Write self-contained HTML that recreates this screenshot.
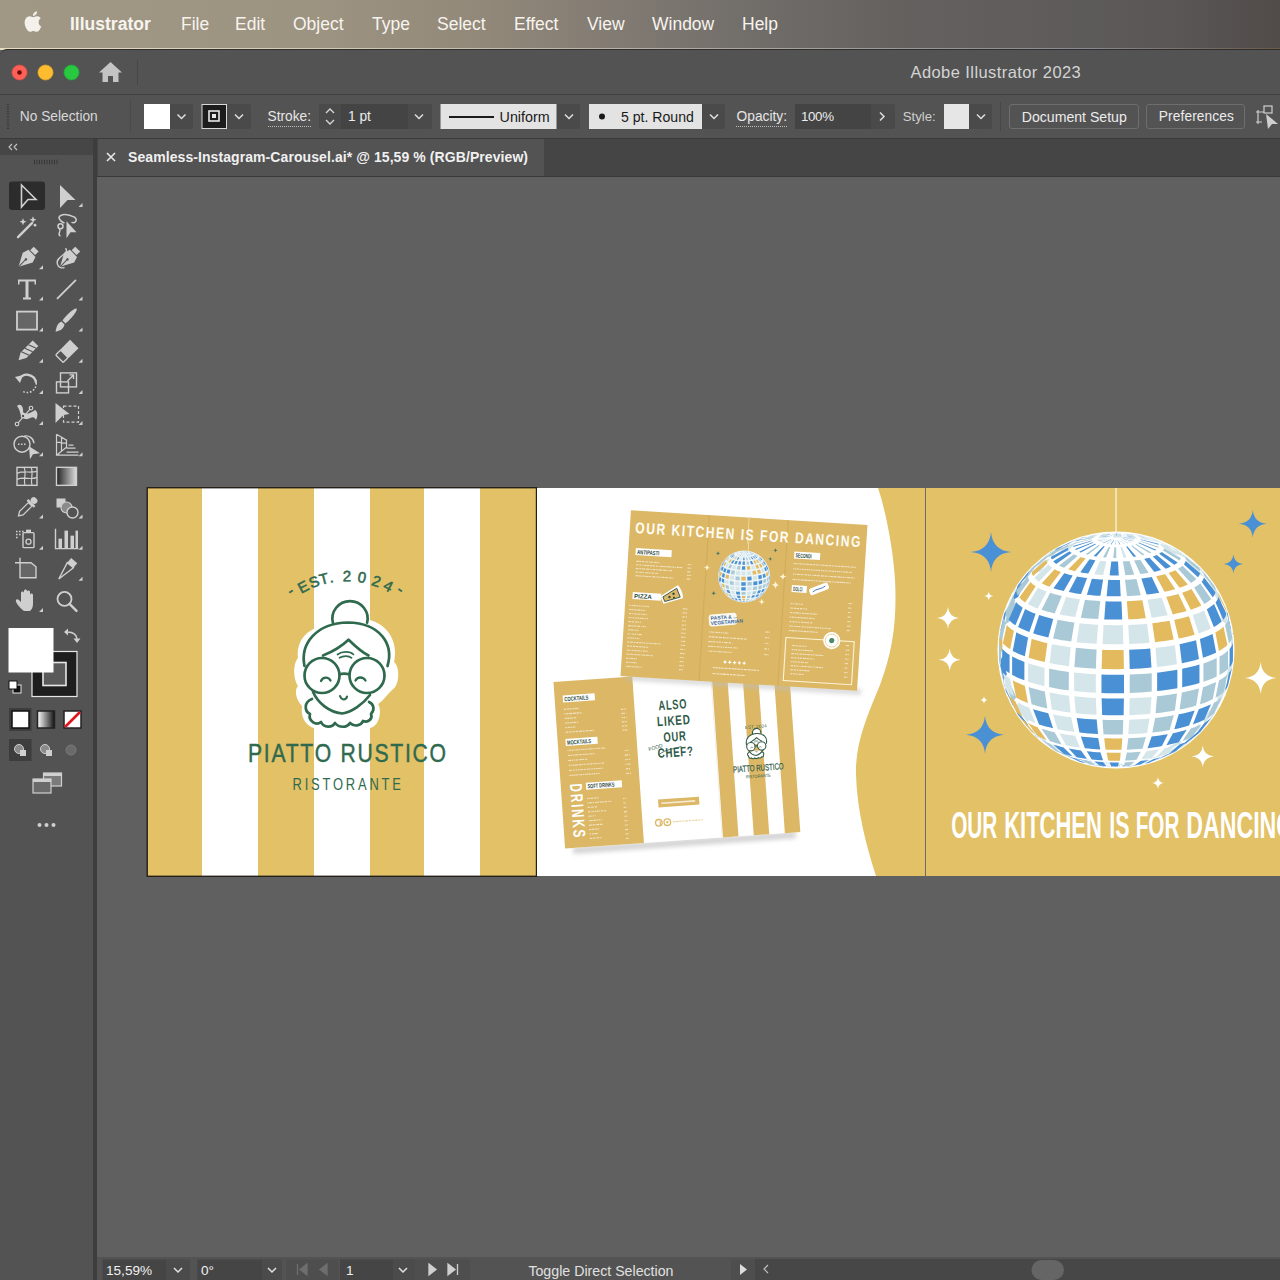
<!DOCTYPE html>
<html><head><meta charset="utf-8"><style>
*{margin:0;padding:0;box-sizing:border-box}
html,body{width:1280px;height:1280px;overflow:hidden;background:#606060;font-family:"Liberation Sans",sans-serif}
.a{position:absolute}
.t{position:absolute;white-space:nowrap;line-height:1}
svg{position:absolute;left:0;top:0;overflow:visible}
</style></head><body>
<div class="a" style="left:0;top:0;width:1280px;height:49px;background:linear-gradient(90deg,#a09784 0%,#9c9381 25%,#918879 38%,#827b73 48%,#726e6a 58%,#64615f 70%,#5d5b5a 85%,#595655 92%,#514b49 100%)"></div>
<div class="a" style="left:0;top:47.5px;width:1280px;height:2px;background:linear-gradient(90deg,#e8dcc0 0%,#cfc6b4 30%,#a8a39c 60%,#8a8890 85%,#6a5a48 100%)"></div>
<div class="a" style="left:0;top:49px;width:1280px;height:1231px;background:#535353;border-top-left-radius:7px;border-top:1px solid #2e2e2e"></div>
<div class="a" style="left:0;top:94px;width:1280px;height:1px;background:#3f3f3f"></div>
<div class="a" style="left:0;top:138px;width:1280px;height:1px;background:#3a3a3a"></div>
<div class="a" style="left:97px;top:139px;width:1183px;height:37px;background:#454545"></div>
<div class="a" style="left:98px;top:139px;width:446px;height:37px;background:#535353"></div>
<div class="a" style="left:97px;top:176px;width:1183px;height:1px;background:#383838"></div>
<div class="a" style="left:0;top:139px;width:93px;height:16px;background:#464646"></div>
<div class="a" style="left:92.5px;top:139px;width:4px;height:1141px;background:#3d3d3d"></div>
<div class="a" style="left:96.5px;top:177px;width:1183.5px;height:1080px;background:#606060"></div>
<div class="a" style="left:97px;top:1257px;width:1183px;height:23px;background:#535353"></div>
<svg width="1280" height="1280"><defs><filter id="blur2" x="-20%" y="-200%" width="140%" height="500%"><feGaussianBlur stdDeviation="2"/></filter><clipPath id="cvclip"><rect x="97" y="177" width="1183" height="1080"/></clipPath></defs><g clip-path="url(#cvclip)"><rect x="147.5" y="488" width="389" height="388" fill="#e3c167"/><rect x="202" y="488" width="56" height="388" fill="#ffffff"/><rect x="314" y="488" width="56" height="388" fill="#ffffff"/><rect x="424" y="488" width="56" height="388" fill="#ffffff"/><rect x="147.2" y="487.7" width="389.3" height="388.6" fill="none" stroke="#262118" stroke-width="1.4"/><text x="0" y="0.6" transform="translate(292.80 594.20) rotate(-36.3)" text-anchor="middle" font-size="15" fill="#2f6a4e" stroke="#2f6a4e" stroke-width="0.55" font-family="Liberation Sans" style="font-weight:normal">-</text><text x="0" y="4.6" transform="translate(303.50 587.44) rotate(-28.3)" text-anchor="middle" font-size="15" fill="#2f6a4e" stroke="#2f6a4e" stroke-width="0.55" font-family="Liberation Sans" style="font-weight:normal">E</text><text x="0" y="4.6" transform="translate(314.29 582.51) rotate(-20.8)" text-anchor="middle" font-size="15" fill="#2f6a4e" stroke="#2f6a4e" stroke-width="0.55" font-family="Liberation Sans" style="font-weight:normal">S</text><text x="0" y="4.6" transform="translate(323.94 579.45) rotate(-14.4)" text-anchor="middle" font-size="15" fill="#2f6a4e" stroke="#2f6a4e" stroke-width="0.55" font-family="Liberation Sans" style="font-weight:normal">T</text><text x="0" y="4.6" transform="translate(331.37 577.87) rotate(-9.6)" text-anchor="middle" font-size="15" fill="#2f6a4e" stroke="#2f6a4e" stroke-width="0.55" font-family="Liberation Sans" style="font-weight:normal">.</text><text x="0" y="4.6" transform="translate(346.82 576.60) rotate(0.2)" text-anchor="middle" font-size="15" fill="#2f6a4e" stroke="#2f6a4e" stroke-width="0.55" font-family="Liberation Sans" style="font-weight:normal">2</text><text x="0" y="4.6" transform="translate(361.94 577.92) rotate(9.8)" text-anchor="middle" font-size="15" fill="#2f6a4e" stroke="#2f6a4e" stroke-width="0.55" font-family="Liberation Sans" style="font-weight:normal">0</text><text x="0" y="4.6" transform="translate(376.33 581.65) rotate(19.2)" text-anchor="middle" font-size="15" fill="#2f6a4e" stroke="#2f6a4e" stroke-width="0.55" font-family="Liberation Sans" style="font-weight:normal">2</text><text x="0" y="4.6" transform="translate(387.96 586.63) rotate(27.2)" text-anchor="middle" font-size="15" fill="#2f6a4e" stroke="#2f6a4e" stroke-width="0.55" font-family="Liberation Sans" style="font-weight:normal">4</text><text x="0" y="0.6" transform="translate(398.26 592.82) rotate(34.8)" text-anchor="middle" font-size="15" fill="#2f6a4e" stroke="#2f6a4e" stroke-width="0.55" font-family="Liberation Sans" style="font-weight:normal">-</text><g transform="translate(346 666) scale(1.0)" fill="none" stroke="#2f6a4e" stroke-width="2.7" stroke-linecap="round" stroke-linejoin="round"><path d="M-14 -42 C-14 -58 14 -72 24 -46 C44 -40 52 -22 48 -4 C54 0 54 20 46 24 C40 30 36 36 32 38 C36 44 34 60 24 62 C14 66 -6 66 -20 64 C-34 64 -46 58 -44 40 C-50 34 -52 24 -48 20 C-54 10 -52 -4 -48 -8 C-50 -26 -38 -40 -14 -42Z" fill="#ffffff" stroke="none"/><path d="M-13.1 -43.2 A17.6 17.6 0 1 1 21.1 -43.2" fill="#ffffff"/><path d="M-41.5 0 C-46 -22 -30 -43 2 -43.5 C34 -43 48 -22 41.5 0" fill="#ffffff"/><path d="M-34 33 C-42 36 -42 45 -36 48 C-38 55 -30 60 -25 56 C-22 62 -14 62 -11 57 C-7 62 1 62 4 57 C8 61 15 60 17 55 C22 57 27 53 25 48 C29 44 28 38 23 36" fill="#ffffff"/><path d="M-33 26 C-28 37 -17 46 -4 47.5 C6 46 17 38 24 29" fill="#ffffff"/><path d="M-23 -10.5 C-12 -15 -4 -20 2.5 -26.3 C9 -20 15 -14 22.5 -10.5" /><path d="M-8.5 -11.5 C-4 -15 4 -15 7.5 -11.5 M-6.5 -8.2 C-3 -10.5 3 -10.5 5.5 -8.2" stroke-width="1.7"/><circle cx="-24" cy="9.5" r="17.5" fill="#ffffff"/><circle cx="21" cy="9.5" r="17.5" fill="#ffffff"/><path d="M-6.5 8.3 C-4 7.6 0 7.6 3.5 8.3" /><path d="M-25 15 C-23 10.5 -17.5 10.5 -15.5 14.5 M9.5 14.5 C11.5 10.5 17 10.5 19.5 14.5" stroke-width="2.3"/><path d="M-6 30 C-4.5 34.5 0 34.5 1 30.5" stroke-width="2.1"/></g><g transform="translate(248 762.2) scale(0.8 1)"><text x="0" y="0" font-size="26.4" fill="#2f6a4e" font-family="Liberation Sans" stroke="#2f6a4e" stroke-width="0.45" textLength="247.5" lengthAdjust="spacing">PIATTO RUSTICO</text></g><g transform="translate(292.5 789.5) scale(0.82 1)"><text x="0" y="0" font-size="15.8" fill="#2f6a4e" font-family="Liberation Sans" textLength="132.3" lengthAdjust="spacing">RISTORANTE</text></g><rect x="537" y="488" width="389" height="388" fill="#ffffff"/><path d="M878 488 C884 505 893 545 895 580 C897 620 893 650 880 685 C866 718 855 745 856 775 C857 810 866 845 876 876 L925 876 L925 488Z" fill="#e3c167"/><g transform="translate(676.5 757) rotate(-4) translate(-117.5 -83.5)"><rect x="8" y="166" width="223" height="7" fill="#b8b8b8" opacity="0.6" filter="url(#blur2)"/><rect x="0" y="0" width="235" height="167" fill="#ffffff"/><rect x="0" y="0" width="79" height="167" fill="#dcb866"/><rect x="158.3" y="0" width="15.5" height="167" fill="#dcb866"/><rect x="189.1" y="0" width="15.5" height="167" fill="#dcb866"/><rect x="220.3" y="0" width="15.5" height="167" fill="#dcb866"/><rect x="157" y="0" width="0.8" height="167" fill="#e6e0d0" opacity="0.6"/><rect x="8.2" y="14.2" width="32" height="7" fill="#ffffff"/><text x="9.7" y="20.0" font-size="6" font-weight="bold" fill="#2c4a40" font-family="Liberation Sans" textLength="24.0" lengthAdjust="spacingAndGlyphs">COCKTAILS</text><path d="M8.6 28.12 h15.0" stroke="#ffffff" stroke-width="1.1" stroke-dasharray="2.1 0.9 2.5 0.4 2.5 0.6 1.3 0.5 2.8 0.8 2.4 0.5" opacity="0.6"/><path d="M8.6 32.72 h18.0" stroke="#ffffff" stroke-width="1.1" stroke-dasharray="1.3 0.6 2.3 0.6 3.0 0.7 3.1 0.6 2.8 0.8 1.4 0.7" opacity="0.6"/><path d="M8.6 37.32 h12.0" stroke="#ffffff" stroke-width="1.1" stroke-dasharray="2.0 0.6 2.5 0.7 2.8 0.8 2.2 0.9 2.3 0.5 2.3 0.6" opacity="0.6"/><path d="M8.6 41.92 h13.5" stroke="#ffffff" stroke-width="1.1" stroke-dasharray="1.5 0.4 2.6 0.5 2.9 0.4 3.0 0.9 2.2 0.7 1.7 0.7" opacity="0.6"/><path d="M8.6 46.52 h10.5" stroke="#ffffff" stroke-width="1.1" stroke-dasharray="1.9 0.9 2.0 0.6 1.2 0.7 2.3 0.6 1.3 0.5 1.5 0.7" opacity="0.6"/><path d="M8.6 51.12 h28.5" stroke="#ffffff" stroke-width="1.1" stroke-dasharray="2.8 0.8 3.2 0.6 1.7 0.9 2.6 0.9 3.1 0.7 1.9 0.8" opacity="0.6"/><path d="M65.5 32.10 h5.0" stroke="#ffffff" stroke-width="1.1" stroke-dasharray="2.0 0.6 0.9 0.5 1.0 0.6 2.0 0.5 1.8 0.5 2.0 0.4" opacity="0.6"/><path d="M65.5 36.30 h5.0" stroke="#ffffff" stroke-width="1.1" stroke-dasharray="2.4 0.5 0.9 1.0 2.9 0.5 2.8 0.8 2.6 0.7 3.1 0.9" opacity="0.6"/><path d="M65.5 40.50 h5.0" stroke="#ffffff" stroke-width="1.1" stroke-dasharray="1.2 0.8 1.5 1.0 1.4 0.6 1.7 1.0 0.9 0.6 1.8 0.7" opacity="0.6"/><path d="M65.5 44.70 h5.0" stroke="#ffffff" stroke-width="1.1" stroke-dasharray="2.8 0.8 2.0 0.6 3.1 0.7 2.0 0.9 1.1 0.6 1.9 0.9" opacity="0.6"/><path d="M65.5 48.90 h5.0" stroke="#ffffff" stroke-width="1.1" stroke-dasharray="1.7 0.7 3.0 0.7 1.2 0.7 3.0 0.6 0.9 0.6 2.0 0.6" opacity="0.6"/><path d="M65.5 53.10 h5.0" stroke="#ffffff" stroke-width="1.1" stroke-dasharray="2.0 0.6 2.8 0.8 2.7 1.0 0.9 0.7 2.5 0.7 1.8 0.9" opacity="0.6"/><rect x="7.9" y="57.8" width="32" height="7" fill="#ffffff"/><text x="9.4" y="63.6" font-size="6" font-weight="bold" fill="#2c4a40" font-family="Liberation Sans" textLength="24.0" lengthAdjust="spacingAndGlyphs">MOCKTAILS</text><path d="M9.3 69.46 h38.0" stroke="#ffffff" stroke-width="1.1" stroke-dasharray="0.9 0.8 2.0 0.7 1.6 0.8 0.9 0.4 2.8 0.6 1.1 0.7" opacity="0.6"/><path d="M9.3 74.46 h26.6" stroke="#ffffff" stroke-width="1.1" stroke-dasharray="2.6 0.5 1.5 0.5 1.0 0.7 2.9 0.5 1.4 0.4 2.0 0.8" opacity="0.6"/><path d="M9.3 79.46 h19.0" stroke="#ffffff" stroke-width="1.1" stroke-dasharray="2.7 0.4 1.5 0.9 1.5 0.8 1.9 1.0 3.0 0.4 1.9 1.0" opacity="0.6"/><path d="M9.3 84.46 h36.1" stroke="#ffffff" stroke-width="1.1" stroke-dasharray="1.2 0.7 1.0 0.8 1.9 0.5 3.1 0.9 2.8 0.6 0.9 0.5" opacity="0.6"/><path d="M9.3 89.46 h34.2" stroke="#ffffff" stroke-width="1.1" stroke-dasharray="3.2 0.9 1.6 1.0 1.5 0.8 1.7 0.6 2.6 0.9 2.4 1.0" opacity="0.6"/><path d="M9.3 94.46 h30.4" stroke="#ffffff" stroke-width="1.1" stroke-dasharray="1.4 0.8 1.7 0.4 1.1 0.5 2.6 0.9 1.1 0.4 1.8 0.8" opacity="0.6"/><path d="M66.1 73.44 h5.0" stroke="#ffffff" stroke-width="1.1" stroke-dasharray="1.0 0.8 1.9 1.0 2.2 0.6 2.2 0.4 2.7 0.4 3.2 0.7" opacity="0.6"/><path d="M66.1 78.04 h5.0" stroke="#ffffff" stroke-width="1.1" stroke-dasharray="3.1 0.8 1.1 0.5 0.9 0.5 2.7 0.5 1.9 0.4 1.2 0.4" opacity="0.6"/><path d="M66.1 82.64 h5.0" stroke="#ffffff" stroke-width="1.1" stroke-dasharray="1.6 0.6 1.1 0.7 2.1 1.0 2.8 0.8 2.6 0.8 2.7 0.7" opacity="0.6"/><path d="M66.1 87.24 h5.0" stroke="#ffffff" stroke-width="1.1" stroke-dasharray="1.2 0.9 3.1 0.9 1.3 0.8 1.6 0.8 1.9 0.6 1.4 0.4" opacity="0.6"/><path d="M66.1 91.84 h5.0" stroke="#ffffff" stroke-width="1.1" stroke-dasharray="2.6 0.5 1.1 0.8 2.2 1.0 2.1 1.0 2.8 0.5 2.5 0.6" opacity="0.6"/><path d="M66.1 96.44 h5.0" stroke="#ffffff" stroke-width="1.1" stroke-dasharray="3.0 0.9 1.1 0.6 1.8 0.4 1.5 0.7 1.7 1.0 2.7 0.9" opacity="0.6"/><rect x="25.2" y="102.8" width="36" height="7" fill="#ffffff"/><text x="26.7" y="108.6" font-size="6" font-weight="bold" fill="#2c4a40" font-family="Liberation Sans" textLength="27.0" lengthAdjust="spacingAndGlyphs">SOFT DRINKS</text><path d="M25.4 118.71 h12.0" stroke="#ffffff" stroke-width="1.1" stroke-dasharray="1.5 0.5 1.0 0.6 2.4 0.8 2.6 0.9 1.4 0.8 1.9 0.4" opacity="0.6"/><path d="M25.4 123.15 h24.0" stroke="#ffffff" stroke-width="1.1" stroke-dasharray="1.2 0.7 2.6 0.8 1.3 0.9 1.7 0.5 2.0 0.8 2.4 0.4" opacity="0.6"/><path d="M25.4 127.60 h9.6" stroke="#ffffff" stroke-width="1.1" stroke-dasharray="2.4 0.9 3.1 0.8 2.3 0.8 0.8 0.7 1.8 0.5 1.5 0.6" opacity="0.6"/><path d="M25.4 132.04 h18.0" stroke="#ffffff" stroke-width="1.1" stroke-dasharray="2.1 0.7 0.8 0.8 1.9 0.7 1.4 0.6 2.9 0.8 2.7 0.8" opacity="0.6"/><path d="M25.4 136.48 h7.2" stroke="#ffffff" stroke-width="1.1" stroke-dasharray="1.5 0.4 1.5 0.9 1.0 1.0 2.8 0.5 2.9 0.6 2.0 0.8" opacity="0.6"/><path d="M25.4 140.93 h13.2" stroke="#ffffff" stroke-width="1.1" stroke-dasharray="1.3 0.5 2.3 0.6 2.6 0.6 1.5 0.7 1.5 0.9 2.0 0.7" opacity="0.6"/><path d="M25.4 145.37 h14.4" stroke="#ffffff" stroke-width="1.1" stroke-dasharray="3.1 0.6 2.8 0.9 3.0 0.6 2.9 0.7 1.6 0.4 0.9 0.6" opacity="0.6"/><path d="M25.4 149.82 h9.6" stroke="#ffffff" stroke-width="1.1" stroke-dasharray="2.0 0.6 2.7 0.7 2.2 0.4 2.6 0.9 2.9 0.8 1.9 0.5" opacity="0.6"/><path d="M25.4 154.26 h8.4" stroke="#ffffff" stroke-width="1.1" stroke-dasharray="1.6 0.9 2.2 0.5 3.0 0.4 2.2 0.9 2.0 0.6 1.9 0.8" opacity="0.6"/><path d="M25.4 158.71 h12.0" stroke="#ffffff" stroke-width="1.1" stroke-dasharray="2.1 0.7 2.9 0.8 3.0 0.5 1.0 0.6 2.5 1.0 1.6 0.8" opacity="0.6"/><path d="M61.3 121.22 h3.0" stroke="#ffffff" stroke-width="1.1" stroke-dasharray="1.3 0.8 2.9 0.9 2.9 0.8 2.5 0.6 2.1 0.5 3.0 0.4" opacity="0.6"/><path d="M61.3 125.66 h3.0" stroke="#ffffff" stroke-width="1.1" stroke-dasharray="1.9 0.9 2.2 0.4 1.0 0.9 1.4 1.0 2.4 0.8 1.6 0.9" opacity="0.6"/><path d="M61.3 130.11 h3.0" stroke="#ffffff" stroke-width="1.1" stroke-dasharray="1.7 0.5 1.0 0.9 2.6 0.5 2.0 1.0 3.0 0.5 0.8 0.7" opacity="0.6"/><path d="M61.3 134.55 h3.0" stroke="#ffffff" stroke-width="1.1" stroke-dasharray="3.0 0.9 2.7 0.6 2.2 0.4 1.4 0.5 2.2 0.9 1.7 1.0" opacity="0.6"/><path d="M61.3 139.00 h3.0" stroke="#ffffff" stroke-width="1.1" stroke-dasharray="1.0 0.4 2.8 0.9 1.6 0.8 1.3 1.0 1.8 0.6 0.9 0.9" opacity="0.6"/><path d="M61.3 143.44 h3.0" stroke="#ffffff" stroke-width="1.1" stroke-dasharray="1.4 0.5 2.8 0.9 1.1 0.8 2.0 1.0 3.1 0.5 1.0 0.9" opacity="0.6"/><path d="M61.3 147.88 h3.0" stroke="#ffffff" stroke-width="1.1" stroke-dasharray="0.9 0.7 3.0 1.0 1.3 0.7 1.5 0.6 2.1 0.6 2.3 0.6" opacity="0.6"/><path d="M61.3 152.33 h3.0" stroke="#ffffff" stroke-width="1.1" stroke-dasharray="2.8 0.9 1.5 0.9 2.8 0.5 2.0 0.5 2.6 0.6 1.0 0.6" opacity="0.6"/><path d="M61.3 156.77 h3.0" stroke="#ffffff" stroke-width="1.1" stroke-dasharray="3.1 0.8 2.3 0.5 1.5 0.8 0.9 0.6 2.8 0.5 1.2 0.6" opacity="0.6"/><path d="M61.3 161.22 h3.0" stroke="#ffffff" stroke-width="1.1" stroke-dasharray="1.2 0.4 2.8 0.5 1.2 0.7 2.3 1.0 3.1 0.8 2.6 0.8" opacity="0.6"/><text x="0" y="0" transform="translate(9.4 102.9) rotate(90)" font-size="17" font-weight="bold" fill="#ffffff" font-family="Liberation Sans" textLength="56" lengthAdjust="spacingAndGlyphs" letter-spacing="3">DRINKS</text><text x="103.1" y="35.6" font-size="13.5" font-weight="bold" fill="#2f5a48" font-family="Liberation Sans" textLength="28.7" lengthAdjust="spacingAndGlyphs" letter-spacing="1">ALSO</text><text x="100.5" y="51.6" font-size="13.5" font-weight="bold" fill="#2f5a48" font-family="Liberation Sans" textLength="33.6" lengthAdjust="spacingAndGlyphs" letter-spacing="1">LIKED</text><text x="105.8" y="67.6" font-size="13.5" font-weight="bold" fill="#2f5a48" font-family="Liberation Sans" textLength="23.1" lengthAdjust="spacingAndGlyphs" letter-spacing="1">OUR</text><text x="99.0" y="83.2" font-size="13.5" font-weight="bold" fill="#2f5a48" font-family="Liberation Sans" textLength="35.9" lengthAdjust="spacingAndGlyphs" letter-spacing="1">CHEF?</text><path d="M99.3 80.2 C109.3 74.2 113.3 76.2 123.3 73.2" stroke="#2f5a48" stroke-width="0.8" fill="none"/><text x="90.5" y="75.6" transform="rotate(-12 90.5 75.6)" font-size="5" fill="#2f5a48" font-family="Liberation Sans">FOOD</text><rect x="96.1" y="124.6" width="41" height="8" fill="#dcb866"/><rect x="99.1" y="127.8" width="34" height="1.6" fill="#ffffff" opacity="0.7"/><circle cx="95.3" cy="147.9" r="3.3" fill="none" stroke="#dcb866" stroke-width="1.3"/><circle cx="103.8" cy="147.9" r="3.3" fill="none" stroke="#dcb866" stroke-width="1.3"/><circle cx="103.8" cy="147.9" r="1.2" fill="#dcb866"/><rect x="96.1" y="146.4" width="1.2" height="4" fill="#dcb866"/><path d="M109.3 147.9 h30" stroke="#dcb866" stroke-width="1.2" stroke-dasharray="2 0.8 3 0.8 2 1" opacity="0.6"/><g transform="translate(198.2 76.1) scale(0.24)" fill="none" stroke="#2f5a48" stroke-width="4.5" stroke-linecap="round" stroke-linejoin="round"><path d="M-13.1 -43.2 A17.6 17.6 0 1 1 21.1 -43.2" fill="#ffffff"/><path d="M-41.5 0 C-46 -22 -30 -43 2 -43.5 C34 -43 48 -22 41.5 0" fill="#ffffff"/><path d="M-34 33 C-42 36 -42 45 -36 48 C-38 55 -30 60 -25 56 C-22 62 -14 62 -11 57 C-7 62 1 62 4 57 C8 61 15 60 17 55 C22 57 27 53 25 48 C29 44 28 38 23 36" fill="#ffffff"/><path d="M-33 26 C-28 37 -17 46 -4 47.5 C6 46 17 38 24 29" fill="#ffffff"/><path d="M-23 -10.5 C-12 -15 -4 -20 2.5 -26.3 C9 -20 15 -14 22.5 -10.5" /><path d="M-8.5 -11.5 C-4 -15 4 -15 7.5 -11.5 M-6.5 -8.2 C-3 -10.5 3 -10.5 5.5 -8.2" stroke-width="1.7"/><circle cx="-24" cy="9.5" r="17.5" fill="#ffffff"/><circle cx="21" cy="9.5" r="17.5" fill="#ffffff"/><path d="M-6.5 8.3 C-4 7.6 0 7.6 3.5 8.3" /><path d="M-25 15 C-23 10.5 -17.5 10.5 -15.5 14.5 M9.5 14.5 C11.5 10.5 17 10.5 19.5 14.5" stroke-width="2.3"/><path d="M-6 30 C-4.5 34.5 0 34.5 1 30.5" stroke-width="2.1"/></g><text x="173.1" y="103.2" font-size="9" fill="#2f5a48" font-family="Liberation Sans" textLength="50.6" lengthAdjust="spacingAndGlyphs" stroke="#2f5a48" stroke-width="0.2">PIATTO RUSTICO</text><text x="185.3" y="109.8" font-size="4.5" fill="#2f5a48" font-family="Liberation Sans" textLength="25" lengthAdjust="spacingAndGlyphs">RISTORANTE</text><text x="187.8" y="60.3" font-size="4.5" fill="#2f5a48" opacity="0.8" font-family="Liberation Sans" textLength="22" lengthAdjust="spacingAndGlyphs">EST. 2024</text></g><g transform="translate(744 600.5) rotate(3.6) translate(-118.5 -83.0)"><rect x="6" y="164" width="235" height="6" fill="#bdbdbd" opacity="0.55" filter="url(#blur2)"/><rect x="0" y="0" width="237" height="166" fill="#dcb866"/><rect x="78" y="0" width="1.2" height="166" fill="#c9a655" opacity="0.6"/><rect x="157" y="0" width="1.2" height="166" fill="#c9a655" opacity="0.6"/><rect x="118.0" y="0" width="0.8" height="26" fill="#f3e2b5" opacity="0.8"/><text x="5.5" y="22.5" font-size="15.5" font-weight="bold" fill="#fffdf5" font-family="Liberation Sans" textLength="227" lengthAdjust="spacingAndGlyphs" letter-spacing="2">OUR KITCHEN IS FOR DANCING</text><rect x="7.3" y="37.5" width="36" height="7" fill="#ffffff"/><text x="8.8" y="43.3" font-size="6" font-weight="bold" fill="#2c4a40" font-family="Liberation Sans" textLength="22.3" lengthAdjust="spacingAndGlyphs">ANTIPASTI</text><path d="M8.5 50.55 h23.2" stroke="#ffffff" stroke-width="1.1" stroke-dasharray="2.7 0.4 1.6 0.6 2.7 0.9 3.2 0.7 0.9 0.5 2.4 1.0" opacity="0.6"/><path d="M8.5 54.17 h46.5" stroke="#ffffff" stroke-width="1.1" stroke-dasharray="2.4 0.9 1.8 0.8 0.9 0.9 2.5 0.4 2.6 0.6 2.3 0.5" opacity="0.6"/><path d="M8.5 57.80 h36.3" stroke="#ffffff" stroke-width="1.1" stroke-dasharray="2.5 1.0 2.1 0.8 3.0 0.9 2.8 0.5 1.1 1.0 0.8 0.5" opacity="0.6"/><path d="M8.5 61.42 h23.2" stroke="#ffffff" stroke-width="1.1" stroke-dasharray="2.7 1.0 3.1 0.9 0.9 0.9 0.9 0.5 2.1 0.7 1.2 0.9" opacity="0.6"/><path d="M8.5 65.05 h38.1" stroke="#ffffff" stroke-width="1.1" stroke-dasharray="2.9 0.6 1.0 0.4 1.6 0.9 1.9 0.7 2.6 0.6 2.7 0.9" opacity="0.6"/><path d="M60.0 50.55 h4.0" stroke="#ffffff" stroke-width="1.1" stroke-dasharray="1.8 1.0 0.9 0.7 2.5 0.7 1.6 0.9 2.9 0.4 1.1 0.9" opacity="0.6"/><path d="M60.0 54.17 h4.0" stroke="#ffffff" stroke-width="1.1" stroke-dasharray="2.7 0.6 1.3 0.4 1.6 0.8 2.5 0.6 2.2 0.7 2.0 0.9" opacity="0.6"/><path d="M60.0 57.80 h4.0" stroke="#ffffff" stroke-width="1.1" stroke-dasharray="2.9 0.9 2.7 0.9 1.3 0.5 1.2 0.7 1.3 0.8 0.9 0.6" opacity="0.6"/><path d="M60.0 61.42 h4.0" stroke="#ffffff" stroke-width="1.1" stroke-dasharray="1.7 0.7 2.6 0.4 1.0 0.7 1.7 0.8 2.2 0.4 1.6 0.8" opacity="0.6"/><path d="M60.0 65.05 h4.0" stroke="#ffffff" stroke-width="1.1" stroke-dasharray="3.0 0.7 0.9 0.5 2.2 0.4 1.8 0.8 2.9 0.7 2.4 0.8" opacity="0.6"/><rect x="7" y="81.5" width="28.6" height="7" fill="#ffffff"/><text x="8.5" y="87.3" font-size="6" font-weight="bold" fill="#2c4a40" font-family="Liberation Sans" textLength="17.7" lengthAdjust="spacingAndGlyphs">PIZZA</text><g transform="translate(36.6 87.6) rotate(-25)"><path d="M0 -4 L20 -8 C22 -6 22 4 20 6 L0 4Z" fill="#ffffff"/><path d="M2 -2.5 L18 -5.5 L18 4 L2 2.5Z" fill="#dcb866" stroke="#2c4a40" stroke-width="0.8"/><circle cx="8" cy="0" r="1.2" fill="#2c4a40"/><circle cx="13" cy="-1.5" r="1.2" fill="#2c4a40"/><circle cx="12" cy="2.2" r="1" fill="#2c4a40"/></g><path d="M4.5 95.05 h19.5" stroke="#ffffff" stroke-width="1.1" stroke-dasharray="1.4 0.9 1.7 0.5 2.1 0.6 1.9 0.5 1.5 0.9 1.0 0.9" opacity="0.6"/><path d="M4.5 99.12 h16.0" stroke="#ffffff" stroke-width="1.1" stroke-dasharray="1.8 0.4 2.2 0.6 2.3 0.7 2.8 0.5 2.0 0.9 2.9 0.6" opacity="0.6"/><path d="M4.5 103.18 h17.8" stroke="#ffffff" stroke-width="1.1" stroke-dasharray="1.9 0.9 1.0 0.8 1.0 0.6 1.7 0.6 2.8 0.7 1.4 0.6" opacity="0.6"/><path d="M4.5 107.25 h19.5" stroke="#ffffff" stroke-width="1.1" stroke-dasharray="1.8 0.8 1.1 0.8 1.5 0.9 1.8 0.6 1.4 0.5 1.7 0.5" opacity="0.6"/><path d="M4.5 111.32 h12.4" stroke="#ffffff" stroke-width="1.1" stroke-dasharray="2.8 0.6 2.2 0.9 2.5 0.4 1.2 0.9 2.1 1.0 1.0 0.7" opacity="0.6"/><path d="M4.5 115.38 h17.8" stroke="#ffffff" stroke-width="1.1" stroke-dasharray="2.8 0.5 1.6 0.5 2.7 0.9 2.8 1.0 0.8 0.7 1.8 0.6" opacity="0.6"/><path d="M4.5 119.45 h10.7" stroke="#ffffff" stroke-width="1.1" stroke-dasharray="1.8 0.6 3.2 0.9 1.2 0.5 1.5 0.7 1.5 0.8 2.5 0.4" opacity="0.6"/><path d="M4.5 123.52 h14.2" stroke="#ffffff" stroke-width="1.1" stroke-dasharray="1.7 1.0 1.0 1.0 2.1 0.6 1.0 0.6 1.0 0.9 3.1 0.8" opacity="0.6"/><path d="M4.5 127.58 h12.4" stroke="#ffffff" stroke-width="1.1" stroke-dasharray="2.3 0.7 2.1 0.4 1.1 0.7 1.4 0.8 1.8 0.9 0.9 0.8" opacity="0.6"/><path d="M4.5 131.65 h33.7" stroke="#ffffff" stroke-width="1.1" stroke-dasharray="2.2 0.9 2.8 0.7 1.2 0.7 2.8 0.8 2.0 0.6 3.0 0.8" opacity="0.6"/><path d="M4.5 135.72 h21.3" stroke="#ffffff" stroke-width="1.1" stroke-dasharray="2.1 0.9 2.2 0.9 2.2 0.7 2.4 0.8 2.4 0.5 0.9 0.5" opacity="0.6"/><path d="M4.5 139.78 h21.3" stroke="#ffffff" stroke-width="1.1" stroke-dasharray="3.1 0.6 1.1 0.7 1.3 0.8 2.3 0.8 2.3 1.0 1.4 0.8" opacity="0.6"/><path d="M4.5 143.85 h26.6" stroke="#ffffff" stroke-width="1.1" stroke-dasharray="3.0 0.6 3.1 0.7 1.0 0.5 1.5 0.6 2.4 0.9 0.9 0.6" opacity="0.6"/><path d="M4.5 147.92 h10.7" stroke="#ffffff" stroke-width="1.1" stroke-dasharray="2.0 0.7 1.3 0.6 2.5 0.8 1.5 0.4 2.7 0.7 2.6 0.6" opacity="0.6"/><path d="M4.5 151.98 h10.7" stroke="#ffffff" stroke-width="1.1" stroke-dasharray="2.6 0.8 1.2 0.8 1.4 0.5 2.2 0.4 1.5 0.9 1.7 0.7" opacity="0.6"/><path d="M4.5 156.05 h16.0" stroke="#ffffff" stroke-width="1.1" stroke-dasharray="0.9 0.5 2.3 0.5 1.5 0.7 1.0 0.6 1.9 0.7 2.5 0.8" opacity="0.6"/><path d="M58.0 95.05 h4.5" stroke="#ffffff" stroke-width="1.1" stroke-dasharray="2.0 0.6 3.0 0.8 3.1 0.9 0.9 0.5 1.7 0.8 1.5 0.6" opacity="0.6"/><path d="M58.0 99.12 h4.5" stroke="#ffffff" stroke-width="1.1" stroke-dasharray="2.0 0.7 2.7 0.8 1.6 0.6 2.6 0.7 3.1 0.5 2.9 0.9" opacity="0.6"/><path d="M58.0 103.18 h4.5" stroke="#ffffff" stroke-width="1.1" stroke-dasharray="2.5 0.9 2.4 1.0 2.6 0.8 2.2 0.9 2.9 0.6 1.1 0.9" opacity="0.6"/><path d="M58.0 107.25 h4.5" stroke="#ffffff" stroke-width="1.1" stroke-dasharray="1.0 0.4 0.8 0.8 0.9 0.9 2.8 0.5 2.2 0.7 2.8 0.5" opacity="0.6"/><path d="M58.0 111.32 h4.5" stroke="#ffffff" stroke-width="1.1" stroke-dasharray="2.2 1.0 1.1 0.9 2.6 0.8 1.6 0.7 0.9 0.9 2.4 0.7" opacity="0.6"/><path d="M58.0 115.38 h4.5" stroke="#ffffff" stroke-width="1.1" stroke-dasharray="1.1 0.7 1.3 0.4 1.8 0.7 3.0 0.6 1.1 0.9 1.1 0.9" opacity="0.6"/><path d="M58.0 119.45 h4.5" stroke="#ffffff" stroke-width="1.1" stroke-dasharray="1.5 0.8 1.8 0.7 2.2 0.8 2.5 0.8 2.9 0.5 1.6 1.0" opacity="0.6"/><path d="M58.0 123.52 h4.5" stroke="#ffffff" stroke-width="1.1" stroke-dasharray="2.5 0.7 2.9 0.6 1.3 1.0 1.0 0.5 2.3 0.7 2.8 0.8" opacity="0.6"/><path d="M58.0 127.58 h4.5" stroke="#ffffff" stroke-width="1.1" stroke-dasharray="0.9 0.6 3.0 0.5 2.9 0.8 2.9 0.5 2.7 0.9 1.0 0.7" opacity="0.6"/><path d="M58.0 131.65 h4.5" stroke="#ffffff" stroke-width="1.1" stroke-dasharray="1.2 1.0 2.7 0.8 2.3 0.5 1.3 0.8 1.1 0.9 2.6 0.8" opacity="0.6"/><path d="M58.0 135.72 h4.5" stroke="#ffffff" stroke-width="1.1" stroke-dasharray="2.8 1.0 2.8 0.7 3.1 0.4 2.7 0.9 2.8 0.6 3.0 0.9" opacity="0.6"/><path d="M58.0 139.78 h4.5" stroke="#ffffff" stroke-width="1.1" stroke-dasharray="2.0 0.4 2.7 0.4 2.1 0.7 1.9 0.8 2.5 0.4 2.7 0.7" opacity="0.6"/><path d="M58.0 143.85 h4.5" stroke="#ffffff" stroke-width="1.1" stroke-dasharray="1.4 0.6 1.9 0.7 1.4 0.6 1.0 0.9 2.0 0.9 0.9 0.7" opacity="0.6"/><path d="M58.0 147.92 h4.5" stroke="#ffffff" stroke-width="1.1" stroke-dasharray="3.2 0.5 2.4 0.9 3.1 0.8 2.8 1.0 2.4 0.7 2.3 0.9" opacity="0.6"/><path d="M58.0 151.98 h4.5" stroke="#ffffff" stroke-width="1.1" stroke-dasharray="2.6 0.7 1.4 0.6 0.8 0.4 2.7 0.6 0.9 0.4 1.9 0.9" opacity="0.6"/><path d="M58.0 156.05 h4.5" stroke="#ffffff" stroke-width="1.1" stroke-dasharray="1.9 0.6 1.4 0.7 1.3 0.9 2.8 0.7 2.7 0.7 2.2 0.5" opacity="0.6"/><rect x="119.19891192893512" y="24" width="0.8" height="9.134603086658473" fill="#f3e2b5"/><g transform="rotate(-3.6 117.19891192893512 59.13460308665847)"><circle cx="117.19891192893512" cy="59.13460308665847" r="26" fill="#eef5f7"/><path d="M121.13 83.14 L121.13 83.13 L121.13 83.12 L121.12 83.11 L121.12 83.10 L118.04 83.48 L118.04 83.48 L118.04 83.48 L118.04 83.49 L118.04 83.49Z" fill="#d4e5ea"/><path d="M131.19 79.35 L131.17 79.24 L131.14 79.14 L131.10 79.03 L131.05 78.92 L127.82 80.80 L127.86 80.88 L127.89 80.96 L127.91 81.04 L127.93 81.13Z" fill="#d4e5ea"/><path d="M95.48 48.92 L95.01 49.20 L94.59 49.49 L94.21 49.78 L93.87 50.07 L93.11 53.49 L93.46 53.19 L93.85 52.89 L94.29 52.60 L94.77 52.31Z" fill="#a9c9d6"/><path d="M96.20 70.74 L96.03 70.98 L95.88 71.23 L95.77 71.48 L95.70 71.73 L97.91 74.65 L97.98 74.42 L98.08 74.20 L98.21 73.98 L98.37 73.76Z" fill="#d4e5ea"/><path d="M113.26 83.31 L113.27 83.32 L113.27 83.33 L113.27 83.34 L113.28 83.36 L116.36 83.53 L116.36 83.53 L116.36 83.53 L116.36 83.53 L116.36 83.53Z" fill="#d4e5ea"/><path d="M102.60 39.49 L102.11 39.66 L101.65 39.84 L101.21 40.02 L100.79 40.21 L98.89 42.73 L99.36 42.52 L99.85 42.32 L100.37 42.12 L100.91 41.93Z" fill="#d4e5ea"/><path d="M135.38 76.11 L135.36 75.92 L135.31 75.73 L135.24 75.55 L135.14 75.36 L132.38 77.85 L132.45 78.01 L132.51 78.17 L132.56 78.33 L132.58 78.48Z" fill="#d4e5ea"/><path d="M121.09 83.42 L121.09 83.41 L121.10 83.40 L121.11 83.39 L121.11 83.38 L118.04 83.54 L118.04 83.54 L118.04 83.54 L118.03 83.55 L118.03 83.55Z" fill="#d4e5ea"/><path d="M108.22 36.01 L107.79 36.10 L107.37 36.20 L106.96 36.30 L106.57 36.41 L104.61 38.17 L105.08 38.04 L105.56 37.92 L106.06 37.80 L106.57 37.69Z" fill="#d4e5ea"/><path d="M113.45 83.58 L113.46 83.59 L113.47 83.61 L113.49 83.62 L113.50 83.63 L116.41 83.59 L116.40 83.59 L116.40 83.59 L116.40 83.59 L116.40 83.58Z" fill="#4a90d5"/><path d="M120.82 83.69 L120.83 83.68 L120.85 83.67 L120.86 83.66 L120.88 83.65 L117.99 83.60 L117.98 83.60 L117.98 83.60 L117.98 83.60 L117.97 83.61Z" fill="#d4e5ea"/><path d="M108.04 82.08 L108.05 82.11 L108.06 82.13 L108.07 82.16 L108.08 82.19 L111.63 83.11 L111.62 83.09 L111.62 83.08 L111.61 83.06 L111.61 83.04Z" fill="#d4e5ea"/><path d="M93.90 65.90 L93.69 66.19 L93.52 66.48 L93.39 66.77 L93.30 67.07 L94.84 70.35 L94.92 70.07 L95.04 69.80 L95.20 69.53 L95.40 69.26Z" fill="#a9c9d6"/><path d="M138.75 72.08 L138.72 71.83 L138.66 71.58 L138.56 71.33 L138.43 71.08 L136.24 74.07 L136.36 74.29 L136.45 74.51 L136.50 74.74 L136.53 74.96Z" fill="#d4e5ea"/><path d="M140.90 50.46 L140.62 50.16 L140.29 49.86 L139.92 49.57 L139.51 49.28 L140.24 52.68 L140.66 52.97 L141.04 53.27 L141.38 53.58 L141.67 53.89Z" fill="#d4e5ea"/><path d="M134.14 40.48 L133.77 40.29 L133.36 40.10 L132.93 39.91 L132.48 39.73 L134.25 42.20 L134.75 42.40 L135.23 42.61 L135.68 42.82 L136.11 43.04Z" fill="#d4e5ea"/><path d="M113.85 83.84 L113.87 83.85 L113.89 83.86 L113.91 83.86 L113.93 83.87 L116.50 83.65 L116.49 83.64 L116.49 83.64 L116.49 83.64 L116.48 83.64Z" fill="#4a90d5"/><path d="M126.25 82.33 L126.26 82.31 L126.28 82.28 L126.29 82.26 L126.30 82.23 L122.76 83.14 L122.75 83.15 L122.74 83.17 L122.73 83.18 L122.73 83.20Z" fill="#d4e5ea"/><path d="M128.43 36.59 L128.05 36.48 L127.67 36.37 L127.27 36.26 L126.86 36.16 L128.63 37.87 L129.12 37.99 L129.59 38.11 L130.05 38.24 L130.49 38.38Z" fill="#d4e5ea"/><path d="M120.34 83.93 L120.36 83.92 L120.38 83.91 L120.40 83.90 L120.43 83.89 L117.89 83.65 L117.89 83.65 L117.88 83.65 L117.88 83.65 L117.87 83.66Z" fill="#d4e5ea"/><path d="M114.45 84.05 L114.47 84.06 L114.50 84.07 L114.53 84.08 L114.56 84.08 L116.63 83.69 L116.63 83.69 L116.62 83.69 L116.61 83.69 L116.61 83.68Z" fill="#4a90d5"/><path d="M119.67 84.13 L119.70 84.12 L119.73 84.11 L119.76 84.10 L119.79 84.10 L117.75 83.69 L117.75 83.69 L117.74 83.70 L117.74 83.70 L117.73 83.70Z" fill="#d4e5ea"/><path d="M115.20 84.22 L115.24 84.23 L115.27 84.23 L115.30 84.24 L115.34 84.24 L116.80 83.72 L116.79 83.72 L116.79 83.72 L116.78 83.72 L116.77 83.72Z" fill="#4a90d5"/><path d="M103.21 79.68 L103.23 79.79 L103.26 79.90 L103.30 80.00 L103.35 80.11 L106.58 81.71 L106.54 81.63 L106.51 81.54 L106.49 81.46 L106.47 81.38Z" fill="#d4e5ea"/><path d="M118.87 84.27 L118.90 84.27 L118.93 84.26 L118.97 84.26 L119.00 84.25 L117.59 83.73 L117.58 83.73 L117.57 83.73 L117.56 83.73 L117.56 83.73Z" fill="#4a90d5"/><path d="M97.31 44.43 L96.89 44.68 L96.51 44.94 L96.17 45.19 L95.87 45.45 L94.39 48.57 L94.72 48.29 L95.08 48.01 L95.49 47.74 L95.93 47.48Z" fill="#4a90d5"/><path d="M118.05 33.87 L117.77 33.87 L117.50 33.87 L117.22 33.86 L116.94 33.87 L116.86 34.64 L117.22 34.63 L117.59 34.64 L117.95 34.64 L118.31 34.65Z" fill="#d4e5ea"/><path d="M116.07 84.33 L116.11 84.34 L116.15 84.34 L116.19 84.34 L116.22 84.34 L116.99 83.75 L116.98 83.75 L116.97 83.75 L116.97 83.74 L116.96 83.74Z" fill="#4a90d5"/><path d="M117.96 84.36 L118.00 84.36 L118.04 84.35 L118.07 84.35 L118.11 84.35 L117.39 83.75 L117.39 83.75 L117.38 83.75 L117.37 83.75 L117.36 83.75Z" fill="#4a90d5"/><path d="M141.14 67.46 L141.12 67.16 L141.04 66.87 L140.93 66.57 L140.77 66.28 L139.26 69.61 L139.40 69.89 L139.51 70.16 L139.58 70.44 L139.61 70.72Z" fill="#d4e5ea"/><path d="M117.01 84.38 L117.05 84.38 L117.09 84.38 L117.13 84.38 L117.17 84.38 L117.19 83.75 L117.18 83.75 L117.18 83.75 L117.17 83.75 L117.16 83.75Z" fill="#4a90d5"/><path d="M92.64 60.76 L92.41 61.08 L92.22 61.39 L92.08 61.71 L91.99 62.03 L92.77 65.54 L92.86 65.23 L92.99 64.92 L93.17 64.61 L93.40 64.31Z" fill="#4a90d5"/><path d="M115.49 33.91 L115.21 33.92 L114.94 33.94 L114.67 33.95 L114.40 33.97 L113.54 34.78 L113.89 34.75 L114.25 34.73 L114.60 34.71 L114.96 34.69Z" fill="#d4e5ea"/><path d="M120.57 34.02 L120.30 34.00 L120.04 33.98 L119.77 33.96 L119.50 33.94 L120.20 34.73 L120.56 34.75 L120.91 34.78 L121.26 34.81 L121.60 34.84Z" fill="#d4e5ea"/><path d="M108.47 82.72 L108.50 82.74 L108.53 82.77 L108.56 82.79 L108.59 82.82 L111.94 83.49 L111.92 83.48 L111.90 83.46 L111.89 83.45 L111.87 83.43Z" fill="#4a90d5"/><path d="M130.92 80.34 L130.98 80.23 L131.04 80.12 L131.09 80.02 L131.13 79.91 L127.89 81.55 L127.85 81.64 L127.82 81.72 L127.77 81.80 L127.72 81.88Z" fill="#d4e5ea"/><path d="M125.62 82.95 L125.65 82.93 L125.69 82.91 L125.72 82.88 L125.75 82.86 L122.42 83.52 L122.40 83.53 L122.38 83.55 L122.36 83.56 L122.34 83.58Z" fill="#d4e5ea"/><path d="M138.87 45.80 L138.62 45.54 L138.33 45.28 L138.00 45.02 L137.63 44.76 L139.05 47.83 L139.44 48.10 L139.79 48.38 L140.10 48.66 L140.37 48.94Z" fill="#d4e5ea"/><path d="M99.02 76.35 L99.04 76.53 L99.09 76.72 L99.16 76.91 L99.25 77.09 L102.02 79.32 L101.94 79.16 L101.88 79.00 L101.84 78.84 L101.82 78.68Z" fill="#d4e5ea"/><path d="M113.02 34.11 L112.76 34.15 L112.51 34.18 L112.26 34.22 L112.02 34.26 L110.43 35.15 L110.75 35.10 L111.07 35.05 L111.40 35.00 L111.74 34.96Z" fill="#d4e5ea"/><path d="M105.51 36.74 L105.17 36.86 L104.85 36.99 L104.54 37.12 L104.24 37.25 L101.86 39.16 L102.21 39.00 L102.58 38.85 L102.96 38.70 L103.36 38.56Z" fill="#a9c9d6"/><path d="M142.46 62.44 L142.43 62.12 L142.35 61.80 L142.22 61.48 L142.05 61.17 L141.28 64.70 L141.45 65.01 L141.57 65.32 L141.64 65.63 L141.67 65.94Z" fill="#d4e5ea"/><path d="M122.89 34.35 L122.65 34.30 L122.41 34.26 L122.17 34.22 L121.92 34.19 L123.37 35.06 L123.69 35.10 L124.01 35.16 L124.33 35.21 L124.64 35.26Z" fill="#d4e5ea"/><path d="M92.48 55.56 L92.24 55.88 L92.05 56.20 L91.91 56.53 L91.82 56.85 L91.81 60.42 L91.90 60.10 L92.05 59.78 L92.23 59.45 L92.47 59.14Z" fill="#e3bb5e"/><path d="M109.41 83.30 L109.45 83.33 L109.50 83.35 L109.55 83.37 L109.60 83.39 L112.56 83.84 L112.53 83.83 L112.50 83.82 L112.47 83.80 L112.44 83.79Z" fill="#4a90d5"/><path d="M134.95 77.38 L135.08 77.20 L135.19 77.01 L135.27 76.83 L135.33 76.64 L132.53 78.94 L132.48 79.09 L132.41 79.25 L132.32 79.41 L132.21 79.56Z" fill="#4a90d5"/><path d="M130.59 37.46 L130.32 37.33 L130.04 37.19 L129.74 37.06 L129.42 36.94 L131.67 38.79 L132.04 38.94 L132.40 39.09 L132.74 39.25 L133.05 39.41Z" fill="#d4e5ea"/><path d="M100.01 40.62 L99.68 40.82 L99.38 41.02 L99.10 41.23 L98.85 41.44 L96.72 44.11 L97.00 43.87 L97.31 43.64 L97.65 43.41 L98.02 43.19Z" fill="#a9c9d6"/><path d="M124.50 83.51 L124.55 83.49 L124.61 83.47 L124.66 83.45 L124.71 83.43 L121.79 83.87 L121.75 83.88 L121.72 83.89 L121.69 83.90 L121.66 83.92Z" fill="#d4e5ea"/><path d="M103.75 80.66 L103.86 80.76 L103.98 80.86 L104.10 80.96 L104.24 81.06 L107.26 82.44 L107.15 82.36 L107.06 82.28 L106.97 82.21 L106.89 82.13Z" fill="#a9c9d6"/><path d="M95.65 72.25 L95.68 72.50 L95.74 72.75 L95.83 73.00 L95.96 73.25 L98.15 76.01 L98.04 75.78 L97.95 75.56 L97.89 75.34 L97.87 75.11Z" fill="#4a90d5"/><path d="M110.79 34.49 L110.57 34.54 L110.36 34.59 L110.15 34.64 L109.94 34.70 L107.71 35.73 L107.98 35.65 L108.26 35.58 L108.54 35.52 L108.83 35.45Z" fill="#d4e5ea"/><path d="M142.63 57.27 L142.60 56.94 L142.52 56.62 L142.39 56.29 L142.21 55.97 L142.22 59.54 L142.40 59.86 L142.52 60.19 L142.60 60.51 L142.63 60.84Z" fill="#d4e5ea"/><path d="M124.88 34.82 L124.69 34.76 L124.48 34.71 L124.28 34.65 L124.07 34.60 L126.18 35.59 L126.45 35.66 L126.72 35.74 L126.98 35.81 L127.24 35.88Z" fill="#d4e5ea"/><path d="M129.85 81.27 L130.00 81.17 L130.15 81.07 L130.28 80.97 L130.41 80.87 L127.33 82.29 L127.23 82.37 L127.13 82.45 L127.02 82.52 L126.90 82.60Z" fill="#4a90d5"/><path d="M135.85 41.75 L135.64 41.53 L135.40 41.32 L135.14 41.11 L134.84 40.90 L136.89 43.50 L137.22 43.73 L137.51 43.97 L137.78 44.21 L138.01 44.45Z" fill="#d4e5ea"/><path d="M110.79 83.81 L110.86 83.83 L110.92 83.84 L110.99 83.86 L111.05 83.88 L113.45 84.14 L113.41 84.13 L113.37 84.12 L113.33 84.11 L113.29 84.10Z" fill="#a9c9d6"/><path d="M93.42 50.54 L93.20 50.84 L93.02 51.15 L92.88 51.46 L92.80 51.77 L92.00 55.24 L92.09 54.92 L92.23 54.60 L92.42 54.29 L92.65 53.98Z" fill="#4a90d5"/><path d="M122.95 83.98 L123.02 83.96 L123.09 83.94 L123.16 83.93 L123.23 83.91 L120.88 84.16 L120.84 84.17 L120.80 84.18 L120.76 84.19 L120.71 84.20Z" fill="#d4e5ea"/><path d="M138.19 73.59 L138.37 73.35 L138.52 73.10 L138.63 72.85 L138.70 72.60 L136.49 75.43 L136.42 75.65 L136.32 75.87 L136.19 76.10 L136.03 76.32Z" fill="#d4e5ea"/><path d="M93.25 67.57 L93.28 67.87 L93.36 68.16 L93.47 68.46 L93.63 68.75 L95.14 71.93 L94.99 71.65 L94.89 71.38 L94.82 71.10 L94.79 70.83Z" fill="#4a90d5"/><path d="M112.55 84.20 L112.63 84.21 L112.71 84.23 L112.79 84.24 L112.86 84.25 L114.55 84.37 L114.50 84.36 L114.46 84.35 L114.41 84.35 L114.36 84.34Z" fill="#4a90d5"/><path d="M121.08 84.32 L121.16 84.31 L121.24 84.30 L121.32 84.28 L121.40 84.27 L119.76 84.38 L119.71 84.39 L119.66 84.40 L119.62 84.40 L119.57 84.41Z" fill="#4a90d5"/><path d="M141.65 52.17 L141.62 51.86 L141.54 51.55 L141.42 51.24 L141.25 50.93 L142.04 54.38 L142.21 54.70 L142.34 55.01 L142.41 55.33 L142.44 55.65Z" fill="#4a90d5"/><path d="M103.49 37.64 L103.25 37.79 L103.04 37.93 L102.84 38.08 L102.67 38.23 L99.99 40.31 L100.21 40.14 L100.44 39.96 L100.69 39.79 L100.96 39.63Z" fill="#4a90d5"/><path d="M108.94 35.01 L108.77 35.07 L108.60 35.14 L108.44 35.21 L108.29 35.27 L105.55 36.48 L105.75 36.39 L105.96 36.30 L106.18 36.22 L106.41 36.13Z" fill="#a9c9d6"/><path d="M99.64 77.61 L99.82 77.79 L100.02 77.97 L100.24 78.15 L100.48 78.32 L103.06 80.36 L102.86 80.21 L102.67 80.06 L102.50 79.91 L102.35 79.76Z" fill="#4a90d5"/><path d="M114.58 84.46 L114.67 84.47 L114.75 84.47 L114.84 84.48 L114.93 84.49 L115.81 84.51 L115.76 84.51 L115.71 84.50 L115.65 84.50 L115.60 84.49Z" fill="#4a90d5"/><path d="M118.97 84.52 L119.06 84.51 L119.15 84.51 L119.23 84.50 L119.32 84.50 L118.49 84.52 L118.44 84.52 L118.39 84.53 L118.34 84.53 L118.28 84.53Z" fill="#4a90d5"/><path d="M95.44 45.91 L95.24 46.18 L95.08 46.45 L94.96 46.73 L94.88 47.00 L93.33 50.22 L93.42 49.93 L93.55 49.64 L93.72 49.35 L93.93 49.06Z" fill="#a9c9d6"/><path d="M105.07 81.56 L105.26 81.66 L105.46 81.75 L105.66 81.84 L105.88 81.92 L108.52 83.10 L108.35 83.03 L108.20 82.96 L108.05 82.89 L107.90 82.82Z" fill="#4a90d5"/><path d="M116.77 84.57 L116.85 84.57 L116.94 84.57 L117.03 84.57 L117.12 84.57 L117.15 84.56 L117.10 84.56 L117.04 84.56 L116.99 84.56 L116.93 84.56Z" fill="#a9c9d6"/><path d="M126.42 35.42 L126.28 35.35 L126.13 35.28 L125.98 35.21 L125.82 35.15 L128.46 36.31 L128.67 36.40 L128.88 36.49 L129.07 36.58 L129.26 36.67Z" fill="#d4e5ea"/><path d="M117.46 33.72 L117.41 33.71 L117.35 33.71 L117.30 33.71 L117.25 33.71 L117.28 33.69 L117.36 33.69 L117.45 33.69 L117.54 33.70 L117.63 33.70Z" fill="#d4e5ea"/><path d="M140.50 69.13 L140.71 68.84 L140.88 68.55 L141.01 68.26 L141.10 67.96 L139.56 71.19 L139.48 71.47 L139.36 71.74 L139.20 72.01 L139.00 72.28Z" fill="#d4e5ea"/><path d="M116.13 33.74 L116.08 33.75 L116.03 33.75 L115.98 33.75 L115.92 33.76 L115.10 33.77 L115.18 33.76 L115.27 33.75 L115.36 33.75 L115.44 33.74Z" fill="#d4e5ea"/><path d="M131.98 38.46 L131.83 38.31 L131.66 38.16 L131.47 38.02 L131.27 37.87 L133.86 39.89 L134.10 40.07 L134.32 40.24 L134.52 40.42 L134.70 40.60Z" fill="#d4e5ea"/><path d="M118.77 33.78 L118.72 33.78 L118.67 33.77 L118.62 33.77 L118.57 33.76 L119.45 33.78 L119.54 33.78 L119.62 33.79 L119.71 33.80 L119.79 33.80Z" fill="#d4e5ea"/><path d="M128.04 82.11 L128.27 82.02 L128.49 81.93 L128.71 81.85 L128.91 81.76 L126.18 82.97 L126.03 83.04 L125.86 83.11 L125.69 83.17 L125.52 83.24Z" fill="#a9c9d6"/><path d="M133.49 78.59 L133.76 78.42 L134.02 78.25 L134.25 78.08 L134.46 77.90 L131.80 80.00 L131.62 80.15 L131.42 80.30 L131.21 80.44 L130.97 80.58Z" fill="#a9c9d6"/><path d="M91.94 62.53 L91.97 62.85 L92.05 63.17 L92.18 63.49 L92.35 63.81 L93.12 67.26 L92.95 66.95 L92.83 66.64 L92.75 66.33 L92.72 66.02Z" fill="#a9c9d6"/><path d="M114.87 33.86 L114.82 33.87 L114.77 33.88 L114.72 33.88 L114.68 33.89 L113.04 33.99 L113.12 33.98 L113.20 33.96 L113.28 33.95 L113.36 33.94Z" fill="#d4e5ea"/><path d="M119.99 33.94 L119.95 33.93 L119.90 33.92 L119.85 33.91 L119.81 33.90 L121.50 34.01 L121.57 34.02 L121.65 34.03 L121.73 34.05 L121.80 34.06Z" fill="#d4e5ea"/><path d="M139.57 47.37 L139.54 47.09 L139.47 46.82 L139.36 46.54 L139.22 46.27 L140.74 49.44 L140.90 49.73 L141.01 50.03 L141.08 50.32 L141.11 50.61Z" fill="#e3bb5e"/><path d="M98.42 41.89 L98.27 42.11 L98.14 42.33 L98.04 42.56 L97.97 42.78 L95.74 45.60 L95.82 45.35 L95.93 45.10 L96.07 44.85 L96.25 44.61Z" fill="#4a90d5"/><path d="M113.74 34.07 L113.70 34.08 L113.66 34.09 L113.62 34.10 L113.57 34.11 L111.23 34.35 L111.29 34.33 L111.36 34.31 L111.43 34.30 L111.50 34.28Z" fill="#d4e5ea"/><path d="M141.76 64.21 L141.99 63.90 L142.18 63.58 L142.32 63.26 L142.41 62.94 L141.63 66.42 L141.54 66.73 L141.40 67.04 L141.22 67.35 L141.00 67.65Z" fill="#4a90d5"/><path d="M96.34 73.75 L96.57 74.00 L96.84 74.23 L97.14 74.47 L97.47 74.70 L99.50 77.31 L99.21 77.10 L98.94 76.89 L98.70 76.68 L98.49 76.46Z" fill="#e3bb5e"/><path d="M121.05 34.17 L121.01 34.16 L120.97 34.15 L120.93 34.14 L120.89 34.13 L123.29 34.38 L123.35 34.40 L123.42 34.41 L123.48 34.43 L123.55 34.45Z" fill="#d4e5ea"/><path d="M107.57 35.65 L107.45 35.72 L107.35 35.79 L107.24 35.87 L107.15 35.95 L104.06 37.36 L104.19 37.26 L104.32 37.16 L104.46 37.06 L104.62 36.96Z" fill="#4a90d5"/><path d="M107.10 82.35 L107.36 82.43 L107.63 82.50 L107.90 82.58 L108.18 82.65 L110.28 83.65 L110.07 83.60 L109.86 83.54 L109.65 83.49 L109.46 83.43Z" fill="#4a90d5"/><path d="M91.77 57.35 L91.80 57.67 L91.88 58.00 L92.01 58.32 L92.18 58.64 L92.18 62.21 L92.00 61.89 L91.87 61.57 L91.79 61.24 L91.76 60.92Z" fill="#a9c9d6"/><path d="M125.61 82.79 L125.90 82.72 L126.19 82.65 L126.47 82.58 L126.74 82.51 L124.51 83.55 L124.31 83.61 L124.09 83.66 L123.87 83.71 L123.65 83.76Z" fill="#4a90d5"/><path d="M136.47 43.09 L136.45 42.87 L136.39 42.65 L136.30 42.42 L136.19 42.20 L138.39 44.95 L138.52 45.20 L138.61 45.45 L138.68 45.70 L138.70 45.95Z" fill="#a9c9d6"/><path d="M127.43 36.11 L127.35 36.03 L127.26 35.96 L127.17 35.88 L127.07 35.80 L130.10 37.17 L130.23 37.27 L130.35 37.37 L130.47 37.47 L130.57 37.57Z" fill="#d4e5ea"/><path d="M112.81 34.35 L112.78 34.36 L112.75 34.37 L112.71 34.39 L112.68 34.40 L109.76 34.82 L109.81 34.80 L109.86 34.78 L109.91 34.76 L109.96 34.74Z" fill="#a9c9d6"/><path d="M136.42 75.02 L136.79 74.79 L137.13 74.56 L137.44 74.33 L137.72 74.09 L135.60 76.77 L135.36 76.98 L135.08 77.19 L134.77 77.39 L134.44 77.60Z" fill="#4a90d5"/><path d="M101.29 78.80 L101.61 78.97 L101.95 79.12 L102.31 79.28 L102.68 79.43 L104.92 81.29 L104.60 81.17 L104.30 81.03 L104.01 80.90 L103.74 80.76Z" fill="#a9c9d6"/><path d="M102.25 38.66 L102.15 38.81 L102.06 38.97 L101.99 39.13 L101.94 39.28 L99.13 41.57 L99.19 41.38 L99.27 41.20 L99.38 41.01 L99.51 40.83Z" fill="#a9c9d6"/><path d="M121.88 34.47 L121.86 34.46 L121.83 34.45 L121.80 34.43 L121.77 34.42 L124.73 34.86 L124.78 34.88 L124.83 34.90 L124.87 34.93 L124.92 34.95Z" fill="#d4e5ea"/><path d="M141.92 59.05 L142.16 58.73 L142.35 58.41 L142.49 58.08 L142.58 57.76 L142.59 61.33 L142.49 61.66 L142.35 61.98 L142.16 62.30 L141.93 62.62Z" fill="#4a90d5"/><path d="M92.75 52.25 L92.78 52.56 L92.85 52.87 L92.98 53.18 L93.14 53.49 L92.36 57.02 L92.19 56.70 L92.06 56.38 L91.98 56.06 L91.95 55.74Z" fill="#a9c9d6"/><path d="M109.72 82.98 L110.03 83.03 L110.35 83.09 L110.67 83.14 L111.00 83.19 L112.45 84.07 L112.19 84.03 L111.95 83.99 L111.70 83.95 L111.46 83.91Z" fill="#a9c9d6"/><path d="M131.08 79.66 L131.48 79.52 L131.87 79.37 L132.24 79.22 L132.59 79.06 L130.22 80.98 L129.92 81.11 L129.61 81.24 L129.28 81.37 L128.94 81.49Z" fill="#4a90d5"/><path d="M132.51 39.53 L132.48 39.38 L132.44 39.22 L132.38 39.06 L132.31 38.91 L135.08 41.12 L135.18 41.30 L135.25 41.49 L135.29 41.68 L135.32 41.86Z" fill="#a9c9d6"/><path d="M122.69 83.28 L123.02 83.24 L123.36 83.19 L123.69 83.14 L124.01 83.09 L122.42 84.00 L122.17 84.04 L121.92 84.07 L121.67 84.11 L121.41 84.14Z" fill="#4a90d5"/><path d="M94.00 69.25 L94.27 69.53 L94.58 69.81 L94.93 70.09 L95.32 70.36 L96.73 73.44 L96.36 73.18 L96.03 72.92 L95.74 72.66 L95.49 72.39Z" fill="#e3bb5e"/><path d="M112.14 34.68 L112.12 34.70 L112.10 34.71 L112.07 34.73 L112.06 34.74 L108.72 35.39 L108.75 35.36 L108.79 35.34 L108.82 35.32 L108.86 35.29Z" fill="#4a90d5"/><path d="M106.76 36.36 L106.71 36.44 L106.66 36.52 L106.62 36.60 L106.59 36.68 L103.34 38.31 L103.38 38.21 L103.43 38.10 L103.49 38.00 L103.55 37.89Z" fill="#a9c9d6"/><path d="M117.27 34.34 L117.26 34.34 L117.24 34.34 L117.23 34.34 L117.21 34.34 L117.23 33.90 L117.27 33.90 L117.31 33.90 L117.34 33.90 L117.38 33.90Z" fill="#4a90d5"/><path d="M122.45 34.83 L122.43 34.81 L122.41 34.80 L122.39 34.78 L122.38 34.77 L125.73 35.43 L125.76 35.46 L125.79 35.48 L125.82 35.50 L125.85 35.53Z" fill="#d4e5ea"/><path d="M116.90 34.35 L116.88 34.35 L116.87 34.35 L116.85 34.35 L116.84 34.35 L116.31 33.93 L116.34 33.93 L116.38 33.93 L116.42 33.93 L116.45 33.92Z" fill="#a9c9d6"/><path d="M117.64 34.36 L117.63 34.36 L117.61 34.36 L117.60 34.35 L117.58 34.35 L118.15 33.94 L118.19 33.94 L118.23 33.94 L118.26 33.95 L118.30 33.95Z" fill="#a9c9d6"/><path d="M112.77 83.40 L113.12 83.43 L113.47 83.46 L113.83 83.49 L114.19 83.51 L114.89 84.32 L114.61 84.30 L114.34 84.28 L114.07 84.26 L113.80 84.23Z" fill="#4a90d5"/><path d="M119.44 83.56 L119.81 83.54 L120.17 83.52 L120.53 83.49 L120.88 83.47 L120.03 84.28 L119.75 84.30 L119.48 84.32 L119.20 84.34 L118.92 84.35Z" fill="#a9c9d6"/><path d="M116.54 34.38 L116.53 34.38 L116.51 34.39 L116.50 34.39 L116.49 34.39 L115.44 34.03 L115.47 34.02 L115.50 34.02 L115.54 34.01 L115.57 34.01Z" fill="#4a90d5"/><path d="M140.97 53.88 L141.20 53.57 L141.38 53.27 L141.51 52.96 L141.60 52.65 L142.40 56.15 L142.30 56.47 L142.17 56.79 L141.98 57.11 L141.75 57.42Z" fill="#a9c9d6"/><path d="M94.83 47.48 L94.86 47.76 L94.93 48.03 L95.04 48.30 L95.18 48.58 L93.66 51.91 L93.50 51.62 L93.39 51.32 L93.31 51.03 L93.28 50.73Z" fill="#a9c9d6"/><path d="M117.99 34.40 L117.97 34.40 L117.96 34.40 L117.95 34.40 L117.93 34.39 L119.02 34.04 L119.05 34.04 L119.09 34.05 L119.12 34.05 L119.15 34.06Z" fill="#4a90d5"/><path d="M116.07 83.60 L116.44 83.60 L116.81 83.61 L117.18 83.61 L117.54 83.61 L117.46 84.39 L117.18 84.39 L116.90 84.39 L116.62 84.39 L116.33 84.38Z" fill="#4a90d5"/><path d="M138.50 70.72 L138.94 70.45 L139.34 70.18 L139.71 69.90 L140.03 69.62 L138.57 72.74 L138.26 73.01 L137.92 73.26 L137.54 73.52 L137.13 73.77Z" fill="#a9c9d6"/><path d="M116.22 34.44 L116.21 34.44 L116.20 34.45 L116.19 34.45 L116.18 34.45 L114.67 34.18 L114.69 34.17 L114.72 34.16 L114.75 34.16 L114.78 34.15Z" fill="#a9c9d6"/><path d="M127.85 36.85 L127.83 36.77 L127.81 36.69 L127.78 36.61 L127.74 36.53 L130.98 38.12 L131.03 38.22 L131.06 38.33 L131.09 38.43 L131.11 38.54Z" fill="#d4e5ea"/><path d="M118.29 34.47 L118.27 34.47 L118.26 34.46 L118.25 34.46 L118.24 34.46 L119.78 34.19 L119.81 34.20 L119.84 34.21 L119.86 34.21 L119.89 34.22Z" fill="#a9c9d6"/><path d="M115.96 34.52 L115.95 34.52 L115.94 34.53 L115.93 34.53 L115.93 34.53 L114.04 34.38 L114.07 34.37 L114.09 34.36 L114.11 34.35 L114.13 34.35Z" fill="#4a90d5"/><path d="M118.52 34.55 L118.51 34.55 L118.50 34.55 L118.50 34.54 L118.49 34.54 L120.39 34.40 L120.41 34.41 L120.43 34.41 L120.45 34.42 L120.47 34.43Z" fill="#4a90d5"/><path d="M111.76 35.06 L111.75 35.07 L111.74 35.09 L111.73 35.10 L111.73 35.12 L108.18 36.01 L108.19 35.98 L108.20 35.96 L108.22 35.93 L108.23 35.91Z" fill="#a9c9d6"/><path d="M103.86 79.84 L104.30 79.98 L104.76 80.11 L105.24 80.23 L105.73 80.35 L107.50 82.07 L107.08 81.97 L106.68 81.87 L106.29 81.76 L105.92 81.64Z" fill="#4a90d5"/><path d="M98.25 75.17 L98.67 75.39 L99.13 75.60 L99.61 75.81 L100.12 76.01 L101.88 78.48 L101.42 78.30 L100.99 78.12 L100.58 77.93 L100.20 77.73Z" fill="#e3bb5e"/><path d="M92.71 64.30 L93.00 64.61 L93.34 64.91 L93.72 65.21 L94.15 65.51 L94.87 68.91 L94.45 68.62 L94.08 68.33 L93.75 68.03 L93.47 67.73Z" fill="#d5e6eb"/><path d="M97.93 43.24 L97.95 43.47 L98.01 43.69 L98.09 43.91 L98.21 44.13 L96.01 47.11 L95.88 46.86 L95.79 46.62 L95.72 46.37 L95.69 46.12Z" fill="#a9c9d6"/><path d="M138.96 48.93 L139.16 48.67 L139.32 48.39 L139.44 48.12 L139.52 47.84 L141.07 51.12 L140.98 51.42 L140.85 51.71 L140.68 52.00 L140.47 52.29Z" fill="#4a90d5"/><path d="M115.77 34.61 L115.77 34.62 L115.76 34.62 L115.75 34.63 L115.75 34.63 L113.60 34.62 L113.62 34.61 L113.63 34.60 L113.65 34.59 L113.66 34.58Z" fill="#a9c9d6"/><path d="M122.70 35.21 L122.70 35.19 L122.69 35.18 L122.69 35.16 L122.68 35.15 L126.24 36.06 L126.25 36.08 L126.26 36.11 L126.26 36.13 L126.27 36.16Z" fill="#4a90d5"/><path d="M118.68 34.65 L118.67 34.65 L118.67 34.64 L118.66 34.64 L118.66 34.64 L120.82 34.64 L120.83 34.65 L120.84 34.66 L120.85 34.67 L120.87 34.68Z" fill="#a9c9d6"/><path d="M127.86 80.53 L128.38 80.42 L128.87 80.30 L129.36 80.18 L129.83 80.05 L127.88 81.82 L127.48 81.93 L127.07 82.03 L126.65 82.13 L126.22 82.23Z" fill="#d5e6eb"/><path d="M115.66 34.72 L115.66 34.72 L115.66 34.73 L115.66 34.73 L115.66 34.74 L113.37 34.88 L113.38 34.87 L113.38 34.86 L113.39 34.85 L113.40 34.84Z" fill="#4a90d5"/><path d="M101.89 39.73 L101.91 39.89 L101.95 40.05 L102.01 40.21 L102.09 40.36 L99.31 42.84 L99.22 42.66 L99.15 42.47 L99.10 42.29 L99.08 42.10Z" fill="#e3bb5e"/><path d="M133.52 76.28 L134.07 76.09 L134.59 75.89 L135.08 75.68 L135.55 75.47 L133.65 78.00 L133.24 78.19 L132.80 78.38 L132.33 78.55 L131.84 78.73Z" fill="#a9c9d6"/><path d="M118.75 34.76 L118.75 34.76 L118.75 34.75 L118.75 34.75 L118.75 34.74 L121.03 34.90 L121.04 34.91 L121.04 34.92 L121.04 34.94 L121.05 34.95Z" fill="#4a90d5"/><path d="M135.97 44.44 L136.13 44.22 L136.26 44.00 L136.36 43.78 L136.43 43.56 L138.65 46.47 L138.58 46.72 L138.47 46.96 L138.32 47.21 L138.15 47.45Z" fill="#4a90d5"/><path d="M139.63 65.88 L140.12 65.59 L140.56 65.30 L140.95 65.00 L141.30 64.69 L140.56 68.12 L140.22 68.41 L139.83 68.70 L139.41 68.99 L138.94 69.27Z" fill="#a9c9d6"/><path d="M106.55 37.11 L106.57 37.19 L106.59 37.27 L106.62 37.35 L106.66 37.43 L103.42 39.29 L103.37 39.19 L103.33 39.08 L103.30 38.98 L103.28 38.87Z" fill="#4a90d5"/><path d="M115.65 34.83 L115.65 34.83 L115.65 34.84 L115.65 34.84 L115.65 34.85 L113.37 35.16 L113.36 35.14 L113.36 35.13 L113.36 35.12 L113.35 35.11Z" fill="#a9c9d6"/><path d="M111.69 35.45 L111.70 35.46 L111.70 35.48 L111.71 35.49 L111.71 35.51 L108.16 36.65 L108.15 36.63 L108.14 36.60 L108.13 36.57 L108.13 36.55Z" fill="#4a90d5"/><path d="M118.73 34.87 L118.74 34.87 L118.74 34.86 L118.74 34.86 L118.74 34.85 L121.02 35.17 L121.02 35.19 L121.01 35.20 L121.01 35.21 L121.00 35.22Z" fill="#a9c9d6"/><path d="M132.14 40.61 L132.25 40.45 L132.34 40.30 L132.41 40.14 L132.46 39.98 L135.27 42.40 L135.21 42.58 L135.12 42.77 L135.02 42.95 L134.89 43.13Z" fill="#4a90d5"/><path d="M92.54 59.12 L92.84 59.44 L93.18 59.75 L93.57 60.05 L94.00 60.35 L94.00 63.93 L93.56 63.63 L93.17 63.32 L92.83 63.01 L92.54 62.70Z" fill="#4a90d5"/><path d="M122.64 35.60 L122.65 35.58 L122.66 35.57 L122.66 35.55 L122.67 35.54 L126.22 36.70 L126.21 36.72 L126.20 36.75 L126.18 36.77 L126.17 36.80Z" fill="#a9c9d6"/><path d="M115.72 34.94 L115.72 34.94 L115.73 34.94 L115.73 34.95 L115.74 34.95 L113.58 35.42 L113.57 35.41 L113.56 35.40 L113.54 35.39 L113.53 35.38Z" fill="#4a90d5"/><path d="M127.64 37.60 L127.69 37.52 L127.74 37.44 L127.77 37.36 L127.80 37.28 L131.06 39.10 L131.02 39.20 L130.97 39.31 L130.91 39.41 L130.84 39.52Z" fill="#a9c9d6"/><path d="M118.63 34.98 L118.63 34.97 L118.64 34.97 L118.64 34.96 L118.65 34.96 L120.79 35.44 L120.78 35.45 L120.77 35.46 L120.75 35.47 L120.74 35.48Z" fill="#4a90d5"/><path d="M107.20 80.67 L107.75 80.77 L108.30 80.86 L108.87 80.95 L109.44 81.04 L110.64 82.65 L110.15 82.58 L109.67 82.51 L109.20 82.43 L108.75 82.34Z" fill="#4a90d5"/><path d="M115.88 35.03 L115.89 35.04 L115.89 35.04 L115.90 35.05 L115.91 35.05 L114.01 35.66 L113.99 35.65 L113.96 35.64 L113.94 35.63 L113.92 35.63Z" fill="#a9c9d6"/><path d="M124.03 81.16 L124.62 81.08 L125.20 81.00 L125.77 80.92 L126.33 80.83 L124.92 82.47 L124.45 82.55 L123.96 82.62 L123.47 82.69 L122.97 82.75Z" fill="#d5e6eb"/><path d="M118.44 35.07 L118.45 35.07 L118.45 35.06 L118.46 35.06 L118.47 35.06 L120.35 35.68 L120.33 35.69 L120.31 35.70 L120.29 35.70 L120.27 35.71Z" fill="#a9c9d6"/><path d="M96.09 70.82 L96.59 71.08 L97.12 71.33 L97.69 71.57 L98.29 71.81 L99.50 74.79 L98.94 74.57 L98.41 74.34 L97.91 74.11 L97.44 73.86Z" fill="#d5e6eb"/><path d="M139.78 60.73 L140.27 60.43 L140.71 60.14 L141.12 59.83 L141.47 59.52 L141.48 63.10 L141.12 63.40 L140.72 63.71 L140.27 64.01 L139.78 64.30Z" fill="#a9c9d6"/><path d="M116.11 35.12 L116.12 35.12 L116.13 35.13 L116.15 35.13 L116.16 35.13 L114.62 35.87 L114.59 35.86 L114.56 35.85 L114.53 35.84 L114.51 35.84Z" fill="#4a90d5"/><path d="M118.18 35.15 L118.19 35.15 L118.20 35.14 L118.21 35.14 L118.22 35.14 L119.73 35.88 L119.70 35.89 L119.68 35.89 L119.65 35.90 L119.62 35.91Z" fill="#4a90d5"/><path d="M93.50 53.96 L93.78 54.26 L94.10 54.56 L94.48 54.85 L94.89 55.13 L94.16 58.72 L93.74 58.42 L93.35 58.12 L93.02 57.82 L92.72 57.51Z" fill="#e3bb5e"/><path d="M111.95 35.83 L111.97 35.84 L111.99 35.86 L112.00 35.87 L112.02 35.89 L108.67 37.28 L108.64 37.25 L108.61 37.23 L108.58 37.20 L108.55 37.18Z" fill="#4a90d5"/><path d="M116.41 35.19 L116.42 35.19 L116.44 35.19 L116.45 35.19 L116.46 35.20 L115.38 36.02 L115.34 36.02 L115.31 36.01 L115.28 36.01 L115.25 36.00Z" fill="#a9c9d6"/><path d="M117.86 35.21 L117.87 35.20 L117.88 35.20 L117.90 35.20 L117.91 35.20 L118.96 36.03 L118.93 36.04 L118.90 36.04 L118.86 36.05 L118.83 36.05Z" fill="#a9c9d6"/><path d="M122.26 35.97 L122.28 35.96 L122.30 35.94 L122.32 35.93 L122.34 35.91 L125.68 37.32 L125.64 37.34 L125.61 37.37 L125.58 37.39 L125.54 37.41Z" fill="#4a90d5"/><path d="M101.26 76.41 L101.85 76.59 L102.46 76.76 L103.10 76.93 L103.76 77.09 L105.14 79.46 L104.55 79.31 L103.98 79.16 L103.43 79.00 L102.90 78.84Z" fill="#a9c9d6"/><path d="M116.76 35.23 L116.77 35.23 L116.78 35.23 L116.80 35.23 L116.81 35.24 L116.24 36.12 L116.21 36.12 L116.17 36.12 L116.14 36.11 L116.10 36.11Z" fill="#4a90d5"/><path d="M111.13 81.24 L111.74 81.30 L112.35 81.35 L112.98 81.40 L113.60 81.44 L114.16 82.99 L113.63 82.96 L113.10 82.92 L112.58 82.87 L112.07 82.82Z" fill="#4a90d5"/><path d="M117.50 35.24 L117.51 35.24 L117.53 35.24 L117.54 35.24 L117.56 35.24 L118.09 36.13 L118.05 36.13 L118.02 36.13 L117.98 36.13 L117.94 36.14Z" fill="#4a90d5"/><path d="M117.13 35.25 L117.14 35.25 L117.16 35.25 L117.17 35.25 L117.19 35.25 L117.17 36.16 L117.13 36.16 L117.09 36.16 L117.05 36.16 L117.02 36.16Z" fill="#a9c9d6"/><path d="M135.26 72.11 L135.90 71.89 L136.52 71.65 L137.10 71.41 L137.64 71.16 L136.33 74.18 L135.82 74.41 L135.28 74.64 L134.70 74.86 L134.10 75.07Z" fill="#4a90d5"/><path d="M119.79 81.49 L120.43 81.46 L121.06 81.42 L121.68 81.38 L122.30 81.33 L121.51 82.90 L120.99 82.94 L120.46 82.98 L119.93 83.01 L119.39 83.04Z" fill="#a9c9d6"/><path d="M95.53 49.04 L95.78 49.31 L96.07 49.57 L96.40 49.83 L96.77 50.08 L95.35 53.52 L94.96 53.25 L94.61 52.97 L94.30 52.69 L94.03 52.41Z" fill="#4a90d5"/><path d="M106.97 37.85 L107.05 37.93 L107.13 38.00 L107.23 38.08 L107.33 38.16 L104.30 40.24 L104.17 40.14 L104.05 40.04 L103.93 39.94 L103.82 39.84Z" fill="#4a90d5"/><path d="M115.41 81.52 L116.05 81.53 L116.69 81.54 L117.33 81.54 L117.97 81.54 L117.85 83.08 L117.31 83.08 L116.77 83.08 L116.23 83.07 L115.69 83.06Z" fill="#e3bb5e"/><path d="M129.68 77.30 L130.37 77.15 L131.04 77.00 L131.68 76.83 L132.31 76.66 L130.75 79.07 L130.19 79.22 L129.61 79.37 L129.01 79.51 L128.39 79.65Z" fill="#4a90d5"/><path d="M138.92 55.49 L139.38 55.21 L139.81 54.93 L140.19 54.64 L140.53 54.35 L141.29 57.90 L140.94 58.21 L140.54 58.51 L140.11 58.80 L139.62 59.09Z" fill="#e3bb5e"/><path d="M98.55 44.59 L98.76 44.81 L98.99 45.02 L99.26 45.23 L99.55 45.44 L97.51 48.56 L97.18 48.33 L96.88 48.10 L96.62 47.86 L96.39 47.62Z" fill="#e3bb5e"/><path d="M102.42 40.80 L102.57 40.95 L102.74 41.10 L102.92 41.25 L103.13 41.40 L100.54 44.07 L100.30 43.90 L100.08 43.72 L99.88 43.54 L99.70 43.37Z" fill="#d5e6eb"/><path d="M112.51 36.18 L112.54 36.19 L112.57 36.21 L112.60 36.22 L112.63 36.23 L109.67 37.85 L109.62 37.82 L109.57 37.80 L109.52 37.78 L109.48 37.76Z" fill="#4a90d5"/><path d="M126.83 38.31 L126.94 38.24 L127.05 38.17 L127.16 38.09 L127.25 38.01 L130.34 40.06 L130.21 40.16 L130.08 40.26 L129.93 40.35 L129.78 40.45Z" fill="#4a90d5"/><path d="M121.59 36.31 L121.62 36.29 L121.65 36.28 L121.68 36.27 L121.71 36.25 L124.64 37.88 L124.59 37.90 L124.54 37.92 L124.49 37.95 L124.43 37.97Z" fill="#a9c9d6"/><path d="M94.90 65.96 L95.44 66.24 L96.02 66.51 L96.64 66.78 L97.29 67.03 L97.91 70.38 L97.27 70.13 L96.68 69.88 L96.12 69.61 L95.60 69.34Z" fill="#e3bb5e"/><path d="M137.09 50.41 L137.51 50.17 L137.88 49.91 L138.22 49.66 L138.53 49.39 L140.00 52.78 L139.68 53.06 L139.32 53.34 L138.91 53.61 L138.47 53.87Z" fill="#4a90d5"/><path d="M130.91 41.62 L131.14 41.48 L131.36 41.34 L131.55 41.19 L131.73 41.04 L134.40 43.65 L134.19 43.82 L133.96 44.00 L133.71 44.17 L133.43 44.34Z" fill="#a9c9d6"/><path d="M134.38 45.72 L134.72 45.52 L135.02 45.31 L135.30 45.10 L135.55 44.89 L137.67 47.96 L137.40 48.19 L137.09 48.43 L136.75 48.65 L136.37 48.88Z" fill="#a9c9d6"/><path d="M113.35 36.48 L113.39 36.49 L113.43 36.50 L113.46 36.51 L113.50 36.53 L111.11 38.33 L111.04 38.31 L110.98 38.29 L110.91 38.28 L110.85 38.26Z" fill="#a9c9d6"/><path d="M120.66 36.58 L120.70 36.57 L120.74 36.56 L120.78 36.55 L120.82 36.54 L123.17 38.36 L123.11 38.38 L123.04 38.39 L122.97 38.41 L122.90 38.43Z" fill="#a9c9d6"/><path d="M136.20 67.35 L136.91 67.10 L137.58 66.85 L138.21 66.59 L138.80 66.32 L138.13 69.69 L137.55 69.95 L136.95 70.21 L136.30 70.45 L135.62 70.69Z" fill="#a9c9d6"/><path d="M105.19 77.40 L105.91 77.53 L106.65 77.66 L107.41 77.78 L108.18 77.89 L109.11 80.17 L108.42 80.07 L107.74 79.97 L107.08 79.85 L106.43 79.73Z" fill="#d5e6eb"/><path d="M107.97 38.54 L108.12 38.61 L108.26 38.68 L108.42 38.75 L108.58 38.81 L105.93 41.10 L105.72 41.01 L105.52 40.92 L105.33 40.83 L105.14 40.74Z" fill="#a9c9d6"/><path d="M99.41 72.20 L100.10 72.42 L100.82 72.62 L101.58 72.82 L102.36 73.01 L103.31 75.91 L102.58 75.74 L101.88 75.55 L101.20 75.36 L100.55 75.16Z" fill="#4a90d5"/><path d="M125.11 78.03 L125.90 77.93 L126.68 77.82 L127.44 77.71 L128.19 77.59 L127.05 79.90 L126.39 80.01 L125.70 80.11 L125.00 80.21 L124.29 80.29Z" fill="#4a90d5"/><path d="M114.41 36.72 L114.45 36.73 L114.50 36.73 L114.55 36.74 L114.59 36.75 L112.90 38.70 L112.83 38.69 L112.75 38.67 L112.67 38.66 L112.60 38.65Z" fill="#4a90d5"/><path d="M94.75 60.80 L95.29 61.08 L95.88 61.36 L96.50 61.63 L97.17 61.89 L97.17 65.46 L96.50 65.20 L95.87 64.93 L95.28 64.65 L94.74 64.37Z" fill="#4a90d5"/><path d="M119.53 36.79 L119.58 36.78 L119.63 36.78 L119.67 36.77 L119.72 36.76 L121.36 38.72 L121.28 38.73 L121.20 38.74 L121.12 38.75 L121.04 38.76Z" fill="#4a90d5"/><path d="M125.46 38.95 L125.63 38.89 L125.80 38.82 L125.96 38.75 L126.11 38.69 L128.85 40.94 L128.65 41.03 L128.43 41.11 L128.22 41.20 L127.99 41.28Z" fill="#4a90d5"/><path d="M115.63 36.87 L115.68 36.88 L115.73 36.88 L115.78 36.89 L115.83 36.89 L114.95 38.93 L114.86 38.92 L114.78 38.92 L114.69 38.91 L114.61 38.90Z" fill="#a9c9d6"/><path d="M130.97 73.24 L131.78 73.07 L132.57 72.88 L133.33 72.69 L134.07 72.48 L132.98 75.42 L132.30 75.61 L131.59 75.79 L130.85 75.97 L130.08 76.13Z" fill="#4a90d5"/><path d="M118.27 36.91 L118.32 36.91 L118.37 36.90 L118.42 36.90 L118.47 36.90 L119.30 38.94 L119.21 38.95 L119.13 38.95 L119.04 38.96 L118.96 38.96Z" fill="#d5e6eb"/><path d="M116.94 36.94 L116.99 36.94 L117.04 36.94 L117.10 36.94 L117.15 36.94 L117.12 39.01 L117.03 39.01 L116.94 39.01 L116.86 39.01 L116.77 39.01Z" fill="#a9c9d6"/><path d="M103.81 41.80 L104.07 41.94 L104.36 42.07 L104.66 42.20 L104.98 42.33 L102.73 45.17 L102.36 45.02 L102.00 44.87 L101.66 44.71 L101.34 44.55Z" fill="#e3bb5e"/><path d="M136.32 62.21 L137.04 61.96 L137.71 61.70 L138.35 61.43 L138.95 61.16 L138.96 64.73 L138.36 65.00 L137.72 65.27 L137.04 65.53 L136.33 65.78Z" fill="#a9c9d6"/><path d="M109.82 78.09 L110.64 78.17 L111.46 78.24 L112.29 78.30 L113.13 78.35 L113.55 80.59 L112.80 80.54 L112.05 80.48 L111.31 80.42 L110.59 80.35Z" fill="#4a90d5"/><path d="M95.62 55.57 L96.14 55.84 L96.70 56.10 L97.30 56.36 L97.93 56.61 L97.30 60.24 L96.65 59.99 L96.03 59.72 L95.45 59.45 L94.92 59.17Z" fill="#4a90d5"/><path d="M120.08 78.41 L120.93 78.37 L121.77 78.32 L122.61 78.27 L123.43 78.20 L122.79 80.45 L122.05 80.51 L121.30 80.56 L120.54 80.60 L119.78 80.64Z" fill="#a9c9d6"/><path d="M128.88 42.53 L129.23 42.40 L129.55 42.28 L129.86 42.15 L130.16 42.02 L132.54 44.80 L132.19 44.96 L131.82 45.11 L131.44 45.26 L131.03 45.41Z" fill="#e3bb5e"/><path d="M100.25 45.85 L100.63 46.05 L101.04 46.24 L101.47 46.42 L101.92 46.60 L100.15 49.87 L99.64 49.66 L99.17 49.46 L98.71 49.25 L98.29 49.03Z" fill="#d5e6eb"/><path d="M109.52 39.14 L109.71 39.20 L109.91 39.25 L110.12 39.31 L110.33 39.36 L108.22 41.82 L107.95 41.75 L107.68 41.68 L107.42 41.60 L107.16 41.53Z" fill="#e3bb5e"/><path d="M114.89 78.43 L115.74 78.45 L116.60 78.46 L117.45 78.47 L118.31 78.46 L118.20 80.68 L117.43 80.69 L116.66 80.69 L115.89 80.68 L115.12 80.66Z" fill="#e3bb5e"/><path d="M97.48 50.51 L97.95 50.75 L98.44 50.99 L98.97 51.22 L99.54 51.44 L98.31 54.96 L97.71 54.73 L97.14 54.48 L96.61 54.23 L96.12 53.98Z" fill="#4a90d5"/><path d="M123.60 39.47 L123.82 39.42 L124.04 39.37 L124.25 39.32 L124.46 39.26 L126.68 41.69 L126.41 41.76 L126.14 41.83 L125.86 41.90 L125.57 41.96Z" fill="#4a90d5"/><path d="M135.60 56.92 L136.28 56.68 L136.93 56.43 L137.53 56.18 L138.10 55.92 L138.78 59.53 L138.20 59.80 L137.57 60.06 L136.90 60.31 L136.20 60.56Z" fill="#4a90d5"/><path d="M98.39 67.42 L99.14 67.65 L99.93 67.87 L100.75 68.09 L101.59 68.29 L102.08 71.61 L101.26 71.41 L100.46 71.20 L99.70 70.98 L98.98 70.76Z" fill="#a9c9d6"/><path d="M131.80 46.85 L132.28 46.68 L132.75 46.50 L133.19 46.31 L133.60 46.13 L135.50 49.33 L135.04 49.54 L134.55 49.75 L134.03 49.95 L133.49 50.14Z" fill="#e3bb5e"/><path d="M134.07 51.72 L134.67 51.51 L135.24 51.29 L135.79 51.06 L136.29 50.83 L137.62 54.32 L137.07 54.56 L136.49 54.81 L135.88 55.04 L135.23 55.27Z" fill="#d5e6eb"/><path d="M103.76 73.31 L104.61 73.47 L105.48 73.62 L106.37 73.76 L107.29 73.89 L107.92 76.73 L107.07 76.61 L106.23 76.48 L105.42 76.34 L104.63 76.19Z" fill="#d5e6eb"/><path d="M131.67 68.54 L132.56 68.35 L133.41 68.15 L134.24 67.94 L135.03 67.72 L134.48 71.05 L133.71 71.26 L132.91 71.47 L132.08 71.66 L131.22 71.84Z" fill="#a9c9d6"/><path d="M111.51 39.61 L111.74 39.66 L111.99 39.70 L112.23 39.74 L112.48 39.77 L111.03 42.36 L110.70 42.31 L110.39 42.26 L110.07 42.20 L109.76 42.15Z" fill="#4a90d5"/><path d="M125.88 74.04 L126.81 73.93 L127.73 73.80 L128.63 73.67 L129.51 73.52 L128.72 76.39 L127.90 76.53 L127.06 76.65 L126.20 76.77 L125.32 76.88Z" fill="#a9c9d6"/><path d="M121.38 39.85 L121.63 39.81 L121.89 39.78 L122.13 39.74 L122.38 39.70 L123.97 42.26 L123.65 42.31 L123.32 42.36 L123.00 42.41 L122.66 42.45Z" fill="#a9c9d6"/><path d="M105.97 42.68 L106.34 42.79 L106.73 42.90 L107.13 43.01 L107.54 43.11 L105.77 46.09 L105.28 45.97 L104.81 45.85 L104.35 45.72 L103.91 45.58Z" fill="#4a90d5"/><path d="M98.25 62.27 L99.02 62.50 L99.81 62.73 L100.64 62.95 L101.50 63.16 L101.50 66.73 L100.64 66.52 L99.81 66.30 L99.01 66.08 L98.25 65.84Z" fill="#d5e6eb"/><path d="M113.83 39.94 L114.09 39.96 L114.36 39.98 L114.63 40.00 L114.90 40.02 L114.20 42.68 L113.84 42.66 L113.49 42.63 L113.14 42.60 L112.79 42.57Z" fill="#d5e6eb"/><path d="M126.18 43.26 L126.61 43.16 L127.03 43.07 L127.43 42.96 L127.83 42.86 L129.78 45.80 L129.32 45.92 L128.83 46.04 L128.34 46.16 L127.83 46.27Z" fill="#e3bb5e"/><path d="M118.91 40.05 L119.19 40.04 L119.46 40.02 L119.73 40.01 L120.00 39.99 L120.86 42.63 L120.51 42.66 L120.15 42.68 L119.80 42.71 L119.44 42.72Z" fill="#a9c9d6"/><path d="M116.35 40.09 L116.62 40.09 L116.90 40.09 L117.18 40.10 L117.46 40.09 L117.54 42.78 L117.17 42.78 L116.81 42.78 L116.45 42.77 L116.08 42.76Z" fill="#4a90d5"/><path d="M108.90 74.08 L109.85 74.18 L110.82 74.26 L111.80 74.34 L112.79 74.40 L113.07 77.21 L112.15 77.15 L111.23 77.09 L110.32 77.01 L109.43 76.92Z" fill="#4a90d5"/><path d="M120.29 74.46 L121.29 74.41 L122.28 74.36 L123.26 74.29 L124.23 74.21 L123.78 77.03 L122.87 77.11 L121.95 77.17 L121.02 77.23 L120.09 77.27Z" fill="#d5e6eb"/><path d="M131.75 63.40 L132.65 63.21 L133.52 63.01 L134.36 62.79 L135.17 62.57 L135.17 66.14 L134.37 66.37 L133.53 66.58 L132.66 66.78 L131.76 66.98Z" fill="#4a90d5"/><path d="M102.94 46.96 L103.47 47.12 L104.02 47.28 L104.59 47.43 L105.18 47.57 L103.79 50.95 L103.13 50.79 L102.49 50.62 L101.88 50.45 L101.29 50.26Z" fill="#a9c9d6"/><path d="M99.00 56.98 L99.72 57.21 L100.48 57.42 L101.27 57.63 L102.09 57.83 L101.60 61.50 L100.75 61.30 L99.94 61.08 L99.15 60.86 L98.40 60.63Z" fill="#e3bb5e"/><path d="M114.51 74.47 L115.52 74.50 L116.53 74.51 L117.54 74.52 L118.55 74.51 L118.46 77.31 L117.52 77.32 L116.57 77.32 L115.63 77.31 L114.69 77.28Z" fill="#a9c9d6"/><path d="M102.98 68.59 L103.90 68.76 L104.84 68.93 L105.81 69.08 L106.80 69.22 L107.12 72.50 L106.16 72.37 L105.22 72.22 L104.31 72.06 L103.42 71.89Z" fill="#d5e6eb"/><path d="M100.58 51.80 L101.23 52.00 L101.91 52.20 L102.61 52.38 L103.34 52.56 L102.38 56.16 L101.60 55.97 L100.85 55.78 L100.12 55.57 L99.43 55.36Z" fill="#4a90d5"/><path d="M128.36 47.76 L128.98 47.63 L129.57 47.49 L130.15 47.34 L130.71 47.19 L132.27 50.52 L131.65 50.69 L131.01 50.85 L130.34 51.01 L129.65 51.16Z" fill="#e3bb5e"/><path d="M108.79 43.37 L109.24 43.46 L109.71 43.54 L110.18 43.61 L110.67 43.68 L109.46 46.77 L108.89 46.69 L108.33 46.60 L107.78 46.51 L107.24 46.41Z" fill="#4a90d5"/><path d="M126.30 69.38 L127.31 69.25 L128.31 69.12 L129.28 68.97 L130.24 68.81 L129.83 72.11 L128.91 72.26 L127.96 72.41 L127.00 72.54 L126.01 72.65Z" fill="#a9c9d6"/><path d="M131.21 58.07 L132.07 57.88 L132.89 57.69 L133.69 57.49 L134.46 57.27 L135.02 60.93 L134.23 61.15 L133.41 61.36 L132.55 61.56 L131.66 61.75Z" fill="#4a90d5"/><path d="M122.95 43.78 L123.44 43.72 L123.93 43.65 L124.41 43.58 L124.88 43.51 L126.30 46.57 L125.74 46.66 L125.17 46.74 L124.59 46.82 L124.01 46.89Z" fill="#4a90d5"/><path d="M130.06 52.77 L130.82 52.61 L131.56 52.44 L132.27 52.26 L132.95 52.07 L134.04 55.64 L133.31 55.84 L132.55 56.04 L131.77 56.22 L130.95 56.39Z" fill="#e3bb5e"/><path d="M112.09 43.85 L112.60 43.90 L113.12 43.95 L113.64 43.99 L114.17 44.02 L113.61 47.18 L112.99 47.14 L112.37 47.09 L111.76 47.04 L111.15 46.98Z" fill="#4a90d5"/><path d="M102.86 63.45 L103.80 63.62 L104.76 63.79 L105.74 63.94 L106.75 64.08 L106.74 67.66 L105.74 67.52 L104.75 67.36 L103.79 67.20 L102.86 67.02Z" fill="#a9c9d6"/><path d="M119.39 44.06 L119.92 44.04 L120.45 44.01 L120.97 43.97 L121.49 43.93 L122.28 47.07 L121.66 47.12 L121.04 47.16 L120.42 47.20 L119.79 47.23Z" fill="#a9c9d6"/><path d="M108.38 69.41 L109.42 69.51 L110.47 69.60 L111.54 69.68 L112.61 69.75 L112.75 73.02 L111.71 72.95 L110.68 72.88 L109.66 72.79 L108.66 72.68Z" fill="#d5e6eb"/><path d="M106.46 47.85 L107.11 47.97 L107.77 48.08 L108.44 48.19 L109.13 48.29 L108.20 51.74 L107.43 51.63 L106.68 51.52 L105.94 51.39 L105.22 51.25Z" fill="#d5e6eb"/><path d="M115.70 44.09 L116.23 44.10 L116.77 44.11 L117.31 44.11 L117.85 44.11 L117.97 47.28 L117.33 47.28 L116.69 47.28 L116.06 47.27 L115.42 47.26Z" fill="#4a90d5"/><path d="M120.39 69.81 L121.48 69.76 L122.56 69.70 L123.62 69.63 L124.68 69.54 L124.45 72.81 L123.42 72.90 L122.39 72.97 L121.35 73.03 L120.29 73.08Z" fill="#d5e6eb"/><path d="M126.34 64.24 L127.37 64.12 L128.38 63.98 L129.37 63.83 L130.34 63.67 L130.34 67.24 L129.38 67.41 L128.39 67.56 L127.37 67.69 L126.34 67.82Z" fill="#4a90d5"/><path d="M124.28 48.41 L124.98 48.32 L125.68 48.23 L126.36 48.13 L127.02 48.02 L128.16 51.44 L127.42 51.56 L126.66 51.68 L125.88 51.78 L125.09 51.88Z" fill="#d5e6eb"/><path d="M114.30 69.82 L115.40 69.85 L116.49 69.87 L117.59 69.87 L118.69 69.86 L118.64 73.12 L117.58 73.13 L116.52 73.13 L115.45 73.12 L114.39 73.09Z" fill="#4a90d5"/><path d="M103.43 58.12 L104.32 58.29 L105.24 58.44 L106.17 58.59 L107.13 58.72 L106.80 62.43 L105.82 62.29 L104.85 62.14 L103.90 61.97 L102.98 61.80Z" fill="#d5e6eb"/><path d="M104.65 52.84 L105.44 52.99 L106.26 53.13 L107.09 53.26 L107.94 53.38 L107.30 57.04 L106.39 56.91 L105.50 56.77 L104.63 56.62 L103.78 56.46Z" fill="#a9c9d6"/><path d="M126.01 58.88 L126.99 58.76 L127.95 58.63 L128.90 58.49 L129.82 58.33 L130.23 62.02 L129.28 62.18 L128.30 62.33 L127.31 62.46 L126.29 62.58Z" fill="#d5e6eb"/><path d="M125.31 53.52 L126.18 53.41 L127.04 53.30 L127.88 53.17 L128.69 53.03 L129.49 56.67 L128.61 56.82 L127.72 56.95 L126.80 57.08 L125.87 57.19Z" fill="#e3bb5e"/><path d="M110.61 48.46 L111.33 48.54 L112.07 48.60 L112.81 48.66 L113.56 48.70 L113.13 52.21 L112.30 52.15 L111.47 52.09 L110.65 52.02 L109.84 51.94Z" fill="#a9c9d6"/><path d="M108.31 64.27 L109.36 64.38 L110.43 64.47 L111.51 64.55 L112.60 64.62 L112.60 68.19 L111.51 68.13 L110.42 68.05 L109.36 67.95 L108.30 67.84Z" fill="#d5e6eb"/><path d="M119.78 48.75 L120.54 48.72 L121.29 48.68 L122.03 48.62 L122.77 48.56 L123.41 52.05 L122.59 52.12 L121.76 52.18 L120.92 52.23 L120.08 52.26Z" fill="#e3bb5e"/><path d="M120.40 64.68 L121.50 64.63 L122.59 64.57 L123.68 64.50 L124.75 64.41 L124.75 67.98 L123.68 68.07 L122.59 68.15 L121.50 68.21 L120.40 68.26Z" fill="#a9c9d6"/><path d="M115.13 48.77 L115.90 48.79 L116.66 48.80 L117.43 48.80 L118.19 48.80 L118.31 52.31 L117.45 52.32 L116.60 52.32 L115.74 52.31 L114.89 52.28Z" fill="#4a90d5"/><path d="M114.27 64.69 L115.38 64.72 L116.49 64.74 L117.60 64.74 L118.72 64.73 L118.72 68.30 L117.60 68.31 L116.49 68.31 L115.38 68.30 L114.27 68.26Z" fill="#4a90d5"/><path d="M109.45 53.56 L110.34 53.65 L111.24 53.73 L112.16 53.80 L113.08 53.85 L112.79 57.55 L111.81 57.49 L110.83 57.41 L109.86 57.33 L108.91 57.23Z" fill="#d5e6eb"/><path d="M108.67 58.91 L109.67 59.01 L110.69 59.10 L111.72 59.18 L112.76 59.24 L112.61 62.96 L111.54 62.89 L110.48 62.81 L109.42 62.72 L108.39 62.62Z" fill="#a9c9d6"/><path d="M120.08 53.91 L121.02 53.87 L121.94 53.81 L122.86 53.75 L123.77 53.68 L124.22 57.36 L123.25 57.44 L122.27 57.51 L121.28 57.56 L120.28 57.61Z" fill="#d5e6eb"/><path d="M120.29 59.30 L121.34 59.25 L122.39 59.19 L123.42 59.12 L124.44 59.04 L124.67 62.75 L123.62 62.84 L122.55 62.91 L121.48 62.97 L120.39 63.02Z" fill="#4a90d5"/><path d="M114.69 53.92 L115.63 53.95 L116.57 53.96 L117.52 53.96 L118.46 53.95 L118.55 57.66 L117.54 57.67 L116.53 57.66 L115.52 57.65 L114.52 57.62Z" fill="#d5e6eb"/><path d="M114.40 59.31 L115.46 59.34 L116.52 59.35 L117.58 59.36 L118.64 59.34 L118.69 63.07 L117.59 63.08 L116.49 63.08 L115.40 63.06 L114.31 63.03Z" fill="#e3bb5e"/></g><path d="M89.6 35.4 Q89.82 37.38 91.8 37.6 Q89.82 37.82 89.6 39.800000000000004 Q89.38 37.82 87.39999999999999 37.6 Q89.38 37.38 89.6 35.4Z" fill="#4a7a6a"/><path d="M146.7 28.8 Q146.92 30.78 148.89999999999998 31.0 Q146.92 31.22 146.7 33.2 Q146.48 31.22 144.5 31.0 Q146.48 30.78 146.7 28.8Z" fill="#4a7a6a"/><path d="M142.2 37.9 Q142.39999999999998 39.699999999999996 144.2 39.9 Q142.39999999999998 40.1 142.2 41.9 Q142.0 40.1 140.2 39.9 Q142.0 39.699999999999996 142.2 37.9Z" fill="#4a7a6a"/><path d="M87.8 75.5 Q88.02 77.48 90.0 77.7 Q88.02 77.92 87.8 79.9 Q87.58 77.92 85.6 77.7 Q87.58 77.48 87.8 75.5Z" fill="#4a7a6a"/><path d="M79.4 49.4 Q79.7 52.1 82.4 52.4 Q79.7 52.699999999999996 79.4 55.4 Q79.10000000000001 52.699999999999996 76.4 52.4 Q79.10000000000001 52.1 79.4 49.4Z" fill="#fff3d0"/><path d="M155.9 53.2 Q156.25 56.35 159.4 56.7 Q156.25 57.050000000000004 155.9 60.2 Q155.55 57.050000000000004 152.4 56.7 Q155.55 56.35 155.9 53.2Z" fill="#fff3d0"/><path d="M148.9 61.599999999999994 Q149.3 65.19999999999999 152.9 65.6 Q149.3 66.0 148.9 69.6 Q148.5 66.0 144.9 65.6 Q148.5 65.19999999999999 148.9 61.599999999999994Z" fill="#fff3d0"/><path d="M136.2 80.1 Q136.5 82.8 139.2 83.1 Q136.5 83.39999999999999 136.2 86.1 Q135.89999999999998 83.39999999999999 133.2 83.1 Q135.89999999999998 82.8 136.2 80.1Z" fill="#fff3d0"/><g transform="translate(83.9 99.4) rotate(-8)"><rect x="0" y="0" width="28" height="12" rx="3" fill="#ffffff" opacity="0.9"/><text x="2" y="5.5" font-size="5" font-weight="bold" fill="#3a6aa0" font-family="Liberation Sans">PASTA &amp; ...</text><text x="1.5" y="10.5" font-size="5" font-weight="bold" fill="#3a6aa0" font-family="Liberation Sans">VEGETARIAN</text></g><path d="M85.5 116.59 h20.0" stroke="#ffffff" stroke-width="1.1" stroke-dasharray="1.0 0.7 3.1 0.9 0.9 0.5 2.0 0.6 1.3 0.7 1.5 0.7" opacity="0.6"/><path d="M85.5 121.35 h38.0" stroke="#ffffff" stroke-width="1.1" stroke-dasharray="2.3 0.5 3.2 0.8 2.7 0.7 3.1 0.8 3.0 0.8 2.4 1.0" opacity="0.6"/><path d="M85.5 126.11 h24.0" stroke="#ffffff" stroke-width="1.1" stroke-dasharray="2.9 0.4 1.0 0.5 2.2 1.0 1.6 0.6 2.6 0.9 1.1 0.9" opacity="0.6"/><path d="M85.5 130.88 h30.0" stroke="#ffffff" stroke-width="1.1" stroke-dasharray="2.2 0.6 2.1 0.6 1.9 1.0 3.2 0.8 1.8 0.9 0.9 0.8" opacity="0.6"/><path d="M85.5 135.64 h24.0" stroke="#ffffff" stroke-width="1.1" stroke-dasharray="1.0 0.9 2.9 0.8 1.5 0.7 1.2 0.5 1.3 0.5 2.2 0.5" opacity="0.6"/><path d="M141.9 113.04 h4.5" stroke="#ffffff" stroke-width="1.1" stroke-dasharray="3.1 0.6 1.2 0.7 0.8 0.9 2.6 0.4 1.1 0.5 2.0 0.7" opacity="0.6"/><path d="M141.9 118.69 h4.5" stroke="#ffffff" stroke-width="1.1" stroke-dasharray="2.3 0.7 1.0 0.7 1.2 0.4 1.5 0.8 1.5 0.9 1.8 0.5" opacity="0.6"/><path d="M141.9 124.34 h4.5" stroke="#ffffff" stroke-width="1.1" stroke-dasharray="1.1 0.8 1.4 0.7 2.5 0.8 1.6 0.7 3.1 0.8 1.9 0.6" opacity="0.6"/><path d="M141.9 129.99 h4.5" stroke="#ffffff" stroke-width="1.1" stroke-dasharray="2.7 0.9 2.9 0.8 3.2 0.5 2.5 0.6 2.0 0.8 2.1 0.5" opacity="0.6"/><path d="M141.9 135.64 h4.5" stroke="#ffffff" stroke-width="1.1" stroke-dasharray="3.1 0.5 1.7 1.0 2.3 0.5 1.0 0.6 2.5 1.0 2.0 0.9" opacity="0.6"/><path d="M103.4 143.6 Q103.80000000000001 145.2 105.4 145.6 Q103.80000000000001 146.0 103.4 147.6 Q103.0 146.0 101.4 145.6 Q103.0 145.2 103.4 143.6Z" fill="#ffffff"/><path d="M108.2 143.6 Q108.60000000000001 145.2 110.2 145.6 Q108.60000000000001 146.0 108.2 147.6 Q107.8 146.0 106.2 145.6 Q107.8 145.2 108.2 143.6Z" fill="#ffffff"/><path d="M113.0 143.6 Q113.4 145.2 115.0 145.6 Q113.4 146.0 113.0 147.6 Q112.6 146.0 111.0 145.6 Q112.6 145.2 113.0 143.6Z" fill="#ffffff"/><path d="M117.8 143.6 Q118.2 145.2 119.8 145.6 Q118.2 146.0 117.8 147.6 Q117.39999999999999 146.0 115.8 145.6 Q117.39999999999999 145.2 117.8 143.6Z" fill="#ffffff"/><path d="M122.6 143.6 Q123.0 145.2 124.6 145.6 Q123.0 146.0 122.6 147.6 Q122.19999999999999 146.0 120.6 145.6 Q122.19999999999999 145.2 122.6 143.6Z" fill="#ffffff"/><path d="M91.7 151.87 h46.0" stroke="#ffffff" stroke-width="1.1" stroke-dasharray="1.8 0.6 2.3 0.8 2.2 0.8 2.1 1.0 3.0 1.0 2.9 0.7" opacity="0.7"/><path d="M91.7 157.87 h32.2" stroke="#ffffff" stroke-width="1.1" stroke-dasharray="3.0 1.0 3.1 0.7 1.8 0.5 3.1 0.8 2.5 1.0 2.0 0.7" opacity="0.7"/><rect x="165.7" y="30.9" width="26" height="7" fill="#ffffff"/><text x="167.2" y="36.699999999999996" font-size="6" font-weight="bold" fill="#2c4a40" font-family="Liberation Sans" textLength="16.1" lengthAdjust="spacingAndGlyphs">SECONDI</text><path d="M165.7 42.90 h62.0" stroke="#ffffff" stroke-width="1.1" stroke-dasharray="2.9 0.9 2.1 0.6 1.6 0.4 1.1 0.5 1.8 0.6 2.6 0.7" opacity="0.6"/><path d="M165.7 48.24 h58.9" stroke="#ffffff" stroke-width="1.1" stroke-dasharray="1.0 0.5 1.6 0.7 1.8 0.8 1.1 0.8 2.2 0.6 2.0 0.8" opacity="0.6"/><path d="M165.7 53.57 h62.0" stroke="#ffffff" stroke-width="1.1" stroke-dasharray="1.3 0.9 0.9 0.8 3.0 0.7 2.7 1.0 3.1 0.5 1.4 0.4" opacity="0.6"/><path d="M165.7 58.90 h58.9" stroke="#ffffff" stroke-width="1.1" stroke-dasharray="2.7 0.7 1.2 0.7 1.8 0.9 3.0 0.5 3.1 0.4 2.3 0.6" opacity="0.6"/><rect x="165.4" y="64.5" width="15" height="7" fill="#ffffff"/><text x="166.9" y="70.3" font-size="6" font-weight="bold" fill="#2c4a40" font-family="Liberation Sans" textLength="9.3" lengthAdjust="spacingAndGlyphs">DOLCI</text><g transform="translate(183.4 70.5) rotate(-25)"><rect x="0" y="-3" width="20" height="7" rx="2" fill="#ffffff"/><path d="M3 1 C8 -1 12 2 17 0" stroke="#3a6aa0" stroke-width="0.8" fill="none"/></g><path d="M165.2 83.12 h12.6" stroke="#ffffff" stroke-width="1.1" stroke-dasharray="2.1 0.5 1.2 1.0 2.8 0.6 1.1 0.7 2.2 0.5 1.0 0.4" opacity="0.6"/><path d="M165.2 87.62 h16.8" stroke="#ffffff" stroke-width="1.1" stroke-dasharray="2.8 0.6 2.2 0.6 2.7 0.8 2.5 0.6 1.3 0.9 2.8 0.9" opacity="0.6"/><path d="M165.2 92.12 h27.3" stroke="#ffffff" stroke-width="1.1" stroke-dasharray="2.5 0.8 2.3 0.5 2.8 0.6 1.3 1.0 2.8 0.4 1.4 0.4" opacity="0.6"/><path d="M165.2 96.62 h25.2" stroke="#ffffff" stroke-width="1.1" stroke-dasharray="1.5 0.8 2.4 0.8 1.4 0.7 2.3 0.7 2.6 0.6 2.8 0.5" opacity="0.6"/><path d="M165.2 101.12 h23.1" stroke="#ffffff" stroke-width="1.1" stroke-dasharray="2.0 0.9 2.2 0.9 2.0 0.9 1.8 0.8 2.5 0.7 2.3 0.7" opacity="0.6"/><path d="M165.2 105.62 h42.0" stroke="#ffffff" stroke-width="1.1" stroke-dasharray="2.5 0.5 1.2 0.8 1.4 0.4 1.9 0.8 1.4 0.5 0.8 0.7" opacity="0.6"/><path d="M165.2 110.12 h29.4" stroke="#ffffff" stroke-width="1.1" stroke-dasharray="1.9 0.7 3.1 0.4 1.8 0.9 1.9 0.7 2.4 0.8 2.9 0.5" opacity="0.6"/><path d="M223.0 79.48 h3.5" stroke="#ffffff" stroke-width="1.1" stroke-dasharray="3.2 0.4 2.9 0.8 2.1 0.8 2.8 0.5 1.0 0.5 2.4 0.6" opacity="0.6"/><path d="M223.0 83.98 h3.5" stroke="#ffffff" stroke-width="1.1" stroke-dasharray="1.9 0.5 2.7 0.8 1.8 0.7 2.7 0.8 2.5 0.8 1.0 0.6" opacity="0.6"/><path d="M223.0 88.48 h3.5" stroke="#ffffff" stroke-width="1.1" stroke-dasharray="2.6 0.6 2.3 0.4 1.6 0.8 2.5 0.4 1.6 0.4 2.7 0.8" opacity="0.6"/><path d="M223.0 92.98 h3.5" stroke="#ffffff" stroke-width="1.1" stroke-dasharray="3.0 0.5 2.1 0.5 1.4 0.7 1.6 0.5 1.2 0.9 1.7 0.6" opacity="0.6"/><path d="M223.0 97.48 h3.5" stroke="#ffffff" stroke-width="1.1" stroke-dasharray="2.0 0.9 3.0 0.5 2.3 0.6 2.6 0.9 2.2 0.5 2.7 0.7" opacity="0.6"/><path d="M223.0 101.98 h3.5" stroke="#ffffff" stroke-width="1.1" stroke-dasharray="1.4 0.4 1.5 0.5 2.0 0.7 0.9 1.0 1.7 0.7 2.0 0.9" opacity="0.6"/><path d="M223.0 106.48 h3.5" stroke="#ffffff" stroke-width="1.1" stroke-dasharray="2.9 0.8 1.0 0.9 2.6 0.4 2.8 0.9 2.6 0.8 1.8 1.0" opacity="0.6"/><rect x="162.7" y="117.3" width="68.4" height="43.0" fill="none" stroke="#fff3d8" stroke-width="1.1"/><circle cx="208.6" cy="117.5" r="8.6" fill="#ffffff"/><circle cx="208.6" cy="117.5" r="6.5" fill="none" stroke="#dcb866" stroke-width="0.6"/><circle cx="208.6" cy="117.5" r="2.6" fill="#4a8a6a"/><path d="M169.2 124.95 h15.2" stroke="#ffffff" stroke-width="1.1" stroke-dasharray="2.8 0.8 2.5 0.8 2.4 0.9 1.8 0.6 1.1 0.9 2.8 0.4" opacity="0.6"/><path d="M169.2 128.97 h20.9" stroke="#ffffff" stroke-width="1.1" stroke-dasharray="2.4 0.5 2.6 0.9 2.3 0.7 1.1 0.6 1.1 0.6 2.5 0.4" opacity="0.6"/><path d="M169.2 133.00 h32.3" stroke="#ffffff" stroke-width="1.1" stroke-dasharray="2.6 0.6 1.7 0.5 1.6 1.0 2.5 0.5 2.0 0.4 1.8 0.7" opacity="0.6"/><path d="M169.2 137.03 h22.8" stroke="#ffffff" stroke-width="1.1" stroke-dasharray="2.2 0.8 2.4 0.9 1.7 0.6 2.4 0.8 3.1 0.7 2.5 0.9" opacity="0.6"/><path d="M169.2 141.05 h17.1" stroke="#ffffff" stroke-width="1.1" stroke-dasharray="0.9 0.7 1.8 0.6 1.8 0.8 2.4 0.7 3.2 1.0 2.0 0.5" opacity="0.6"/><path d="M169.2 145.08 h32.3" stroke="#ffffff" stroke-width="1.1" stroke-dasharray="2.4 0.6 1.8 0.5 1.2 0.4 1.0 1.0 1.0 0.8 3.0 0.5" opacity="0.6"/><path d="M169.2 149.11 h19.0" stroke="#ffffff" stroke-width="1.1" stroke-dasharray="2.5 0.9 2.3 0.7 1.3 1.0 2.3 0.5 1.1 0.6 2.7 0.4" opacity="0.6"/><path d="M169.2 153.13 h13.3" stroke="#ffffff" stroke-width="1.1" stroke-dasharray="2.2 0.8 2.1 0.7 1.6 0.9 2.6 0.8 2.9 1.0 1.5 0.9" opacity="0.6"/><path d="M223.1 121.56 h3.5" stroke="#ffffff" stroke-width="1.1" stroke-dasharray="3.1 0.6 3.0 0.6 2.6 0.8 0.9 0.4 2.0 0.5 2.6 0.6" opacity="0.6"/><path d="M223.1 126.07 h3.5" stroke="#ffffff" stroke-width="1.1" stroke-dasharray="1.4 0.5 2.7 0.8 2.1 0.8 1.0 0.9 0.9 1.0 2.0 0.4" opacity="0.6"/><path d="M223.1 130.58 h3.5" stroke="#ffffff" stroke-width="1.1" stroke-dasharray="1.6 0.7 1.6 0.8 2.1 0.7 2.4 0.6 1.7 0.7 2.8 0.7" opacity="0.6"/><path d="M223.1 135.09 h3.5" stroke="#ffffff" stroke-width="1.1" stroke-dasharray="2.2 0.5 2.6 0.5 1.8 0.7 1.0 0.5 1.7 0.5 1.3 0.9" opacity="0.6"/><path d="M223.1 139.60 h3.5" stroke="#ffffff" stroke-width="1.1" stroke-dasharray="3.2 0.5 3.2 0.9 2.3 0.8 1.9 0.5 2.9 0.7 1.4 0.9" opacity="0.6"/><path d="M223.1 144.11 h3.5" stroke="#ffffff" stroke-width="1.1" stroke-dasharray="2.2 0.9 2.1 0.6 1.2 0.8 2.6 0.6 2.3 0.7 1.1 0.7" opacity="0.6"/><path d="M223.1 148.62 h3.5" stroke="#ffffff" stroke-width="1.1" stroke-dasharray="2.5 0.5 2.7 0.9 2.3 0.5 1.0 1.0 1.9 0.9 2.7 0.8" opacity="0.6"/><path d="M223.1 153.13 h3.5" stroke="#ffffff" stroke-width="1.1" stroke-dasharray="1.9 0.5 2.6 0.9 2.1 0.6 1.7 0.8 3.2 1.0 1.7 0.6" opacity="0.6"/></g><rect x="925" y="488" width="355" height="388" fill="#e3c167"/><rect x="925" y="488" width="1" height="388" fill="#6f6a72"/><rect x="1115.3" y="488" width="1.5" height="46" fill="#f6ecd2"/><circle cx="1116" cy="650" r="118.5" fill="#ffffff"/><path d="M1135.14 760.44 L1135.12 760.39 L1135.11 760.34 L1135.09 760.28 L1135.07 760.23 L1118.85 762.24 L1118.86 762.25 L1118.86 762.25 L1118.86 762.26 L1118.86 762.27Z" fill="#d4e5ea"/><path d="M1181.35 742.95 L1181.26 742.27 L1181.08 741.60 L1180.83 740.93 L1180.49 740.26 L1163.89 750.02 L1164.14 750.52 L1164.33 751.01 L1164.46 751.51 L1164.53 752.01Z" fill="#d4e5ea"/><path d="M1016.66 601.80 L1014.26 603.20 L1012.09 604.64 L1010.16 606.11 L1008.47 607.61 L1004.55 625.25 L1006.30 623.70 L1008.30 622.18 L1010.54 620.69 L1013.03 619.23Z" fill="#a9c9d6"/><path d="M1018.98 702.29 L1018.01 703.58 L1017.24 704.88 L1016.67 706.19 L1016.31 707.51 L1027.74 722.51 L1028.06 721.34 L1028.57 720.18 L1029.25 719.03 L1030.11 717.89Z" fill="#d4e5ea"/><path d="M1096.86 761.27 L1096.88 761.32 L1096.89 761.38 L1096.91 761.43 L1096.93 761.49 L1113.15 762.43 L1113.14 762.42 L1113.14 762.41 L1113.14 762.40 L1113.14 762.39Z" fill="#d4e5ea"/><path d="M1049.88 558.65 L1047.31 559.54 L1044.89 560.47 L1042.61 561.42 L1040.48 562.40 L1030.62 575.43 L1033.03 574.32 L1035.61 573.24 L1038.35 572.20 L1041.25 571.19Z" fill="#d4e5ea"/><path d="M1200.52 727.83 L1200.41 726.80 L1200.16 725.76 L1199.76 724.73 L1199.21 723.71 L1184.97 736.61 L1185.42 737.46 L1185.75 738.31 L1185.97 739.17 L1186.05 740.02Z" fill="#d4e5ea"/><path d="M1134.92 761.80 L1134.95 761.74 L1134.98 761.69 L1135.01 761.63 L1135.03 761.58 L1118.85 762.44 L1118.84 762.45 L1118.84 762.46 L1118.83 762.46 L1118.83 762.47Z" fill="#d4e5ea"/><path d="M1075.86 542.89 L1073.51 543.39 L1071.24 543.93 L1069.04 544.49 L1066.93 545.07 L1056.71 554.17 L1059.27 553.46 L1061.92 552.78 L1064.67 552.13 L1067.51 551.52Z" fill="#d4e5ea"/><path d="M1097.75 762.60 L1097.81 762.65 L1097.87 762.70 L1097.94 762.75 L1098.00 762.80 L1113.31 762.62 L1113.30 762.62 L1113.29 762.61 L1113.28 762.60 L1113.27 762.59Z" fill="#4a90d5"/><path d="M1133.60 763.09 L1133.68 763.04 L1133.75 762.99 L1133.82 762.94 L1133.88 762.89 L1118.68 762.64 L1118.67 762.64 L1118.65 762.65 L1118.64 762.66 L1118.63 762.67Z" fill="#d4e5ea"/><path d="M1072.81 755.18 L1072.87 755.42 L1072.93 755.65 L1073.01 755.88 L1073.11 756.11 L1091.38 760.77 L1091.32 760.63 L1091.28 760.50 L1091.24 760.37 L1091.21 760.24Z" fill="#d4e5ea"/><path d="M1008.55 679.91 L1007.42 681.40 L1006.53 682.90 L1005.88 684.41 L1005.47 685.92 L1013.39 702.83 L1013.76 701.42 L1014.37 700.02 L1015.20 698.63 L1016.25 697.25Z" fill="#a9c9d6"/><path d="M1215.86 709.14 L1215.75 707.82 L1215.43 706.50 L1214.91 705.19 L1214.19 703.89 L1202.93 719.30 L1203.57 720.46 L1204.03 721.62 L1204.31 722.78 L1204.41 723.95Z" fill="#d4e5ea"/><path d="M1225.18 609.38 L1223.78 607.86 L1222.14 606.36 L1220.25 604.89 L1218.12 603.44 L1221.85 620.93 L1224.05 622.43 L1226.01 623.96 L1227.72 625.51 L1229.16 627.09Z" fill="#d4e5ea"/><path d="M1193.94 563.66 L1192.00 562.64 L1189.91 561.65 L1187.66 560.69 L1185.27 559.76 L1194.32 572.44 L1197.02 573.49 L1199.56 574.58 L1201.92 575.70 L1204.11 576.85Z" fill="#d4e5ea"/><path d="M1099.71 763.82 L1099.81 763.87 L1099.91 763.91 L1100.01 763.96 L1100.11 764.00 L1113.62 762.80 L1113.61 762.80 L1113.59 762.79 L1113.58 762.78 L1113.56 762.78Z" fill="#4a90d5"/><path d="M1158.51 756.81 L1158.65 756.58 L1158.78 756.35 L1158.89 756.12 L1158.98 755.89 L1140.68 760.64 L1140.62 760.77 L1140.56 760.90 L1140.48 761.04 L1140.40 761.17Z" fill="#d4e5ea"/><path d="M1167.76 545.90 L1165.76 545.28 L1163.68 544.68 L1161.51 544.11 L1159.26 543.57 L1168.26 552.35 L1170.98 553.00 L1173.60 553.69 L1176.12 554.41 L1178.53 555.16Z" fill="#d4e5ea"/><path d="M1131.26 764.26 L1131.37 764.22 L1131.48 764.17 L1131.59 764.13 L1131.70 764.08 L1118.35 762.81 L1118.33 762.82 L1118.32 762.83 L1118.30 762.83 L1118.28 762.84Z" fill="#d4e5ea"/><path d="M1102.61 764.88 L1102.74 764.91 L1102.88 764.95 L1103.01 764.99 L1103.15 765.02 L1114.08 762.96 L1114.06 762.95 L1114.04 762.94 L1114.02 762.94 L1114.00 762.93Z" fill="#4a90d5"/><path d="M1128.03 765.23 L1128.18 765.19 L1128.32 765.16 L1128.46 765.12 L1128.60 765.09 L1117.89 762.97 L1117.86 762.97 L1117.84 762.98 L1117.82 762.98 L1117.80 762.99Z" fill="#d4e5ea"/><path d="M1106.29 765.70 L1106.45 765.72 L1106.61 765.75 L1106.77 765.78 L1106.94 765.80 L1114.64 763.07 L1114.62 763.07 L1114.60 763.06 L1114.57 763.06 L1114.55 763.06Z" fill="#4a90d5"/><path d="M1050.65 743.80 L1050.74 744.47 L1050.92 745.15 L1051.17 745.82 L1051.51 746.48 L1068.11 754.64 L1067.86 754.14 L1067.67 753.65 L1067.54 753.15 L1067.47 752.65Z" fill="#d4e5ea"/><path d="M1124.11 765.94 L1124.27 765.92 L1124.44 765.90 L1124.61 765.87 L1124.77 765.85 L1117.31 763.08 L1117.29 763.08 L1117.26 763.09 L1117.24 763.09 L1117.21 763.09Z" fill="#4a90d5"/><path d="M1025.23 581.22 L1023.09 582.48 L1021.15 583.77 L1019.42 585.08 L1017.91 586.42 L1010.27 602.50 L1011.90 601.05 L1013.77 599.64 L1015.85 598.25 L1018.16 596.89Z" fill="#4a90d5"/><path d="M1120.72 533.49 L1119.04 533.45 L1117.34 533.43 L1115.65 533.43 L1113.96 533.44 L1113.25 537.41 L1115.53 537.40 L1117.82 537.40 L1120.10 537.43 L1122.37 537.49Z" fill="#d4e5ea"/><path d="M1110.53 766.24 L1110.71 766.25 L1110.89 766.27 L1111.07 766.28 L1111.25 766.29 L1115.29 763.15 L1115.26 763.14 L1115.24 763.14 L1115.21 763.14 L1115.18 763.14Z" fill="#4a90d5"/><path d="M1119.71 766.36 L1119.89 766.35 L1120.07 766.34 L1120.25 766.33 L1120.43 766.32 L1116.66 763.15 L1116.64 763.15 L1116.61 763.15 L1116.58 763.15 L1116.55 763.16Z" fill="#4a90d5"/><path d="M1226.69 687.73 L1226.58 686.21 L1226.21 684.69 L1225.61 683.18 L1224.76 681.68 L1216.98 698.89 L1217.76 700.29 L1218.32 701.69 L1218.66 703.10 L1218.77 704.51Z" fill="#d4e5ea"/><path d="M1115.09 766.46 L1115.28 766.46 L1115.46 766.47 L1115.65 766.47 L1115.84 766.47 L1115.98 763.17 L1115.95 763.17 L1115.92 763.17 L1115.89 763.17 L1115.86 763.17Z" fill="#4a90d5"/><path d="M1002.95 656.22 L1001.72 657.82 L1000.77 659.42 L1000.07 661.04 L999.64 662.67 L1003.67 680.74 L1004.09 679.17 L1004.76 677.60 L1005.68 676.05 L1006.86 674.51Z" fill="#4a90d5"/><path d="M1109.11 533.57 L1107.44 533.65 L1105.78 533.75 L1104.14 533.86 L1102.50 533.99 L1097.78 538.16 L1099.98 537.98 L1102.21 537.83 L1104.45 537.70 L1106.70 537.59Z" fill="#d4e5ea"/><path d="M1132.06 534.23 L1130.45 534.08 L1128.83 533.94 L1127.19 533.81 L1125.54 533.71 L1128.87 537.77 L1131.11 537.92 L1133.32 538.08 L1135.51 538.27 L1137.68 538.48Z" fill="#d4e5ea"/><path d="M1074.65 758.19 L1074.89 758.41 L1075.14 758.63 L1075.41 758.85 L1075.69 759.06 L1092.86 762.46 L1092.70 762.34 L1092.55 762.21 L1092.40 762.09 L1092.26 761.96Z" fill="#4a90d5"/><path d="M1179.80 747.53 L1180.26 746.87 L1180.64 746.21 L1180.94 745.54 L1181.17 744.87 L1164.39 753.44 L1164.23 753.94 L1164.00 754.43 L1163.72 754.93 L1163.38 755.42Z" fill="#d4e5ea"/><path d="M1155.37 759.71 L1155.69 759.50 L1156.00 759.29 L1156.30 759.07 L1156.58 758.85 L1139.29 762.34 L1139.13 762.47 L1138.96 762.59 L1138.78 762.71 L1138.60 762.84Z" fill="#d4e5ea"/><path d="M1215.61 588.04 L1214.36 586.68 L1212.88 585.33 L1211.19 584.01 L1209.29 582.72 L1216.56 598.51 L1218.60 599.90 L1220.42 601.32 L1222.01 602.77 L1223.37 604.24Z" fill="#d4e5ea"/><path d="M1031.48 728.28 L1031.59 729.32 L1031.84 730.35 L1032.24 731.38 L1032.79 732.40 L1047.03 743.81 L1046.58 742.96 L1046.25 742.11 L1046.03 741.25 L1045.95 740.40Z" fill="#d4e5ea"/><path d="M1097.91 534.46 L1096.35 534.65 L1094.82 534.86 L1093.31 535.09 L1091.83 535.33 L1083.37 539.96 L1085.37 539.64 L1087.40 539.33 L1089.47 539.05 L1091.57 538.79Z" fill="#d4e5ea"/><path d="M1063.38 546.18 L1061.52 546.84 L1059.74 547.51 L1058.07 548.21 L1056.50 548.93 L1044.12 558.82 L1046.02 557.96 L1048.04 557.11 L1050.18 556.29 L1052.43 555.50Z" fill="#a9c9d6"/><path d="M1232.52 664.57 L1232.40 662.94 L1232.02 661.31 L1231.37 659.69 L1230.45 658.08 L1226.49 676.31 L1227.37 677.86 L1228.00 679.43 L1228.37 681.00 L1228.48 682.57Z" fill="#d4e5ea"/><path d="M1142.46 535.74 L1141.03 535.48 L1139.57 535.23 L1138.08 534.99 L1136.56 534.77 L1143.75 539.22 L1145.80 539.51 L1147.81 539.83 L1149.79 540.16 L1151.72 540.52Z" fill="#d4e5ea"/><path d="M1002.41 632.29 L1001.18 633.90 L1000.21 635.52 L999.50 637.16 L999.07 638.81 L999.04 657.22 L999.47 655.57 L1000.17 653.94 L1001.14 652.31 L1002.38 650.70Z" fill="#e3bb5e"/><path d="M1078.89 760.97 L1079.30 761.17 L1079.73 761.37 L1080.17 761.56 L1080.62 761.75 L1095.69 764.00 L1095.43 763.89 L1095.18 763.78 L1094.93 763.67 L1094.70 763.56Z" fill="#4a90d5"/><path d="M1198.25 733.75 L1198.99 732.74 L1199.59 731.72 L1200.04 730.69 L1200.34 729.66 L1185.91 741.54 L1185.66 742.39 L1185.28 743.24 L1184.79 744.09 L1184.17 744.93Z" fill="#4a90d5"/><path d="M1177.44 549.92 L1176.01 549.17 L1174.47 548.45 L1172.83 547.74 L1171.09 547.06 L1182.55 556.56 L1184.65 557.39 L1186.63 558.24 L1188.49 559.12 L1190.22 560.02Z" fill="#d4e5ea"/><path d="M1037.85 563.77 L1036.09 564.82 L1034.49 565.88 L1033.06 566.97 L1031.80 568.07 L1020.81 581.84 L1022.23 580.60 L1023.85 579.37 L1025.66 578.16 L1027.65 576.98Z" fill="#a9c9d6"/><path d="M1149.93 762.32 L1150.42 762.13 L1150.90 761.95 L1151.36 761.76 L1151.81 761.57 L1136.56 763.90 L1136.30 764.01 L1136.03 764.12 L1135.76 764.22 L1135.48 764.33Z" fill="#d4e5ea"/><path d="M1052.90 748.36 L1053.54 749.01 L1054.26 749.65 L1055.06 750.28 L1055.93 750.91 L1071.39 757.92 L1070.74 757.46 L1070.15 756.99 L1069.62 756.51 L1069.14 756.03Z" fill="#a9c9d6"/><path d="M1016.14 709.28 L1016.25 710.60 L1016.57 711.92 L1017.09 713.23 L1017.81 714.53 L1029.07 728.73 L1028.43 727.57 L1027.97 726.41 L1027.69 725.25 L1027.59 724.08Z" fill="#4a90d5"/><path d="M1087.75 536.10 L1086.40 536.40 L1085.08 536.71 L1083.80 537.04 L1082.56 537.37 L1070.86 542.72 L1072.53 542.27 L1074.26 541.83 L1076.03 541.41 L1077.86 541.01Z" fill="#d4e5ea"/><path d="M1233.09 640.72 L1232.97 639.07 L1232.58 637.42 L1231.92 635.78 L1231.00 634.16 L1231.03 652.57 L1231.96 654.20 L1232.62 655.83 L1233.00 657.48 L1233.12 659.13Z" fill="#d4e5ea"/><path d="M1151.32 537.93 L1150.15 537.58 L1148.93 537.23 L1147.68 536.90 L1146.39 536.58 L1157.02 541.66 L1158.77 542.09 L1160.46 542.54 L1162.10 543.00 L1163.68 543.48Z" fill="#d4e5ea"/><path d="M1174.54 751.88 L1175.53 751.27 L1176.45 750.65 L1177.29 750.02 L1178.05 749.38 L1162.08 756.79 L1161.51 757.26 L1160.89 757.73 L1160.21 758.19 L1159.47 758.64Z" fill="#4a90d5"/><path d="M1201.52 569.46 L1200.47 568.34 L1199.25 567.23 L1197.86 566.14 L1196.30 565.07 L1206.78 578.44 L1208.55 579.66 L1210.12 580.89 L1211.50 582.14 L1212.69 583.41Z" fill="#d4e5ea"/><path d="M1085.28 763.38 L1085.85 763.54 L1086.42 763.70 L1087.01 763.86 L1087.60 764.01 L1099.70 765.30 L1099.36 765.22 L1099.02 765.13 L1098.69 765.03 L1098.37 764.94Z" fill="#a9c9d6"/><path d="M1006.98 609.19 L1005.80 610.73 L1004.88 612.28 L1004.21 613.84 L1003.79 615.41 L999.70 633.34 L1000.12 631.71 L1000.82 630.09 L1001.78 628.49 L1003.00 626.89Z" fill="#4a90d5"/><path d="M1142.53 764.46 L1143.15 764.32 L1143.77 764.17 L1144.37 764.02 L1144.97 763.87 L1132.63 765.22 L1132.29 765.31 L1131.94 765.39 L1131.59 765.48 L1131.23 765.56Z" fill="#d4e5ea"/><path d="M1213.02 716.13 L1213.99 714.84 L1214.76 713.54 L1215.33 712.23 L1215.69 710.91 L1204.26 725.52 L1203.94 726.69 L1203.43 727.85 L1202.75 729.00 L1201.89 730.14Z" fill="#d4e5ea"/><path d="M1005.31 687.66 L1005.42 689.18 L1005.79 690.70 L1006.39 692.21 L1007.24 693.71 L1015.02 710.06 L1014.24 708.67 L1013.68 707.26 L1013.34 705.85 L1013.23 704.44Z" fill="#4a90d5"/><path d="M1093.46 765.27 L1094.15 765.39 L1094.84 765.50 L1095.53 765.62 L1096.24 765.72 L1104.66 766.29 L1104.25 766.22 L1103.85 766.16 L1103.46 766.09 L1103.06 766.02Z" fill="#4a90d5"/><path d="M1133.58 766.03 L1134.31 765.93 L1135.02 765.83 L1135.74 765.73 L1136.44 765.62 L1127.73 766.23 L1127.33 766.29 L1126.92 766.35 L1126.51 766.41 L1126.09 766.46Z" fill="#4a90d5"/><path d="M1228.37 617.24 L1228.25 615.67 L1227.88 614.10 L1227.25 612.54 L1226.37 610.98 L1230.40 628.75 L1231.32 630.36 L1231.97 631.98 L1232.35 633.61 L1232.47 635.24Z" fill="#4a90d5"/><path d="M1053.96 550.25 L1052.69 551.02 L1051.52 551.80 L1050.47 552.59 L1049.53 553.40 L1035.70 564.23 L1036.83 563.25 L1038.10 562.29 L1039.51 561.35 L1041.05 560.42Z" fill="#4a90d5"/><path d="M1079.23 538.41 L1078.16 538.79 L1077.14 539.19 L1076.16 539.59 L1075.24 540.01 L1060.97 546.28 L1062.22 545.72 L1063.54 545.18 L1064.92 544.64 L1066.37 544.13Z" fill="#a9c9d6"/><path d="M1034.12 734.19 L1035.07 735.19 L1036.16 736.17 L1037.40 737.14 L1038.77 738.10 L1051.99 748.53 L1050.85 747.74 L1049.83 746.93 L1048.92 746.12 L1048.13 745.29Z" fill="#4a90d5"/><path d="M1102.95 766.53 L1103.72 766.60 L1104.48 766.66 L1105.25 766.72 L1106.02 766.78 L1110.27 766.89 L1109.83 766.86 L1109.39 766.83 L1108.95 766.79 L1108.51 766.75Z" fill="#4a90d5"/><path d="M1123.61 766.92 L1124.40 766.88 L1125.17 766.83 L1125.95 766.78 L1126.72 766.73 L1122.16 766.86 L1121.71 766.89 L1121.27 766.92 L1120.82 766.95 L1120.37 766.97Z" fill="#4a90d5"/><path d="M1016.44 587.97 L1015.39 589.35 L1014.56 590.74 L1013.96 592.13 L1013.59 593.54 L1005.61 610.17 L1006.02 608.65 L1006.67 607.15 L1007.56 605.65 L1008.69 604.17Z" fill="#a9c9d6"/><path d="M1058.81 752.63 L1059.97 753.22 L1061.19 753.79 L1062.48 754.35 L1063.84 754.89 L1077.26 760.88 L1076.26 760.48 L1075.30 760.06 L1074.39 759.64 L1073.53 759.20Z" fill="#4a90d5"/><path d="M1113.20 767.10 L1114.00 767.11 L1114.79 767.12 L1115.59 767.12 L1116.38 767.12 L1116.22 767.09 L1115.76 767.09 L1115.31 767.09 L1114.85 767.08 L1114.39 767.07Z" fill="#a9c9d6"/><path d="M1158.13 540.68 L1157.29 540.26 L1156.39 539.84 L1155.44 539.43 L1154.45 539.03 L1167.90 544.96 L1169.25 545.50 L1170.52 546.05 L1171.73 546.62 L1172.88 547.19Z" fill="#d4e5ea"/><path d="M1117.56 532.96 L1117.12 532.95 L1116.68 532.95 L1116.24 532.95 L1115.81 532.95 L1115.66 532.85 L1116.43 532.85 L1117.20 532.85 L1117.96 532.86 L1118.73 532.87Z" fill="#d4e5ea"/><path d="M1223.45 695.47 L1224.58 693.99 L1225.47 692.49 L1226.12 690.98 L1226.53 689.46 L1218.61 706.12 L1218.24 707.53 L1217.63 708.93 L1216.80 710.32 L1215.75 711.70Z" fill="#d4e5ea"/><path d="M1111.68 533.06 L1111.25 533.08 L1110.82 533.11 L1110.39 533.14 L1109.97 533.17 L1105.41 533.23 L1106.16 533.18 L1106.91 533.13 L1107.66 533.09 L1108.41 533.04Z" fill="#d4e5ea"/><path d="M1183.54 554.50 L1182.76 553.67 L1181.86 552.86 L1180.85 552.06 L1179.72 551.28 L1192.98 561.66 L1194.34 562.61 L1195.57 563.58 L1196.65 564.56 L1197.60 565.55Z" fill="#d4e5ea"/><path d="M1123.35 533.28 L1122.93 533.24 L1122.51 533.21 L1122.08 533.17 L1121.66 533.14 L1125.93 533.19 L1126.68 533.24 L1127.42 533.30 L1128.16 533.36 L1128.89 533.43Z" fill="#d4e5ea"/><path d="M1165.88 755.72 L1167.34 755.20 L1168.74 754.67 L1170.07 754.11 L1171.33 753.55 L1157.09 759.89 L1156.15 760.31 L1155.16 760.71 L1154.13 761.11 L1153.04 761.50Z" fill="#a9c9d6"/><path d="M1191.20 739.34 L1192.75 738.41 L1194.16 737.46 L1195.44 736.49 L1196.58 735.51 L1182.79 746.39 L1181.84 747.20 L1180.78 748.00 L1179.61 748.79 L1178.33 749.56Z" fill="#a9c9d6"/><path d="M999.48 664.37 L999.60 666.00 L999.98 667.63 L1000.63 669.25 L1001.55 670.86 L1005.51 688.65 L1004.63 687.09 L1004.00 685.53 L1003.63 683.96 L1003.52 682.38Z" fill="#a9c9d6"/><path d="M1106.05 533.57 L1105.65 533.62 L1105.26 533.68 L1104.86 533.73 L1104.48 533.79 L1095.78 534.33 L1096.46 534.22 L1097.14 534.12 L1097.84 534.03 L1098.53 533.93Z" fill="#d4e5ea"/><path d="M1128.71 533.99 L1128.33 533.92 L1127.95 533.86 L1127.57 533.80 L1127.18 533.74 L1135.62 534.24 L1136.30 534.34 L1136.98 534.45 L1137.64 534.56 L1138.30 534.68Z" fill="#d4e5ea"/><path d="M1218.57 595.21 L1218.46 593.80 L1218.13 592.40 L1217.57 591.00 L1216.78 589.61 L1224.63 605.93 L1225.47 607.43 L1226.08 608.94 L1226.44 610.45 L1226.55 611.97Z" fill="#e3bb5e"/><path d="M1030.37 569.59 L1029.51 570.72 L1028.84 571.87 L1028.33 573.03 L1028.01 574.19 L1016.52 588.75 L1016.89 587.44 L1017.45 586.14 L1018.22 584.84 L1019.19 583.56Z" fill="#4a90d5"/><path d="M1101.00 534.45 L1100.65 534.53 L1100.32 534.61 L1099.98 534.70 L1099.66 534.78 L1087.32 536.06 L1087.89 535.92 L1088.48 535.77 L1089.07 535.63 L1089.67 535.49Z" fill="#d4e5ea"/><path d="M1229.05 672.72 L1230.28 671.13 L1231.23 669.52 L1231.93 667.90 L1232.36 666.27 L1228.33 684.22 L1227.91 685.79 L1227.24 687.35 L1226.32 688.90 L1225.14 690.44Z" fill="#4a90d5"/><path d="M1019.10 716.27 L1020.29 717.54 L1021.67 718.80 L1023.25 720.04 L1025.02 721.25 L1035.46 734.67 L1033.89 733.60 L1032.49 732.50 L1031.27 731.39 L1030.21 730.26Z" fill="#e3bb5e"/><path d="M1133.33 535.06 L1133.02 534.97 L1132.70 534.88 L1132.38 534.79 L1132.06 534.71 L1144.18 535.93 L1144.75 536.08 L1145.32 536.23 L1145.87 536.39 L1146.42 536.55Z" fill="#d4e5ea"/><path d="M1072.86 541.25 L1072.13 541.70 L1071.46 542.15 L1070.84 542.61 L1070.28 543.08 L1054.28 550.43 L1055.04 549.80 L1055.87 549.17 L1056.78 548.56 L1057.76 547.96Z" fill="#4a90d5"/><path d="M1068.05 756.36 L1069.65 756.85 L1071.31 757.32 L1073.02 757.77 L1074.78 758.21 L1085.39 763.34 L1084.08 763.02 L1082.81 762.69 L1081.58 762.34 L1080.39 761.98Z" fill="#4a90d5"/><path d="M998.91 640.48 L999.03 642.13 L999.42 643.77 L1000.08 645.41 L1001.00 647.04 L1000.97 665.46 L1000.04 663.83 L999.38 662.19 L999.00 660.54 L998.88 658.89Z" fill="#a9c9d6"/><path d="M1154.32 758.86 L1156.17 758.45 L1157.96 758.03 L1159.70 757.59 L1161.39 757.13 L1149.71 762.54 L1148.45 762.88 L1147.16 763.21 L1145.83 763.53 L1144.46 763.83Z" fill="#4a90d5"/><path d="M1204.14 575.63 L1204.04 574.46 L1203.76 573.30 L1203.30 572.14 L1202.66 571.00 L1213.98 585.15 L1214.70 586.45 L1215.22 587.75 L1215.53 589.07 L1215.65 590.38Z" fill="#a9c9d6"/><path d="M1162.49 543.83 L1162.02 543.35 L1161.50 542.88 L1160.91 542.42 L1160.27 541.96 L1175.77 548.92 L1176.63 549.54 L1177.42 550.17 L1178.13 550.80 L1178.77 551.44Z" fill="#d4e5ea"/><path d="M1096.82 535.67 L1096.55 535.77 L1096.29 535.87 L1096.03 535.97 L1095.79 536.08 L1080.53 538.34 L1080.96 538.16 L1081.41 537.98 L1081.87 537.80 L1082.34 537.62Z" fill="#a9c9d6"/><path d="M1204.54 722.72 L1206.54 721.53 L1208.35 720.32 L1209.97 719.09 L1211.40 717.84 L1200.46 731.65 L1199.19 732.76 L1197.76 733.85 L1196.15 734.92 L1194.38 735.97Z" fill="#4a90d5"/><path d="M1041.52 739.74 L1043.26 740.64 L1045.13 741.52 L1047.12 742.38 L1049.23 743.21 L1060.66 752.77 L1058.91 752.08 L1057.26 751.37 L1055.71 750.64 L1054.27 749.89Z" fill="#a9c9d6"/><path d="M1048.15 554.86 L1047.54 555.70 L1047.04 556.54 L1046.67 557.38 L1046.42 558.23 L1031.94 570.06 L1032.24 569.03 L1032.69 568.01 L1033.29 567.00 L1034.03 565.99Z" fill="#a9c9d6"/><path d="M1136.95 536.41 L1136.72 536.31 L1136.48 536.20 L1136.24 536.09 L1136.00 535.99 L1151.09 538.18 L1151.53 538.36 L1151.95 538.55 L1152.36 538.74 L1152.76 538.93Z" fill="#d4e5ea"/><path d="M1229.59 648.91 L1230.82 647.30 L1231.79 645.67 L1232.50 644.03 L1232.93 642.39 L1232.96 660.80 L1232.53 662.45 L1231.83 664.09 L1230.86 665.71 L1229.62 667.32Z" fill="#4a90d5"/><path d="M1003.63 617.05 L1003.75 618.63 L1004.12 620.20 L1004.75 621.76 L1005.63 623.31 L1001.60 641.53 L1000.68 639.92 L1000.03 638.30 L999.65 636.67 L999.53 635.04Z" fill="#a9c9d6"/><path d="M1080.08 759.34 L1082.03 759.70 L1084.02 760.04 L1086.05 760.36 L1088.12 760.66 L1095.30 765.17 L1093.76 764.94 L1092.25 764.71 L1090.77 764.45 L1089.32 764.19Z" fill="#a9c9d6"/><path d="M1179.77 744.27 L1182.04 743.48 L1184.19 742.66 L1186.22 741.81 L1188.13 740.94 L1175.79 750.88 L1174.21 751.61 L1172.52 752.31 L1170.74 752.99 L1168.86 753.65Z" fill="#4a90d5"/><path d="M1185.72 559.37 L1185.64 558.52 L1185.43 557.67 L1185.09 556.82 L1184.64 555.98 L1198.93 567.34 L1199.47 568.35 L1199.87 569.38 L1200.13 570.41 L1200.23 571.43Z" fill="#a9c9d6"/><path d="M1140.54 761.09 L1142.66 760.82 L1144.75 760.54 L1146.80 760.23 L1148.82 759.90 L1140.37 764.60 L1138.87 764.85 L1137.35 765.08 L1135.80 765.29 L1134.22 765.48Z" fill="#4a90d5"/><path d="M1008.50 695.40 L1009.85 696.87 L1011.45 698.32 L1013.27 699.74 L1015.32 701.14 L1022.53 716.96 L1020.62 715.66 L1018.93 714.34 L1017.45 713.00 L1016.19 711.63Z" fill="#e3bb5e"/><path d="M1093.76 537.14 L1093.58 537.25 L1093.41 537.37 L1093.25 537.49 L1093.09 537.61 L1075.79 541.03 L1076.07 540.82 L1076.35 540.61 L1076.65 540.40 L1076.96 540.20Z" fill="#4a90d5"/><path d="M1116.34 535.75 L1116.27 535.75 L1116.20 535.75 L1116.13 535.75 L1116.06 535.75 L1116.16 533.59 L1116.34 533.59 L1116.52 533.59 L1116.71 533.59 L1116.89 533.59Z" fill="#4a90d5"/><path d="M1114.61 535.79 L1114.55 535.79 L1114.48 535.79 L1114.41 535.80 L1114.34 535.80 L1111.66 533.74 L1111.84 533.72 L1112.02 533.71 L1112.19 533.70 L1112.37 533.69Z" fill="#a9c9d6"/><path d="M1068.98 544.45 L1068.65 544.93 L1068.37 545.42 L1068.14 545.91 L1067.98 546.40 L1051.18 554.92 L1051.40 554.25 L1051.69 553.59 L1052.07 552.93 L1052.53 552.28Z" fill="#a9c9d6"/><path d="M1118.04 535.83 L1117.98 535.83 L1117.91 535.82 L1117.84 535.82 L1117.78 535.81 L1120.65 533.76 L1120.83 533.77 L1121.00 533.79 L1121.18 533.80 L1121.35 533.81Z" fill="#a9c9d6"/><path d="M1139.35 537.99 L1139.21 537.87 L1139.08 537.74 L1138.93 537.62 L1138.77 537.50 L1155.97 540.84 L1156.24 541.05 L1156.50 541.27 L1156.74 541.48 L1156.97 541.69Z" fill="#d4e5ea"/><path d="M1094.19 761.39 L1096.38 761.60 L1098.59 761.79 L1100.83 761.96 L1103.08 762.11 L1106.40 766.24 L1104.73 766.13 L1103.07 766.01 L1101.43 765.87 L1099.80 765.71Z" fill="#4a90d5"/><path d="M1112.97 535.94 L1112.91 535.95 L1112.85 535.96 L1112.78 535.97 L1112.72 535.98 L1107.41 534.19 L1107.57 534.17 L1107.74 534.15 L1107.90 534.12 L1108.07 534.10Z" fill="#4a90d5"/><path d="M1119.63 536.03 L1119.57 536.02 L1119.51 536.01 L1119.45 536.00 L1119.39 536.00 L1124.87 534.24 L1125.03 534.26 L1125.19 534.29 L1125.35 534.32 L1125.51 534.34Z" fill="#4a90d5"/><path d="M1125.32 762.29 L1127.60 762.18 L1129.86 762.05 L1132.11 761.90 L1134.34 761.72 L1129.62 765.95 L1127.96 766.08 L1126.30 766.20 L1124.62 766.30 L1122.92 766.38Z" fill="#a9c9d6"/><path d="M1225.02 625.10 L1226.20 623.57 L1227.12 622.02 L1227.79 620.45 L1228.21 618.89 L1232.30 636.94 L1231.88 638.57 L1231.18 640.19 L1230.22 641.79 L1229.00 643.38Z" fill="#a9c9d6"/><path d="M1013.43 595.15 L1013.54 596.56 L1013.87 597.96 L1014.43 599.36 L1015.22 600.75 L1007.37 617.94 L1006.53 616.44 L1005.92 614.94 L1005.56 613.42 L1005.45 611.90Z" fill="#a9c9d6"/><path d="M1109.57 762.39 L1111.87 762.45 L1114.17 762.48 L1116.48 762.48 L1118.79 762.47 L1118.07 766.51 L1116.36 766.52 L1114.64 766.52 L1112.93 766.49 L1111.23 766.45Z" fill="#4a90d5"/><path d="M1111.50 536.21 L1111.45 536.22 L1111.40 536.24 L1111.34 536.25 L1111.29 536.26 L1103.66 534.94 L1103.80 534.90 L1103.94 534.87 L1104.08 534.83 L1104.22 534.80Z" fill="#a9c9d6"/><path d="M1213.96 702.77 L1216.27 701.40 L1218.36 700.01 L1220.23 698.59 L1221.87 697.15 L1214.29 713.25 L1212.77 714.59 L1211.03 715.91 L1209.09 717.20 L1206.94 718.47Z" fill="#a9c9d6"/><path d="M1164.15 547.19 L1164.09 546.70 L1163.96 546.20 L1163.77 545.71 L1163.53 545.22 L1180.16 553.32 L1180.49 553.98 L1180.74 554.64 L1180.92 555.31 L1181.01 555.98Z" fill="#d4e5ea"/><path d="M1121.01 536.34 L1120.96 536.33 L1120.90 536.31 L1120.85 536.30 L1120.80 536.29 L1128.58 535.00 L1128.71 535.04 L1128.85 535.07 L1128.98 535.11 L1129.11 535.15Z" fill="#a9c9d6"/><path d="M1110.30 536.57 L1110.25 536.59 L1110.21 536.60 L1110.17 536.62 L1110.13 536.64 L1100.63 535.92 L1100.74 535.88 L1100.84 535.83 L1100.95 535.79 L1101.06 535.75Z" fill="#4a90d5"/><path d="M1122.09 536.74 L1122.05 536.72 L1122.01 536.70 L1121.98 536.68 L1121.94 536.67 L1131.55 536.00 L1131.65 536.04 L1131.75 536.09 L1131.85 536.13 L1131.95 536.18Z" fill="#4a90d5"/><path d="M1091.99 538.78 L1091.91 538.90 L1091.84 539.03 L1091.78 539.16 L1091.73 539.28 L1073.40 543.97 L1073.49 543.75 L1073.60 543.52 L1073.72 543.30 L1073.86 543.08Z" fill="#a9c9d6"/><path d="M1053.25 744.61 L1055.67 745.36 L1058.21 746.09 L1060.84 746.78 L1063.57 747.44 L1072.55 756.28 L1070.28 755.73 L1068.10 755.16 L1066.00 754.56 L1063.99 753.93Z" fill="#4a90d5"/><path d="M1027.69 722.84 L1029.89 724.00 L1032.26 725.12 L1034.81 726.21 L1037.52 727.27 L1046.52 740.00 L1044.12 739.06 L1041.87 738.10 L1039.77 737.10 L1037.82 736.08Z" fill="#e3bb5e"/><path d="M1002.78 672.53 L1004.23 674.10 L1005.94 675.66 L1007.90 677.19 L1010.11 678.69 L1013.77 696.20 L1011.64 694.75 L1009.75 693.28 L1008.10 691.78 L1006.71 690.25Z" fill="#d5e6eb"/><path d="M1027.86 575.76 L1027.96 576.92 L1028.24 578.08 L1028.70 579.24 L1029.34 580.39 L1018.02 595.76 L1017.30 594.47 L1016.78 593.16 L1016.47 591.85 L1016.35 590.53Z" fill="#a9c9d6"/><path d="M1215.56 602.39 L1216.61 601.01 L1217.44 599.63 L1218.04 598.23 L1218.41 596.82 L1226.39 613.71 L1225.98 615.22 L1225.33 616.73 L1224.44 618.22 L1223.31 619.71Z" fill="#4a90d5"/><path d="M1109.42 537.01 L1109.39 537.03 L1109.37 537.05 L1109.34 537.06 L1109.32 537.08 L1098.49 537.09 L1098.56 537.04 L1098.63 536.99 L1098.70 536.94 L1098.77 536.89Z" fill="#a9c9d6"/><path d="M1140.39 539.68 L1140.36 539.55 L1140.32 539.43 L1140.28 539.30 L1140.23 539.17 L1158.52 543.77 L1158.61 544.00 L1158.69 544.22 L1158.75 544.44 L1158.80 544.67Z" fill="#4a90d5"/><path d="M1122.82 537.19 L1122.80 537.17 L1122.78 537.16 L1122.75 537.14 L1122.73 537.12 L1133.62 537.18 L1133.68 537.23 L1133.74 537.28 L1133.80 537.33 L1133.86 537.38Z" fill="#a9c9d6"/><path d="M1164.64 748.26 L1167.50 747.65 L1170.26 747.00 L1172.93 746.32 L1175.49 745.61 L1165.31 754.76 L1163.18 755.35 L1160.97 755.91 L1158.68 756.45 L1156.32 756.96Z" fill="#d5e6eb"/><path d="M1108.93 537.49 L1108.92 537.51 L1108.91 537.53 L1108.90 537.55 L1108.89 537.57 L1097.37 538.37 L1097.40 538.32 L1097.42 538.27 L1097.45 538.21 L1097.48 538.16Z" fill="#4a90d5"/><path d="M1046.28 559.75 L1046.36 560.60 L1046.57 561.45 L1046.91 562.30 L1047.36 563.14 L1033.07 575.99 L1032.53 574.97 L1032.13 573.95 L1031.87 572.92 L1031.77 571.89Z" fill="#e3bb5e"/><path d="M1190.91 728.52 L1193.82 727.51 L1196.57 726.46 L1199.15 725.38 L1201.57 724.26 L1191.75 737.34 L1189.62 738.33 L1187.33 739.29 L1184.89 740.21 L1182.32 741.11Z" fill="#a9c9d6"/><path d="M1123.15 537.69 L1123.15 537.67 L1123.14 537.65 L1123.14 537.63 L1123.13 537.61 L1134.67 538.46 L1134.69 538.52 L1134.71 538.57 L1134.72 538.62 L1134.74 538.68Z" fill="#4a90d5"/><path d="M1201.63 581.79 L1202.49 580.66 L1203.16 579.51 L1203.67 578.36 L1203.99 577.20 L1215.48 592.16 L1215.11 593.47 L1214.55 594.77 L1213.78 596.07 L1212.81 597.36Z" fill="#4a90d5"/><path d="M1219.02 680.39 L1221.51 678.93 L1223.75 677.44 L1225.75 675.91 L1227.50 674.36 L1223.64 692.03 L1221.95 693.52 L1220.02 694.99 L1217.85 696.44 L1215.45 697.85Z" fill="#a9c9d6"/><path d="M1067.85 547.83 L1067.91 548.32 L1068.04 548.82 L1068.23 549.31 L1068.47 549.80 L1051.84 559.50 L1051.51 558.84 L1051.26 558.17 L1051.08 557.51 L1050.99 556.84Z" fill="#4a90d5"/><path d="M1108.85 538.00 L1108.85 538.02 L1108.86 538.04 L1108.86 538.06 L1108.87 538.08 L1097.33 539.69 L1097.31 539.64 L1097.29 539.59 L1097.28 539.54 L1097.26 539.48Z" fill="#a9c9d6"/><path d="M1091.61 540.50 L1091.64 540.62 L1091.68 540.75 L1091.72 540.88 L1091.77 541.01 L1073.48 546.99 L1073.39 546.77 L1073.31 546.54 L1073.25 546.32 L1073.20 546.10Z" fill="#4a90d5"/><path d="M1123.07 538.19 L1123.08 538.17 L1123.09 538.15 L1123.10 538.13 L1123.11 538.11 L1134.63 539.79 L1134.60 539.84 L1134.58 539.89 L1134.55 539.95 L1134.52 540.00Z" fill="#a9c9d6"/><path d="M1183.85 564.25 L1184.46 563.42 L1184.96 562.58 L1185.33 561.73 L1185.58 560.88 L1200.06 573.26 L1199.76 574.29 L1199.31 575.31 L1198.71 576.33 L1197.97 577.34Z" fill="#4a90d5"/><path d="M1002.22 648.67 L1003.68 650.27 L1005.40 651.84 L1007.39 653.38 L1009.62 654.90 L1009.59 673.32 L1007.35 671.80 L1005.37 670.26 L1003.65 668.68 L1002.18 667.09Z" fill="#4a90d5"/><path d="M1140.01 541.40 L1140.09 541.27 L1140.16 541.15 L1140.22 541.02 L1140.27 540.89 L1158.60 546.79 L1158.51 547.02 L1158.40 547.24 L1158.28 547.46 L1158.14 547.68Z" fill="#a9c9d6"/><path d="M1163.02 550.57 L1163.35 550.08 L1163.63 549.60 L1163.86 549.11 L1164.02 548.61 L1180.82 557.90 L1180.60 558.56 L1180.31 559.23 L1179.93 559.88 L1179.47 560.54Z" fill="#a9c9d6"/><path d="M1109.18 538.49 L1109.20 538.51 L1109.22 538.53 L1109.25 538.55 L1109.27 538.57 L1098.38 540.98 L1098.32 540.93 L1098.26 540.88 L1098.20 540.83 L1098.14 540.78Z" fill="#4a90d5"/><path d="M1068.62 748.52 L1071.59 749.08 L1074.65 749.61 L1077.77 750.10 L1080.96 750.54 L1086.96 758.85 L1084.31 758.48 L1081.72 758.07 L1079.19 757.64 L1076.73 757.17Z" fill="#4a90d5"/><path d="M1122.58 538.68 L1122.61 538.66 L1122.63 538.64 L1122.66 538.62 L1122.68 538.60 L1133.51 541.07 L1133.44 541.12 L1133.37 541.17 L1133.30 541.22 L1133.23 541.27Z" fill="#4a90d5"/><path d="M1146.69 751.08 L1149.96 750.69 L1153.17 750.25 L1156.32 749.77 L1159.40 749.26 L1151.97 757.79 L1149.42 758.21 L1146.81 758.60 L1144.15 758.97 L1141.44 759.29Z" fill="#d5e6eb"/><path d="M1109.91 538.95 L1109.95 538.97 L1109.99 538.99 L1110.02 539.00 L1110.06 539.02 L1100.45 542.16 L1100.35 542.12 L1100.25 542.07 L1100.15 542.03 L1100.05 541.98Z" fill="#a9c9d6"/><path d="M1121.70 539.12 L1121.75 539.10 L1121.79 539.08 L1121.83 539.07 L1121.87 539.05 L1131.37 542.24 L1131.26 542.28 L1131.16 542.32 L1131.05 542.37 L1130.94 542.41Z" fill="#a9c9d6"/><path d="M1017.93 702.70 L1020.45 704.03 L1023.18 705.33 L1026.12 706.58 L1029.25 707.80 L1035.46 723.14 L1032.55 722.01 L1029.83 720.85 L1027.29 719.65 L1024.95 718.41Z" fill="#d5e6eb"/><path d="M1219.49 656.61 L1222.00 655.14 L1224.28 653.63 L1226.30 652.09 L1228.06 650.52 L1228.10 668.94 L1226.33 670.50 L1224.31 672.04 L1222.03 673.55 L1219.52 675.03Z" fill="#a9c9d6"/><path d="M1110.99 539.35 L1111.04 539.36 L1111.10 539.37 L1111.15 539.39 L1111.20 539.40 L1103.42 543.16 L1103.29 543.12 L1103.15 543.09 L1103.02 543.05 L1102.89 543.01Z" fill="#4a90d5"/><path d="M1006.82 624.92 L1008.22 626.44 L1009.86 627.93 L1011.75 629.41 L1013.88 630.85 L1010.15 649.35 L1007.95 647.85 L1005.99 646.32 L1004.28 644.77 L1002.84 643.19Z" fill="#e3bb5e"/><path d="M1092.65 542.19 L1092.79 542.31 L1092.92 542.43 L1093.07 542.56 L1093.23 542.67 L1076.03 549.92 L1075.76 549.71 L1075.50 549.50 L1075.26 549.28 L1075.03 549.07Z" fill="#4a90d5"/><path d="M1120.50 539.48 L1120.55 539.46 L1120.60 539.45 L1120.66 539.44 L1120.71 539.43 L1128.34 543.22 L1128.20 543.26 L1128.06 543.29 L1127.92 543.32 L1127.78 543.36Z" fill="#4a90d5"/><path d="M1112.37 539.65 L1112.43 539.66 L1112.49 539.67 L1112.55 539.68 L1112.61 539.69 L1107.13 543.92 L1106.97 543.90 L1106.81 543.87 L1106.65 543.84 L1106.49 543.82Z" fill="#a9c9d6"/><path d="M1138.24 543.04 L1138.42 542.93 L1138.59 542.81 L1138.75 542.69 L1138.91 542.57 L1156.21 549.73 L1155.93 549.94 L1155.65 550.15 L1155.35 550.36 L1155.04 550.56Z" fill="#4a90d5"/><path d="M1119.03 539.74 L1119.09 539.74 L1119.15 539.73 L1119.22 539.72 L1119.28 539.71 L1124.59 543.96 L1124.43 543.99 L1124.26 544.01 L1124.10 544.04 L1123.93 544.06Z" fill="#a9c9d6"/><path d="M1041.42 728.63 L1044.49 729.59 L1047.72 730.52 L1051.08 731.40 L1054.58 732.23 L1061.62 744.39 L1058.53 743.66 L1055.55 742.88 L1052.70 742.06 L1049.97 741.20Z" fill="#a9c9d6"/><path d="M1086.75 751.24 L1090.10 751.58 L1093.49 751.88 L1096.92 752.13 L1100.39 752.34 L1103.06 760.34 L1100.19 760.16 L1097.34 759.95 L1094.53 759.71 L1091.75 759.43Z" fill="#4a90d5"/><path d="M1113.96 539.85 L1114.02 539.86 L1114.09 539.87 L1114.16 539.87 L1114.22 539.88 L1111.35 544.40 L1111.17 544.39 L1111.00 544.37 L1110.82 544.36 L1110.65 544.34Z" fill="#4a90d5"/><path d="M1117.39 539.90 L1117.45 539.90 L1117.52 539.89 L1117.59 539.89 L1117.66 539.88 L1120.34 544.42 L1120.16 544.44 L1119.98 544.45 L1119.81 544.46 L1119.63 544.47Z" fill="#4a90d5"/><path d="M1198.77 709.18 L1202.13 708.02 L1205.31 706.81 L1208.28 705.57 L1211.05 704.28 L1204.25 719.87 L1201.67 721.07 L1198.91 722.23 L1195.97 723.35 L1192.85 724.43Z" fill="#4a90d5"/><path d="M1115.66 539.94 L1115.73 539.94 L1115.80 539.94 L1115.87 539.94 L1115.94 539.94 L1115.84 544.57 L1115.66 544.57 L1115.48 544.57 L1115.29 544.57 L1115.11 544.57Z" fill="#a9c9d6"/><path d="M1126.95 752.56 L1130.45 752.40 L1133.93 752.21 L1137.37 751.96 L1140.78 751.68 L1136.54 759.79 L1133.71 760.03 L1130.86 760.23 L1127.98 760.39 L1125.08 760.52Z" fill="#a9c9d6"/><path d="M1016.39 602.33 L1017.64 603.69 L1019.12 605.03 L1020.81 606.35 L1022.71 607.64 L1015.44 625.37 L1013.40 623.97 L1011.58 622.55 L1009.99 621.11 L1008.63 619.64Z" fill="#4a90d5"/><path d="M1069.51 551.19 L1069.98 551.66 L1070.50 552.13 L1071.09 552.60 L1071.73 553.06 L1056.23 563.90 L1055.37 563.28 L1054.58 562.65 L1053.87 562.02 L1053.23 561.37Z" fill="#4a90d5"/><path d="M1106.58 752.61 L1110.10 752.71 L1113.64 752.76 L1117.18 752.77 L1120.72 752.73 L1119.91 760.66 L1116.98 760.69 L1114.04 760.68 L1111.11 760.64 L1108.19 760.56Z" fill="#e3bb5e"/><path d="M1172.93 733.20 L1176.58 732.42 L1180.11 731.60 L1183.50 730.73 L1186.76 729.81 L1178.65 742.25 L1175.76 743.06 L1172.76 743.83 L1169.63 744.56 L1166.40 745.25Z" fill="#4a90d5"/><path d="M1215.34 632.50 L1217.74 631.09 L1219.91 629.65 L1221.84 628.18 L1223.53 626.69 L1227.45 645.03 L1225.70 646.58 L1223.70 648.10 L1221.46 649.59 L1218.97 651.05Z" fill="#e3bb5e"/><path d="M1030.48 581.92 L1031.53 583.04 L1032.75 584.15 L1034.14 585.24 L1035.70 586.31 L1025.22 602.47 L1023.45 601.25 L1021.88 600.02 L1020.50 598.77 L1019.31 597.50Z" fill="#e3bb5e"/><path d="M1048.46 564.62 L1049.24 565.44 L1050.14 566.25 L1051.15 567.05 L1052.28 567.84 L1039.02 581.67 L1037.66 580.72 L1036.43 579.75 L1035.35 578.77 L1034.40 577.78Z" fill="#d5e6eb"/><path d="M1095.05 543.76 L1095.28 543.87 L1095.52 543.98 L1095.76 544.09 L1096.00 544.19 L1080.91 552.58 L1080.47 552.40 L1080.05 552.21 L1079.64 552.02 L1079.24 551.83Z" fill="#4a90d5"/><path d="M1159.14 553.77 L1159.87 553.32 L1160.54 552.87 L1161.16 552.41 L1161.72 551.94 L1177.72 562.39 L1176.96 563.02 L1176.13 563.64 L1175.22 564.26 L1174.24 564.86Z" fill="#4a90d5"/><path d="M1135.18 544.51 L1135.45 544.41 L1135.71 544.31 L1135.97 544.21 L1136.21 544.10 L1151.47 552.42 L1151.04 552.60 L1150.59 552.79 L1150.13 552.97 L1149.66 553.14Z" fill="#a9c9d6"/><path d="M1012.67 680.22 L1015.36 681.64 L1018.29 683.03 L1021.45 684.38 L1024.82 685.68 L1027.98 702.95 L1024.72 701.70 L1021.68 700.40 L1018.85 699.05 L1016.25 697.68Z" fill="#e3bb5e"/><path d="M1206.77 609.15 L1208.91 607.88 L1210.85 606.59 L1212.58 605.28 L1214.09 603.94 L1221.73 621.38 L1220.10 622.82 L1218.23 624.24 L1216.15 625.63 L1213.84 626.99Z" fill="#4a90d5"/><path d="M1178.04 568.86 L1179.31 568.10 L1180.48 567.32 L1181.53 566.52 L1182.47 565.71 L1196.30 579.10 L1195.17 580.07 L1193.90 581.04 L1192.49 581.98 L1190.95 582.91Z" fill="#a9c9d6"/><path d="M1194.15 587.61 L1195.91 586.56 L1197.51 585.50 L1198.94 584.41 L1200.20 583.31 L1211.19 599.07 L1209.77 600.31 L1208.15 601.54 L1206.34 602.75 L1204.35 603.93Z" fill="#a9c9d6"/><path d="M1098.67 545.12 L1098.98 545.21 L1099.30 545.30 L1099.62 545.39 L1099.94 545.47 L1087.82 554.83 L1087.25 554.68 L1086.68 554.53 L1086.13 554.37 L1085.58 554.22Z" fill="#a9c9d6"/><path d="M1131.00 545.73 L1131.35 545.65 L1131.68 545.57 L1132.02 545.48 L1132.34 545.40 L1144.68 554.70 L1144.11 554.85 L1143.52 554.99 L1142.93 555.13 L1142.33 555.27Z" fill="#a9c9d6"/><path d="M1202.99 687.14 L1206.60 685.89 L1210.01 684.60 L1213.20 683.26 L1216.17 681.88 L1212.70 699.28 L1209.83 700.61 L1206.75 701.91 L1203.47 703.16 L1199.98 704.36Z" fill="#a9c9d6"/><path d="M1059.47 733.28 L1063.25 734.00 L1067.14 734.68 L1071.13 735.30 L1075.21 735.86 L1079.88 747.61 L1076.27 747.11 L1072.74 746.56 L1069.30 745.96 L1065.96 745.32Z" fill="#d5e6eb"/><path d="M1073.87 554.33 L1074.71 554.76 L1075.61 555.18 L1076.56 555.59 L1077.55 555.99 L1064.10 567.86 L1062.75 567.32 L1061.48 566.77 L1060.27 566.20 L1059.12 565.62Z" fill="#a9c9d6"/><path d="M1033.06 709.13 L1036.60 710.24 L1040.31 711.31 L1044.19 712.32 L1048.23 713.28 L1053.08 728.23 L1049.33 727.34 L1045.73 726.40 L1042.28 725.41 L1039.00 724.38Z" fill="#4a90d5"/><path d="M1151.64 736.49 L1155.82 735.99 L1159.92 735.43 L1163.93 734.83 L1167.84 734.17 L1161.90 746.11 L1158.43 746.69 L1154.88 747.23 L1151.26 747.72 L1147.55 748.16Z" fill="#4a90d5"/><path d="M1103.29 546.19 L1103.67 546.26 L1104.05 546.32 L1104.43 546.38 L1104.82 546.44 L1096.38 556.53 L1095.70 556.42 L1095.02 556.31 L1094.36 556.20 L1093.70 556.09Z" fill="#4a90d5"/><path d="M1012.13 656.40 L1014.86 657.85 L1017.82 659.25 L1021.01 660.61 L1024.41 661.93 L1024.39 680.35 L1020.98 679.03 L1017.79 677.67 L1014.83 676.26 L1012.10 674.82Z" fill="#4a90d5"/><path d="M1125.95 546.61 L1126.35 546.56 L1126.74 546.50 L1127.14 546.45 L1127.52 546.39 L1136.22 556.43 L1135.54 556.54 L1134.86 556.64 L1134.16 556.74 L1133.47 556.83Z" fill="#4a90d5"/><path d="M1152.77 556.61 L1153.84 556.22 L1154.86 555.83 L1155.84 555.42 L1156.76 555.01 L1171.03 566.54 L1169.78 567.09 L1168.46 567.64 L1167.08 568.17 L1165.63 568.69Z" fill="#4a90d5"/><path d="M1108.65 546.90 L1109.07 546.94 L1109.49 546.97 L1109.92 547.01 L1110.34 547.04 L1106.07 557.58 L1105.32 557.52 L1104.58 557.46 L1103.84 557.40 L1103.11 557.34Z" fill="#a9c9d6"/><path d="M1178.78 714.35 L1182.99 713.46 L1187.06 712.51 L1190.97 711.50 L1194.71 710.45 L1189.08 725.60 L1185.60 726.58 L1181.97 727.51 L1178.20 728.39 L1174.28 729.22Z" fill="#4a90d5"/><path d="M1120.32 547.12 L1120.75 547.10 L1121.18 547.07 L1121.61 547.04 L1122.03 547.01 L1126.59 557.53 L1125.84 557.58 L1125.09 557.63 L1124.34 557.68 L1123.59 557.72Z" fill="#d5e6eb"/><path d="M1114.44 547.22 L1114.88 547.22 L1115.32 547.23 L1115.76 547.23 L1116.19 547.23 L1116.34 557.92 L1115.57 557.92 L1114.80 557.91 L1114.04 557.90 L1113.27 557.89Z" fill="#a9c9d6"/><path d="M1054.56 569.20 L1055.99 569.94 L1057.53 570.67 L1059.17 571.37 L1060.91 572.05 L1049.45 586.76 L1047.35 585.93 L1045.37 585.08 L1043.51 584.21 L1041.78 583.31Z" fill="#e3bb5e"/><path d="M1203.37 663.39 L1207.02 662.13 L1210.47 660.82 L1213.69 659.47 L1216.69 658.07 L1216.72 676.49 L1213.72 677.89 L1210.49 679.24 L1207.05 680.55 L1203.40 681.81Z" fill="#a9c9d6"/><path d="M1080.82 736.54 L1085.08 736.97 L1089.40 737.35 L1093.78 737.68 L1098.20 737.94 L1100.25 749.45 L1096.33 749.21 L1092.45 748.93 L1088.63 748.59 L1084.85 748.21Z" fill="#4a90d5"/><path d="M1016.35 632.33 L1018.95 633.71 L1021.78 635.05 L1024.82 636.35 L1028.07 637.60 L1024.86 656.34 L1021.49 655.04 L1018.34 653.69 L1015.41 652.30 L1012.72 650.88Z" fill="#4a90d5"/><path d="M1128.28 738.19 L1132.75 738.00 L1137.18 737.74 L1141.57 737.44 L1145.91 737.07 L1142.48 748.68 L1138.64 749.00 L1134.75 749.27 L1130.83 749.50 L1126.87 749.67Z" fill="#a9c9d6"/><path d="M1168.62 572.93 L1170.48 572.28 L1172.26 571.60 L1173.93 570.90 L1175.50 570.19 L1187.88 584.50 L1185.98 585.37 L1183.96 586.21 L1181.82 587.03 L1179.57 587.82Z" fill="#e3bb5e"/><path d="M1038.06 587.72 L1040.00 588.74 L1042.09 589.73 L1044.34 590.69 L1046.73 591.62 L1037.68 608.47 L1034.98 607.42 L1032.44 606.33 L1030.08 605.21 L1027.89 604.06Z" fill="#d5e6eb"/><path d="M1080.68 557.08 L1081.85 557.44 L1083.07 557.78 L1084.32 558.12 L1085.61 558.44 L1074.98 571.16 L1073.23 570.73 L1071.54 570.28 L1069.90 569.82 L1068.32 569.33Z" fill="#e3bb5e"/><path d="M1104.21 738.20 L1108.70 738.33 L1113.21 738.40 L1117.73 738.40 L1122.24 738.35 L1121.52 749.81 L1117.53 749.86 L1113.53 749.85 L1109.54 749.79 L1105.56 749.68Z" fill="#e3bb5e"/><path d="M1025.13 609.09 L1027.46 610.32 L1029.99 611.52 L1032.71 612.68 L1035.62 613.81 L1029.36 632.01 L1026.23 630.80 L1023.30 629.55 L1020.57 628.26 L1018.05 626.93Z" fill="#4a90d5"/><path d="M1144.25 558.91 L1145.60 558.62 L1146.92 558.31 L1148.20 557.98 L1149.44 557.64 L1161.14 570.09 L1159.47 570.55 L1157.74 570.98 L1155.97 571.40 L1154.14 571.81Z" fill="#4a90d5"/><path d="M1199.89 639.00 L1203.37 637.80 L1206.66 636.56 L1209.73 635.27 L1212.59 633.93 L1216.12 652.54 L1213.15 653.92 L1209.97 655.26 L1206.56 656.55 L1202.95 657.79Z" fill="#4a90d5"/><path d="M1028.56 686.99 L1032.35 688.19 L1036.33 689.33 L1040.49 690.42 L1044.83 691.45 L1047.29 708.52 L1043.11 707.53 L1039.09 706.48 L1035.24 705.37 L1031.59 704.21Z" fill="#a9c9d6"/><path d="M1182.12 592.73 L1184.69 591.84 L1187.11 590.92 L1189.39 589.96 L1191.52 588.98 L1201.38 605.48 L1198.97 606.59 L1196.39 607.67 L1193.65 608.71 L1190.75 609.72Z" fill="#e3bb5e"/><path d="M1192.70 615.09 L1195.81 614.02 L1198.75 612.90 L1201.51 611.74 L1204.07 610.55 L1210.93 628.50 L1208.16 629.79 L1205.19 631.03 L1202.03 632.24 L1198.67 633.40Z" fill="#d5e6eb"/><path d="M1053.02 714.31 L1057.37 715.14 L1061.84 715.92 L1066.44 716.63 L1071.14 717.28 L1074.36 731.94 L1069.99 731.34 L1065.72 730.68 L1061.56 729.96 L1057.53 729.18Z" fill="#d5e6eb"/><path d="M1181.91 692.57 L1186.44 691.61 L1190.80 690.59 L1195.00 689.52 L1199.01 688.38 L1196.13 705.56 L1192.26 706.65 L1188.21 707.69 L1184.00 708.68 L1179.63 709.60Z" fill="#a9c9d6"/><path d="M1089.54 559.28 L1090.97 559.54 L1092.43 559.79 L1093.92 560.03 L1095.44 560.24 L1088.25 573.60 L1086.20 573.30 L1084.19 572.99 L1082.21 572.65 L1080.28 572.29Z" fill="#4a90d5"/><path d="M1155.14 717.97 L1159.96 717.39 L1164.68 716.76 L1169.30 716.06 L1173.80 715.29 L1169.66 730.10 L1165.49 730.81 L1161.20 731.46 L1156.81 732.05 L1152.33 732.58Z" fill="#a9c9d6"/><path d="M1134.09 560.56 L1135.65 560.37 L1137.18 560.16 L1138.69 559.93 L1140.17 559.69 L1148.63 572.85 L1146.63 573.18 L1144.60 573.48 L1142.53 573.76 L1140.43 574.03Z" fill="#a9c9d6"/><path d="M1064.24 573.22 L1066.24 573.84 L1068.32 574.43 L1070.49 575.00 L1072.74 575.55 L1063.74 590.98 L1061.02 590.32 L1058.40 589.63 L1055.88 588.91 L1053.47 588.16Z" fill="#4a90d5"/><path d="M1028.09 663.21 L1031.92 664.42 L1035.94 665.58 L1040.15 666.68 L1044.53 667.71 L1044.51 686.14 L1040.13 685.10 L1035.92 684.00 L1031.89 682.84 L1028.06 681.63Z" fill="#d5e6eb"/><path d="M1099.94 560.79 L1101.55 560.94 L1103.17 561.08 L1104.81 561.21 L1106.46 561.31 L1103.13 575.04 L1100.89 574.90 L1098.68 574.73 L1096.49 574.54 L1094.32 574.33Z" fill="#d5e6eb"/><path d="M1156.14 576.23 L1158.49 575.72 L1160.76 575.19 L1162.96 574.63 L1165.07 574.04 L1175.29 589.16 L1172.73 589.87 L1170.08 590.55 L1167.33 591.19 L1164.49 591.80Z" fill="#e3bb5e"/><path d="M1122.89 561.45 L1124.56 561.37 L1126.22 561.27 L1127.86 561.16 L1129.50 561.03 L1134.22 574.66 L1132.02 574.83 L1129.79 574.99 L1127.55 575.12 L1125.30 575.22Z" fill="#a9c9d6"/><path d="M1111.28 561.52 L1112.96 561.56 L1114.66 561.59 L1116.35 561.59 L1118.04 561.58 L1118.75 575.40 L1116.47 575.42 L1114.18 575.41 L1111.90 575.38 L1109.63 575.33Z" fill="#4a90d5"/><path d="M1076.63 717.94 L1081.54 718.45 L1086.52 718.89 L1091.57 719.26 L1096.67 719.56 L1098.05 734.06 L1093.31 733.78 L1088.63 733.44 L1084.00 733.03 L1079.45 732.56Z" fill="#4a90d5"/><path d="M1129.22 719.82 L1134.37 719.61 L1139.48 719.32 L1144.54 718.96 L1149.53 718.54 L1147.13 733.11 L1142.49 733.51 L1137.80 733.84 L1133.05 734.11 L1128.27 734.31Z" fill="#d5e6eb"/><path d="M1182.18 668.84 L1186.75 667.87 L1191.17 666.85 L1195.40 665.76 L1199.46 664.61 L1199.48 683.03 L1195.43 684.18 L1191.19 685.27 L1186.77 686.30 L1182.20 687.26Z" fill="#4a90d5"/><path d="M1050.18 592.83 L1052.89 593.68 L1055.73 594.49 L1058.70 595.27 L1061.78 596.01 L1054.70 613.42 L1051.22 612.59 L1047.87 611.71 L1044.65 610.79 L1041.58 609.83Z" fill="#a9c9d6"/><path d="M1031.68 638.86 L1035.33 640.02 L1039.17 641.12 L1043.18 642.17 L1047.37 643.16 L1044.86 662.10 L1040.53 661.07 L1036.36 659.99 L1032.38 658.84 L1028.60 657.65Z" fill="#e3bb5e"/><path d="M1102.54 719.82 L1107.71 719.97 L1112.91 720.04 L1118.11 720.05 L1123.31 719.99 L1122.79 734.46 L1117.96 734.52 L1113.13 734.51 L1108.31 734.44 L1103.50 734.30Z" fill="#a9c9d6"/><path d="M1049.53 692.45 L1054.19 693.35 L1058.99 694.18 L1063.92 694.95 L1068.98 695.64 L1070.61 712.57 L1065.73 711.90 L1060.96 711.16 L1056.33 710.36 L1051.83 709.49Z" fill="#d5e6eb"/><path d="M1039.15 615.04 L1042.43 616.08 L1045.87 617.06 L1049.46 618.00 L1053.20 618.89 L1048.31 637.49 L1044.28 636.54 L1040.41 635.52 L1036.70 634.46 L1033.17 633.35Z" fill="#4a90d5"/><path d="M1166.25 596.86 L1169.47 596.18 L1172.58 595.45 L1175.58 594.68 L1178.45 593.88 L1186.60 611.01 L1183.35 611.93 L1179.97 612.79 L1176.45 613.61 L1172.81 614.39Z" fill="#e3bb5e"/><path d="M1076.92 576.44 L1079.37 576.90 L1081.89 577.34 L1084.46 577.74 L1087.09 578.11 L1081.07 594.07 L1077.89 593.63 L1074.79 593.14 L1071.75 592.62 L1068.79 592.06Z" fill="#4a90d5"/><path d="M1157.00 696.36 L1162.18 695.75 L1167.25 695.07 L1172.20 694.31 L1177.03 693.49 L1174.91 710.49 L1170.26 711.29 L1165.47 712.01 L1160.58 712.67 L1155.58 713.26Z" fill="#a9c9d6"/><path d="M1179.56 644.24 L1183.93 643.32 L1188.13 642.34 L1192.18 641.30 L1196.05 640.20 L1198.97 659.04 L1194.96 660.17 L1190.77 661.25 L1186.41 662.26 L1181.88 663.22Z" fill="#4a90d5"/><path d="M1141.33 578.55 L1144.02 578.22 L1146.67 577.87 L1149.26 577.47 L1151.79 577.05 L1159.24 592.80 L1156.18 593.31 L1153.05 593.78 L1149.85 594.21 L1146.60 594.61Z" fill="#4a90d5"/><path d="M1174.17 619.88 L1178.08 619.05 L1181.85 618.17 L1185.47 617.24 L1188.93 616.27 L1194.61 634.66 L1190.87 635.72 L1186.97 636.72 L1182.91 637.67 L1178.70 638.56Z" fill="#e3bb5e"/><path d="M1091.88 578.68 L1094.64 578.96 L1097.43 579.21 L1100.26 579.42 L1103.11 579.59 L1100.43 595.87 L1096.98 595.65 L1093.56 595.40 L1090.19 595.11 L1086.86 594.77Z" fill="#4a90d5"/><path d="M1049.15 668.70 L1053.86 669.61 L1058.71 670.45 L1063.70 671.23 L1068.81 671.93 L1068.79 690.35 L1063.68 689.65 L1058.70 688.88 L1053.84 688.03 L1049.13 687.12Z" fill="#a9c9d6"/><path d="M1125.04 579.77 L1127.93 579.64 L1130.79 579.48 L1133.63 579.28 L1136.43 579.05 L1140.68 595.21 L1137.29 595.49 L1133.87 595.73 L1130.41 595.93 L1126.93 596.08Z" fill="#a9c9d6"/><path d="M1074.36 696.29 L1079.62 696.84 L1084.97 697.31 L1090.38 697.71 L1095.86 698.03 L1096.55 714.87 L1091.27 714.56 L1086.04 714.18 L1080.88 713.72 L1075.80 713.19Z" fill="#d5e6eb"/><path d="M1066.12 596.94 L1069.45 597.57 L1072.88 598.17 L1076.39 598.71 L1079.99 599.21 L1075.29 617.05 L1071.22 616.48 L1067.25 615.86 L1063.37 615.19 L1059.60 614.47Z" fill="#d5e6eb"/><path d="M1108.24 579.82 L1111.14 579.89 L1114.05 579.94 L1116.97 579.94 L1119.88 579.91 L1120.69 596.25 L1117.17 596.29 L1113.65 596.28 L1110.13 596.23 L1106.62 596.14Z" fill="#4a90d5"/><path d="M1129.71 698.30 L1135.23 698.07 L1140.72 697.76 L1146.14 697.38 L1151.50 696.92 L1150.27 713.80 L1145.10 714.25 L1139.86 714.62 L1134.57 714.91 L1129.23 715.14Z" fill="#d5e6eb"/><path d="M1157.14 672.65 L1162.37 672.03 L1167.50 671.34 L1172.50 670.58 L1177.38 669.75 L1177.40 688.17 L1172.52 689.00 L1167.51 689.76 L1162.38 690.45 L1157.15 691.07Z" fill="#4a90d5"/><path d="M1147.46 599.76 L1151.15 599.32 L1154.76 598.83 L1158.30 598.30 L1161.75 597.72 L1167.72 615.36 L1163.82 616.01 L1159.83 616.62 L1155.74 617.17 L1151.57 617.67Z" fill="#d5e6eb"/><path d="M1101.62 698.28 L1107.17 698.44 L1112.75 698.53 L1118.33 698.53 L1123.91 698.46 L1123.63 715.29 L1118.25 715.36 L1112.86 715.35 L1107.48 715.27 L1102.11 715.11Z" fill="#4a90d5"/><path d="M1051.90 644.13 L1056.39 645.00 L1061.02 645.80 L1065.78 646.54 L1070.65 647.21 L1069.00 666.29 L1063.95 665.60 L1059.02 664.84 L1054.22 664.00 L1049.56 663.11Z" fill="#d5e6eb"/><path d="M1057.64 619.84 L1061.67 620.62 L1065.82 621.33 L1070.07 622.00 L1074.43 622.60 L1071.20 641.49 L1066.50 640.84 L1061.91 640.13 L1057.44 639.35 L1053.10 638.52Z" fill="#a9c9d6"/><path d="M1155.54 647.90 L1160.53 647.31 L1165.42 646.65 L1170.20 645.93 L1174.85 645.13 L1177.00 664.15 L1172.18 664.97 L1167.22 665.72 L1162.16 666.40 L1156.98 667.01Z" fill="#d5e6eb"/><path d="M1152.27 623.23 L1156.73 622.70 L1161.11 622.11 L1165.39 621.46 L1169.56 620.76 L1173.73 639.50 L1169.23 640.27 L1164.62 640.97 L1159.91 641.60 L1155.09 642.17Z" fill="#e3bb5e"/><path d="M1084.96 599.81 L1088.71 600.19 L1092.53 600.53 L1096.39 600.81 L1100.29 601.05 L1098.24 619.12 L1093.83 618.86 L1089.46 618.54 L1085.15 618.16 L1080.90 617.72Z" fill="#a9c9d6"/><path d="M1074.10 672.56 L1079.41 673.12 L1084.82 673.59 L1090.29 674.00 L1095.82 674.32 L1095.82 692.74 L1090.28 692.42 L1084.81 692.02 L1079.40 691.54 L1074.09 690.99Z" fill="#d5e6eb"/><path d="M1126.85 601.26 L1130.79 601.10 L1134.70 600.87 L1138.57 600.60 L1142.39 600.28 L1145.84 618.25 L1141.51 618.62 L1137.14 618.93 L1132.72 619.18 L1128.26 619.37Z" fill="#e3bb5e"/><path d="M1129.71 674.60 L1135.29 674.36 L1140.84 674.05 L1146.32 673.66 L1151.73 673.20 L1151.74 691.62 L1146.33 692.09 L1140.84 692.48 L1135.30 692.79 L1129.71 693.02Z" fill="#a9c9d6"/><path d="M1105.60 601.28 L1109.56 601.39 L1113.54 601.45 L1117.52 601.46 L1121.50 601.41 L1122.22 619.53 L1117.72 619.58 L1113.22 619.58 L1108.72 619.51 L1104.24 619.39Z" fill="#4a90d5"/><path d="M1101.48 674.57 L1107.10 674.73 L1112.73 674.82 L1118.37 674.82 L1124.01 674.75 L1124.01 693.17 L1118.37 693.25 L1112.73 693.24 L1107.09 693.16 L1101.48 692.99Z" fill="#4a90d5"/><path d="M1079.53 623.21 L1084.07 623.68 L1088.68 624.09 L1093.36 624.43 L1098.08 624.71 L1096.69 643.76 L1091.59 643.46 L1086.56 643.09 L1081.58 642.65 L1076.69 642.15Z" fill="#d5e6eb"/><path d="M1075.85 647.83 L1080.92 648.36 L1086.07 648.81 L1091.29 649.20 L1096.57 649.51 L1095.86 668.68 L1090.39 668.36 L1084.98 667.96 L1079.64 667.49 L1074.38 666.94Z" fill="#a9c9d6"/><path d="M1128.25 624.95 L1133.02 624.75 L1137.76 624.49 L1142.44 624.16 L1147.07 623.76 L1149.48 642.74 L1144.50 643.17 L1139.45 643.52 L1134.35 643.81 L1129.21 644.03Z" fill="#d5e6eb"/><path d="M1129.22 649.77 L1134.55 649.55 L1139.83 649.25 L1145.07 648.88 L1150.23 648.44 L1151.48 667.57 L1146.13 668.03 L1140.70 668.42 L1135.22 668.72 L1129.70 668.95Z" fill="#4a90d5"/><path d="M1103.53 624.95 L1108.32 625.09 L1113.14 625.16 L1117.96 625.16 L1122.77 625.10 L1123.30 644.19 L1118.11 644.25 L1112.91 644.25 L1107.73 644.17 L1102.56 644.02Z" fill="#d5e6eb"/><path d="M1102.13 649.75 L1107.49 649.91 L1112.86 649.99 L1118.25 649.99 L1123.62 649.92 L1123.90 669.11 L1118.33 669.18 L1112.75 669.18 L1107.18 669.09 L1101.62 668.93Z" fill="#e3bb5e"/><path d="M991 532 Q992.6 550.4 1011 552 Q992.6 553.6 991 572 Q989.4 553.6 971 552 Q989.4 550.4 991 532Z" fill="#4a90d5"/><path d="M1252.8 509.75 Q1253.9199999999998 522.63 1266.8 523.75 Q1253.9199999999998 524.87 1252.8 537.75 Q1251.68 524.87 1238.8 523.75 Q1251.68 522.63 1252.8 509.75Z" fill="#4a90d5"/><path d="M1233.4 554.5 Q1234.16 563.24 1242.9 564 Q1234.16 564.76 1233.4 573.5 Q1232.64 564.76 1223.9 564 Q1232.64 563.24 1233.4 554.5Z" fill="#4a90d5"/><path d="M985 715.7 Q986.52 733.1800000000001 1004 734.7 Q986.52 736.22 985 753.7 Q983.48 736.22 966 734.7 Q983.48 733.1800000000001 985 715.7Z" fill="#4a90d5"/><path d="M948 607 Q948.88 617.12 959 618 Q948.88 618.88 948 629 Q947.12 618.88 937 618 Q947.12 617.12 948 607Z" fill="#ffffff"/><path d="M949.7 648.7 Q950.58 658.82 960.7 659.7 Q950.58 660.58 949.7 670.7 Q948.82 660.58 938.7 659.7 Q948.82 658.82 949.7 648.7Z" fill="#ffffff"/><path d="M988.75 591.5 Q989.11 595.64 993.25 596 Q989.11 596.36 988.75 600.5 Q988.39 596.36 984.25 596 Q988.39 595.64 988.75 591.5Z" fill="#ffffff"/><path d="M984 696 Q984.32 699.68 988 700 Q984.32 700.32 984 704 Q983.68 700.32 980 700 Q983.68 699.68 984 696Z" fill="#ffffff"/><path d="M1260.6 662 Q1261.8799999999999 676.72 1276.6 678 Q1261.8799999999999 679.28 1260.6 694 Q1259.32 679.28 1244.6 678 Q1259.32 676.72 1260.6 662Z" fill="#ffffff"/><path d="M1202.8 745.6 Q1203.68 755.72 1213.8 756.6 Q1203.68 757.48 1202.8 767.6 Q1201.9199999999998 757.48 1191.8 756.6 Q1201.9199999999998 755.72 1202.8 745.6Z" fill="#ffffff"/><path d="M1158 777 Q1158.48 782.52 1164 783 Q1158.48 783.48 1158 789 Q1157.52 783.48 1152 783 Q1157.52 782.52 1158 777Z" fill="#ffffff"/><text x="951.2" y="838.3" font-size="37" font-weight="bold" fill="#ffffff" font-family="Liberation Sans" textLength="46.2" lengthAdjust="spacingAndGlyphs">OUR</text><text x="1004.2" y="838.3" font-size="37" font-weight="bold" fill="#ffffff" font-family="Liberation Sans" textLength="97.7" lengthAdjust="spacingAndGlyphs">KITCHEN</text><text x="1109.2" y="838.3" font-size="37" font-weight="bold" fill="#ffffff" font-family="Liberation Sans" textLength="20.2" lengthAdjust="spacingAndGlyphs">IS</text><text x="1135.7" y="838.3" font-size="37" font-weight="bold" fill="#ffffff" font-family="Liberation Sans" textLength="43.7" lengthAdjust="spacingAndGlyphs">FOR</text><text x="1186.2" y="838.3" font-size="37" font-weight="bold" fill="#ffffff" font-family="Liberation Sans" textLength="108.2" lengthAdjust="spacingAndGlyphs">DANCING</text></g></svg>
<svg width="1280" height="1280"><circle cx="19.5" cy="72.5" r="7.6" fill="#fe5f57" stroke="#d94b43" stroke-width="0.6"/><circle cx="19.5" cy="72.5" r="2.3" fill="#6b0a04"/><circle cx="45.5" cy="72.5" r="7.6" fill="#febc2e" stroke="#d9a126" stroke-width="0.6"/><circle cx="71.5" cy="72.5" r="7.6" fill="#28c840" stroke="#1ea832" stroke-width="0.6"/><path d="M110.5 62 L99 72.5 L102.5 72.5 L102.5 82 L108 82 L108 76 L113 76 L113 82 L118.5 82 L118.5 72.5 L122 72.5Z" fill="#c4c4c4"/><rect x="137" y="60" width="1" height="25" fill="#464646"/><path d="M38.6 22.2c-.03-2.6 2.12-3.85 2.22-3.9-1.2-1.77-3.08-2.01-3.75-2.04-1.6-.16-3.12.94-3.93.94-.81 0-2.06-.92-3.39-.89-1.74.03-3.35 1.01-4.25 2.57-1.81 3.15-.46 7.8 1.3 10.35.86 1.25 1.89 2.65 3.24 2.6 1.3-.05 1.79-.84 3.36-.84 1.57 0 2.01.84 3.38.81 1.4-.02 2.29-1.27 3.14-2.52.99-1.45 1.4-2.85 1.42-2.92-.03-.01-2.72-1.05-2.74-4.16zM36.02 14.56c.72-.87 1.2-2.08 1.07-3.28-1.03.04-2.28.69-3.02 1.56-.66.77-1.24 2-1.09 3.18 1.15.09 2.32-.58 3.04-1.46z" fill="#f4f1ec"/></svg>
<div class="t" style="left:70px;top:15.6px;font-size:17.5px;color:#f7f4ef;font-weight:bold;letter-spacing:0px;">Illustrator</div>
<div class="t" style="left:181px;top:15.6px;font-size:17.5px;color:#f7f4ef;font-weight:normal;letter-spacing:0px;">File</div>
<div class="t" style="left:235px;top:15.6px;font-size:17.5px;color:#f7f4ef;font-weight:normal;letter-spacing:0px;">Edit</div>
<div class="t" style="left:293px;top:15.6px;font-size:17.5px;color:#f7f4ef;font-weight:normal;letter-spacing:0px;">Object</div>
<div class="t" style="left:372px;top:15.6px;font-size:17.5px;color:#f7f4ef;font-weight:normal;letter-spacing:0px;">Type</div>
<div class="t" style="left:437px;top:15.6px;font-size:17.5px;color:#f7f4ef;font-weight:normal;letter-spacing:0px;">Select</div>
<div class="t" style="left:514px;top:15.6px;font-size:17.5px;color:#f7f4ef;font-weight:normal;letter-spacing:0px;">Effect</div>
<div class="t" style="left:587px;top:15.6px;font-size:17.5px;color:#f7f4ef;font-weight:normal;letter-spacing:0px;">View</div>
<div class="t" style="left:652px;top:15.6px;font-size:17.5px;color:#f7f4ef;font-weight:normal;letter-spacing:0px;">Window</div>
<div class="t" style="left:742px;top:15.6px;font-size:17.5px;color:#f7f4ef;font-weight:normal;letter-spacing:0px;">Help</div>
<div class="t" style="left:910.5px;top:64px;font-size:16.5px;color:#d4d4d4;font-weight:normal;letter-spacing:0.42px;">Adobe Illustrator 2023</div>
<svg width="1280" height="1280"><path d="M8 104 L8 129" stroke="#383838" stroke-width="2.2" stroke-dasharray="1 1.4"/><rect x="130" y="100" width="1" height="32" fill="#4a4a4a"/><rect x="144" y="104" width="49" height="25" rx="2" fill="#4a4a4a"/><rect x="144" y="104" width="26" height="25" fill="#ffffff"/><path d="M177.5 114.5 L181.5 118.5 L185.5 114.5" fill="none" stroke="#e0e0e0" stroke-width="1.5"/><rect x="201" y="104" width="50" height="25" rx="2" fill="#4a4a4a"/><rect x="202" y="104.5" width="24.5" height="24" fill="#1c1c1c" stroke="#d8d8d8" stroke-width="1"/><rect x="209" y="111" width="10" height="10" fill="none" stroke="#e8e8e8" stroke-width="1.6"/><rect x="212" y="114" width="4" height="4" fill="#e8e8e8"/><path d="M235 114.5 L239 118.5 L243 114.5" fill="none" stroke="#e0e0e0" stroke-width="1.5"/><path d="M268 126.5 L311 126.5" stroke="#bdbdbd" stroke-width="1" stroke-dasharray="1 1"/><rect x="319" y="104" width="113" height="25" rx="2" fill="#4a4a4a"/><rect x="341" y="104" width="67" height="25" fill="#444444"/><path d="M326 113 L330 109 L334 113 M326 120 L330 124 L334 120" fill="none" stroke="#d8d8d8" stroke-width="1.3"/><path d="M415 114.5 L419 118.5 L423 114.5" fill="none" stroke="#e0e0e0" stroke-width="1.5"/><rect x="440" y="104" width="140" height="25" rx="2" fill="#4a4a4a"/><rect x="440.5" y="104" width="116" height="25" fill="#e3e3e3"/><rect x="449" y="116" width="45" height="2" fill="#1a1a1a"/><path d="M565 114.5 L569 118.5 L573 114.5" fill="none" stroke="#e0e0e0" stroke-width="1.5"/><rect x="589" y="104" width="136" height="25" rx="2" fill="#4a4a4a"/><rect x="589" y="104" width="113" height="25" fill="#e3e3e3"/><circle cx="602" cy="116.5" r="3" fill="#1a1a1a"/><path d="M710 114.5 L714 118.5 L718 114.5" fill="none" stroke="#e0e0e0" stroke-width="1.5"/><path d="M736 126.5 L787 126.5" stroke="#bdbdbd" stroke-width="1" stroke-dasharray="1 1"/><rect x="795" y="104" width="100" height="25" rx="2" fill="#4a4a4a"/><rect x="795" y="104" width="76" height="25" fill="#444444"/><path d="M880 112.5 L884 116.5 L880 120.5" fill="none" stroke="#e0e0e0" stroke-width="1.5"/><rect x="944" y="104" width="48" height="25" rx="2" fill="#4a4a4a"/><rect x="944" y="104" width="25" height="25" fill="#e6e6e6"/><path d="M977 114.5 L981 118.5 L985 114.5" fill="none" stroke="#e0e0e0" stroke-width="1.5"/><rect x="1000" y="102" width="1" height="29" fill="#474747"/><rect x="1009.5" y="104.5" width="129" height="24" rx="2.5" fill="#535353" stroke="#6e6e6e" stroke-width="1"/><rect x="1146.5" y="104.5" width="98" height="24" rx="2.5" fill="#535353" stroke="#6e6e6e" stroke-width="1"/><path d="M1258 110 L1258 124 M1256 112 L1264 112 M1256 122 L1262 122" stroke="#cfcfcf" stroke-width="1.2" fill="none"/><rect x="1264" y="106" width="8" height="7" fill="none" stroke="#cfcfcf" stroke-width="1.2"/><path d="M1266 114 L1278 124 L1272 124 L1268 129Z" fill="#cfcfcf"/></svg>
<div class="t" style="left:19.8px;top:109.5px;font-size:13.75px;color:#d8d8d8;font-weight:normal;letter-spacing:0px;">No Selection</div>
<div class="t" style="left:267.5px;top:109.5px;font-size:13.75px;color:#e6e6e6;font-weight:normal;letter-spacing:0px;">Stroke:</div>
<div class="t" style="left:348px;top:109.5px;font-size:13.75px;color:#ececec;font-weight:normal;letter-spacing:0px;">1 pt</div>
<div class="t" style="left:499.6px;top:109.5px;font-size:14.3px;color:#1a1a1a;font-weight:normal;letter-spacing:0px;">Uniform</div>
<div class="t" style="left:621px;top:109.5px;font-size:14.1px;color:#1a1a1a;font-weight:normal;letter-spacing:0px;">5 pt. Round</div>
<div class="t" style="left:736.6px;top:109.5px;font-size:13.75px;color:#e6e6e6;font-weight:normal;letter-spacing:0px;">Opacity:</div>
<div class="t" style="left:801px;top:109.5px;font-size:13.3px;color:#ececec;font-weight:normal;letter-spacing:-0.35px;">100%</div>
<div class="t" style="left:902.8px;top:109.5px;font-size:13.2px;color:#cfcfcf;font-weight:normal;letter-spacing:0px;">Style:</div>
<div class="t" style="left:1021.8px;top:109.5px;font-size:14.1px;color:#ececec;font-weight:normal;letter-spacing:0px;">Document Setup</div>
<div class="t" style="left:1158.8px;top:109.5px;font-size:13.75px;color:#ececec;font-weight:normal;letter-spacing:0.1px;">Preferences</div>
<svg width="1280" height="1280"><path d="M12 144 L9 147 L12 150 M17 144 L14 147 L17 150" fill="none" stroke="#c8c8c8" stroke-width="1.1"/><path d="M34 162 L59 162" stroke="#363636" stroke-width="4.5" stroke-dasharray="1 1.5"/><path d="M107 153 L115 161 M115 153 L107 161" stroke="#e8e8e8" stroke-width="1.6"/></svg>
<div class="t" style="left:128px;top:150px;font-size:14px;color:#f0f0f0;font-weight:bold;letter-spacing:0.08px;">Seamless-Instagram-Carousel.ai* @ 15,59 % (RGB/Preview)</div>
<svg width="1280" height="1280"><rect x="9" y="181.5" width="36" height="28.5" rx="3" fill="#2c2c2c"/>
<path d="M82.5 203.0 L82.5 207.0 L78.5 207.0Z" fill="#cfcfcf"/>
<path d="M43 265.3 L43 269.3 L39 269.3Z" fill="#cfcfcf"/>
<path d="M43 296.45 L43 300.45 L39 300.45Z" fill="#cfcfcf"/>
<path d="M82.5 296.45 L82.5 300.45 L78.5 300.45Z" fill="#cfcfcf"/>
<path d="M43 327.6 L43 331.6 L39 331.6Z" fill="#cfcfcf"/>
<path d="M82.5 327.6 L82.5 331.6 L78.5 331.6Z" fill="#cfcfcf"/>
<path d="M43 358.75 L43 362.75 L39 362.75Z" fill="#cfcfcf"/>
<path d="M82.5 358.75 L82.5 362.75 L78.5 362.75Z" fill="#cfcfcf"/>
<path d="M43 389.9 L43 393.9 L39 393.9Z" fill="#cfcfcf"/>
<path d="M82.5 389.9 L82.5 393.9 L78.5 393.9Z" fill="#cfcfcf"/>
<path d="M43 421.04999999999995 L43 425.04999999999995 L39 425.04999999999995Z" fill="#cfcfcf"/>
<path d="M82.5 421.04999999999995 L82.5 425.04999999999995 L78.5 425.04999999999995Z" fill="#cfcfcf"/>
<path d="M43 452.2 L43 456.2 L39 456.2Z" fill="#cfcfcf"/>
<path d="M82.5 452.2 L82.5 456.2 L78.5 456.2Z" fill="#cfcfcf"/>
<path d="M43 514.5 L43 518.5 L39 518.5Z" fill="#cfcfcf"/>
<path d="M82.5 514.5 L82.5 518.5 L78.5 518.5Z" fill="#cfcfcf"/>
<path d="M43 545.65 L43 549.65 L39 549.65Z" fill="#cfcfcf"/>
<path d="M82.5 545.65 L82.5 549.65 L78.5 549.65Z" fill="#cfcfcf"/>
<path d="M82.5 576.8 L82.5 580.8 L78.5 580.8Z" fill="#cfcfcf"/>
<path d="M43 607.95 L43 611.95 L39 611.95Z" fill="#cfcfcf"/>
<path d="M21.5 185.0 L36 199.5 L28 199.5 L21.5 207.0Z" fill="none" stroke="#cfcfcf" stroke-width="1.6" stroke-linejoin="miter"/>
<path d="M60.0 185.0 L75.5 200.0 L67.5 200.0 L60.0 208.0Z" fill="#cfcfcf"/>
<path d="M18 237.15 L32 223.15" stroke="#cfcfcf" stroke-width="2.4" stroke-linecap="round"/>
<path d="M23 218.15 l1 2.5 2.5 1 -2.5 1 -1 2.5 -1 -2.5 -2.5 -1 2.5 -1z M33 216.15 l1 2.5 2.5 1 -2.5 1 -1 2.5 -1 -2.5 -2.5 -1 2.5 -1z" fill="#cfcfcf"/><circle cx="35" cy="225.15" r="1.4" fill="#cfcfcf"/>
<path d="M64.5 223.15 C52.5 217.15 62.5 211.15 74.5 217.15 C78.5 220.15 74.5 224.15 71.5 222.15" fill="none" stroke="#cfcfcf" stroke-width="1.5"/><circle cx="60.5" cy="226.15" r="2.5" fill="none" stroke="#cfcfcf" stroke-width="1.5"/><path d="M59.5 228.15 C61.5 233.15 56.5 234.15 60.5 236.15" fill="none" stroke="#cfcfcf" stroke-width="1.5"/>
<path d="M66.5 221.15 L76.5 232.15 L70.5 232.15 L66.5 238.15Z" fill="#cfcfcf"/>
<g transform="translate(27 258.3) rotate(45)"><rect x="-3.5" y="-13" width="7" height="5" fill="#cfcfcf"/><path d="M-5 -7 L5 -7 L7 -1 L0 12 L-7 -1Z" fill="#cfcfcf"/><path d="M0 2 L0 12" stroke="#535353" stroke-width="1"/><circle cx="0" cy="1.5" r="1.3" fill="#535353"/></g>
<g transform="translate(68.5 258.3) rotate(45)"><rect x="-3.5" y="-13" width="7" height="5" fill="#cfcfcf"/><path d="M-5 -7 L5 -7 L7 -1 L0 12 L-7 -1Z" fill="#cfcfcf"/><path d="M0 2 L0 12" stroke="#535353" stroke-width="1"/><circle cx="0" cy="1.5" r="1.3" fill="#535353"/></g>
<path d="M65.5 248.3 C70.5 254.3 54.5 256.3 57.5 264.3 C58.5 268.3 62.5 268.3 64.5 267.3" fill="none" stroke="#cfcfcf" stroke-width="1.4"/>
<path d="M18 279.45 L36 279.45 L36 284.45 L34.5 284.45 L34.5 281.45 L28.5 281.45 L28.5 297.45 L31 297.45 L31 299.45 L23 299.45 L23 297.45 L25.5 297.45 L25.5 281.45 L19.5 281.45 L19.5 284.45 L18 284.45Z" fill="#cfcfcf"/>
<path d="M57.5 298.45 L75.5 280.45" stroke="#cfcfcf" stroke-width="1.8" stroke-linecap="round"/>
<rect x="17" y="311.6" width="20" height="18" fill="#666" stroke="#cfcfcf" stroke-width="1.8"/>
<path d="M76.5 308.6 C78.5 310.6 69.5 320.6 65.5 323.6 L62.5 320.6 C65.5 315.6 74.5 307.6 76.5 308.6Z M61.5 321.6 L64.5 324.6 C63.5 329.6 58.5 331.6 55.5 331.6 C56.5 328.6 56.5 323.6 61.5 321.6Z" fill="#cfcfcf"/>
<g transform="translate(27 351.75) rotate(45)"><path d="M-4 -12 L4 -12 L4 5 L0 12 L-4 5Z" fill="#cfcfcf"/><path d="M-4 -6 L4 -9 M-4 -1 L4 -4 M-4 4 L4 1" stroke="#535353" stroke-width="1.2"/></g>
<g transform="translate(66.5 351.75) rotate(45)"><rect x="-6" y="-11" width="12" height="14" fill="#cfcfcf"/><rect x="-5.3" y="3" width="10.6" height="7" fill="none" stroke="#cfcfcf" stroke-width="1.4" rx="1"/></g>
<path d="M19 379.9 A9 9 0 1 1 22 390.9" fill="none" stroke="#cfcfcf" stroke-width="1.6" stroke-dasharray="1.6 1.8"/><path d="M19.5 378.9 A9 9 0 0 1 36 382.9" fill="none" stroke="#cfcfcf" stroke-width="2.2"/><path d="M15 376.9 L23 374.9 L20 382.9Z" fill="#cfcfcf"/>
<rect x="60.5" y="372.9" width="16" height="14" fill="none" stroke="#cfcfcf" stroke-width="1.4"/><rect x="56.5" y="381.9" width="12" height="11" fill="none" stroke="#cfcfcf" stroke-width="1.4"/><path d="M67.5 380.9 L73.5 374.9 M69.5 374.9 L73.5 374.9 L73.5 378.9" fill="none" stroke="#cfcfcf" stroke-width="1.4"/>
<path d="M17 406.04999999999995 C21 402.04999999999995 24 408.04999999999995 23 412.04999999999995 C27 416.04999999999995 32 412.04999999999995 35 410.04999999999995 C39 412.04999999999995 37 418.04999999999995 36 420.04999999999995 C33 414.04999999999995 30 420.04999999999995 25 419.04999999999995 C19 417.04999999999995 21 410.04999999999995 17 406.04999999999995Z" fill="#cfcfcf"/><path d="M17 424.04999999999995 L31 408.04999999999995" stroke="#cfcfcf" stroke-width="1.2"/><circle cx="17" cy="424.04999999999995" r="1.8" fill="#535353" stroke="#cfcfcf" stroke-width="1.2"/><circle cx="23" cy="416.04999999999995" r="1.8" fill="#535353" stroke="#cfcfcf" stroke-width="1.2"/><circle cx="31" cy="408.04999999999995" r="1.8" fill="#535353" stroke="#cfcfcf" stroke-width="1.2"/>
<rect x="63.5" y="406.04999999999995" width="15" height="16" fill="none" stroke="#cfcfcf" stroke-width="1.2" stroke-dasharray="3 2"/><path d="M55.5 403.04999999999995 L69.5 414.04999999999995 L63.5 415.04999999999995 L55.5 423.04999999999995Z" fill="#cfcfcf"/>
<circle cx="22" cy="444.2" r="8" fill="none" stroke="#cfcfcf" stroke-width="1.4"/><path d="M24 436.2 A8 8 0 0 1 34 443.2" fill="none" stroke="#cfcfcf" stroke-width="1.4"/><path d="M18 444.2 l8 0" stroke="#cfcfcf" stroke-width="1.4" stroke-dasharray="1.5 1.5"/><path d="M29 446.2 L40 453.2 L33 454.2 L30 459.2Z" fill="#cfcfcf"/>
<path d="M56.5 434.2 L56.5 455.2 L78.5 455.2 M56.5 434.2 L66.5 440.2 L66.5 447.2 L56.5 455.2 M56.5 442.2 L66.5 443.2 M61.5 437.2 L61.5 451.2 M66.5 448.2 L75.5 448.2 M66.5 452.2 L78.5 452.2 M68.5 445.2 L73.5 445.2" fill="none" stroke="#cfcfcf" stroke-width="1.2"/>
<rect x="17" y="467.34999999999997" width="20" height="18" fill="none" stroke="#cfcfcf" stroke-width="1.4"/><path d="M17 473.34999999999997 C23 470.34999999999997 30 473.34999999999997 37 471.34999999999997 M17 479.34999999999997 C24 476.34999999999997 31 480.34999999999997 37 477.34999999999997 M24 467.34999999999997 C27 473.34999999999997 23 479.34999999999997 25 485.34999999999997 M31 467.34999999999997 C34 473.34999999999997 30 479.34999999999997 32 485.34999999999997" fill="none" stroke="#cfcfcf" stroke-width="1.2"/>
<defs><linearGradient id="gtool" x1="0" x2="1"><stop offset="0" stop-color="#222"/><stop offset="1" stop-color="#ddd"/></linearGradient></defs><rect x="56.5" y="467.34999999999997" width="20" height="18" fill="url(#gtool)" stroke="#cfcfcf" stroke-width="1.4"/>
<g transform="translate(27 507.5) rotate(45)"><rect x="-3.5" y="-13" width="7" height="6" rx="3" fill="#cfcfcf"/><rect x="-5" y="-7" width="10" height="2.5" fill="#cfcfcf"/><path d="M-2.5 -4.5 L2.5 -4.5 L2.5 8 L0 12 L-2.5 8Z" fill="none" stroke="#cfcfcf" stroke-width="1.3"/></g>
<rect x="56.5" y="498.5" width="9" height="9" fill="#cfcfcf"/><circle cx="66.5" cy="507.5" r="5.5" fill="#8a8a8a" stroke="#cfcfcf" stroke-width="1.2"/><circle cx="72.5" cy="512.5" r="5.5" fill="#535353" stroke="#cfcfcf" stroke-width="1.4"/>
<rect x="23" y="532.65" width="11" height="15" rx="1" fill="none" stroke="#cfcfcf" stroke-width="1.4"/><circle cx="28.5" cy="541.65" r="2.5" fill="none" stroke="#cfcfcf" stroke-width="1.3"/><rect x="26" y="529.65" width="5" height="3" fill="#cfcfcf"/><path d="M16 530.65h1.6v1.6h-1.6z M19 530.65h1.6v1.6h-1.6z M16 533.65h1.6v1.6h-1.6z M19 533.65h1.6v1.6h-1.6z M16 536.65h1.6v1.6h-1.6z M22 530.65h1.6v1.6h-1.6z" fill="#cfcfcf"/>
<path d="M55.5 528.65 L55.5 548.65 L78.5 548.65" fill="none" stroke="#cfcfcf" stroke-width="1.4"/><rect x="58.5" y="538.65" width="3.5" height="10" fill="#cfcfcf"/><rect x="64.5" y="530.65" width="3.5" height="18" fill="#cfcfcf"/><rect x="70.5" y="535.65" width="3.5" height="13" fill="#cfcfcf"/><rect x="75.5" y="530.65" width="2.5" height="18" fill="#cfcfcf"/>
<path d="M20 557.8 L20 577.8 L36 577.8 L36 566.8 L31 562.8 L20 562.8 M15 562.8 L20 562.8" fill="#666" stroke="#cfcfcf" stroke-width="1.4"/>
<g transform="translate(66.5 569.8) rotate(40)"><rect x="-4" y="-12" width="8" height="6" fill="#cfcfcf"/><path d="M-4 -6 L4 -6 L0 12Z" fill="none" stroke="#cfcfcf" stroke-width="1.4"/></g>
<path d="M24 610.95 C19 606.95 15 601.95 16 599.95 C17 597.95 20 600.95 21 601.95 L21 592.95 C21 590.95 24 590.95 24 592.95 L24 590.95 C24 588.95 27 588.95 27 590.95 L27 591.95 C27 589.95 30 589.95 30 591.95 L30 594.95 C30 592.95 33 592.95 33 594.95 L33 603.95 C33 607.95 31 609.95 30 610.95Z" fill="#cfcfcf"/>
<circle cx="64.5" cy="598.95" r="7" fill="none" stroke="#cfcfcf" stroke-width="1.8"/><path d="M69.5 603.95 L76.5 610.95" stroke="#cfcfcf" stroke-width="2.4" stroke-linecap="round"/><rect x="32" y="651.5" width="45" height="45" fill="#1e1e1e" stroke="#e6e6e6" stroke-width="1.2"/>
<rect x="43" y="662.5" width="23" height="23" fill="#5a5a5a" stroke="#e6e6e6" stroke-width="1.6"/>
<rect x="8.5" y="628" width="45" height="44.5" fill="#ffffff"/>
<path d="M67 632 C73 632 77 634 77 640" fill="none" stroke="#cfcfcf" stroke-width="1.6"/><path d="M64 632 L68 628.5 L68 635.5Z M77 643 L73.5 638.5 L80.5 638.5Z" fill="#cfcfcf"/>
<rect x="13" y="685" width="8" height="8" fill="#111" stroke="#e6e6e6" stroke-width="1"/><rect x="9" y="681" width="8" height="8" fill="#fff" stroke="#111" stroke-width="1"/>
<rect x="9" y="708" width="22.5" height="23" fill="#3d3d3d"/>
<rect x="12" y="711" width="17" height="17" fill="#fff" stroke="#111" stroke-width="1.5"/>
<defs><linearGradient id="g2" x1="0" x2="1"><stop offset="0" stop-color="#fff"/><stop offset="1" stop-color="#111"/></linearGradient></defs><rect x="37.5" y="711" width="17" height="17" fill="url(#g2)" stroke="#222" stroke-width="1.5"/>
<rect x="64" y="711" width="17" height="17" fill="#fff" stroke="#222" stroke-width="1.5"/><path d="M65 727 L80 712" stroke="#e0161e" stroke-width="2.6"/>
<rect x="9" y="739" width="22.5" height="22" fill="#3d3d3d"/>
<circle cx="19" cy="749" r="4.5" fill="#8a8a8a" stroke="#cfcfcf" stroke-width="1"/><rect x="20" y="750" width="6" height="6" fill="#cfcfcf"/>
<circle cx="45" cy="749" r="4.5" fill="#8a8a8a" stroke="#cfcfcf" stroke-width="1"/><rect x="46" y="750" width="6" height="6" fill="#cfcfcf"/>
<circle cx="71" cy="750" r="5" fill="#6a6a6a" stroke="#7a7a7a" stroke-width="1"/>
<rect x="43.5" y="773" width="18" height="13" fill="#7a7a7a" stroke="#cfcfcf" stroke-width="1.2"/><rect x="33" y="779" width="18" height="14" fill="#6a6a6a" stroke="#cfcfcf" stroke-width="1.2"/><rect x="43.5" y="773" width="18" height="3" fill="#cfcfcf"/><rect x="33" y="779" width="18" height="3" fill="#cfcfcf"/>
<circle cx="39.5" cy="825" r="2" fill="#cfcfcf"/><circle cx="46.5" cy="825" r="2" fill="#cfcfcf"/><circle cx="53.5" cy="825" r="2" fill="#cfcfcf"/></svg>
<svg width="1280" height="1280"><rect x="102.5" y="1259.5" width="64" height="21" fill="#454545"/><rect x="166.5" y="1259.5" width="23.5" height="21" fill="#4b4b4b"/><path d="M174 1268 L178 1272 L182 1268" fill="none" stroke="#e0e0e0" stroke-width="1.5"/><rect x="197.5" y="1259.5" width="64.5" height="21" fill="#454545"/><rect x="262" y="1259.5" width="20" height="21" fill="#4b4b4b"/><path d="M268 1268 L272 1272 L276 1268" fill="none" stroke="#e0e0e0" stroke-width="1.5"/><rect x="286" y="1259.5" width="52.5" height="21" fill="#4e4e4e"/><path d="M297.5 1264 L297.5 1275 M307 1264 L300 1269.5 L307 1275Z M327 1264 L320 1269.5 L327 1275Z" fill="#6e6e6e" stroke="#6e6e6e" stroke-width="1.3"/><rect x="340" y="1259.5" width="53" height="21" fill="#454545"/><rect x="393" y="1259.5" width="22" height="21" fill="#4b4b4b"/><path d="M399 1268 L403 1272 L407 1268" fill="none" stroke="#e0e0e0" stroke-width="1.5"/><rect x="415" y="1259.5" width="55" height="21" fill="#4e4e4e"/><path d="M429 1264 L436 1269.5 L429 1275Z M448 1264 L455 1269.5 L448 1275Z M457.5 1264 L457.5 1275" fill="#cfcfcf" stroke="#cfcfcf" stroke-width="1.3"/><rect x="731" y="1259.5" width="24" height="21" fill="#4e4e4e"/><path d="M740 1264 L747 1269.5 L740 1275Z" fill="#dcdcdc"/><rect x="755" y="1259" width="525" height="21" fill="#474747"/><path d="M768 1265 L764 1269 L768 1273" fill="none" stroke="#bdbdbd" stroke-width="1.2"/><rect x="1031.5" y="1260" width="32.5" height="20" rx="10" fill="#656565"/></svg>
<div class="t" style="left:106px;top:1264.4px;font-size:13.6px;color:#f0f0f0;font-weight:normal;letter-spacing:0px;">15,59%</div>
<div class="t" style="left:201px;top:1264.4px;font-size:13.6px;color:#f0f0f0;font-weight:normal;letter-spacing:0px;">0°</div>
<div class="t" style="left:346px;top:1264.4px;font-size:13.6px;color:#f0f0f0;font-weight:normal;letter-spacing:0px;">1</div>
<div class="t" style="left:528.4px;top:1264.4px;font-size:14.2px;color:#e0e0e0;font-weight:normal;letter-spacing:0px;">Toggle Direct Selection</div>
</body></html>
